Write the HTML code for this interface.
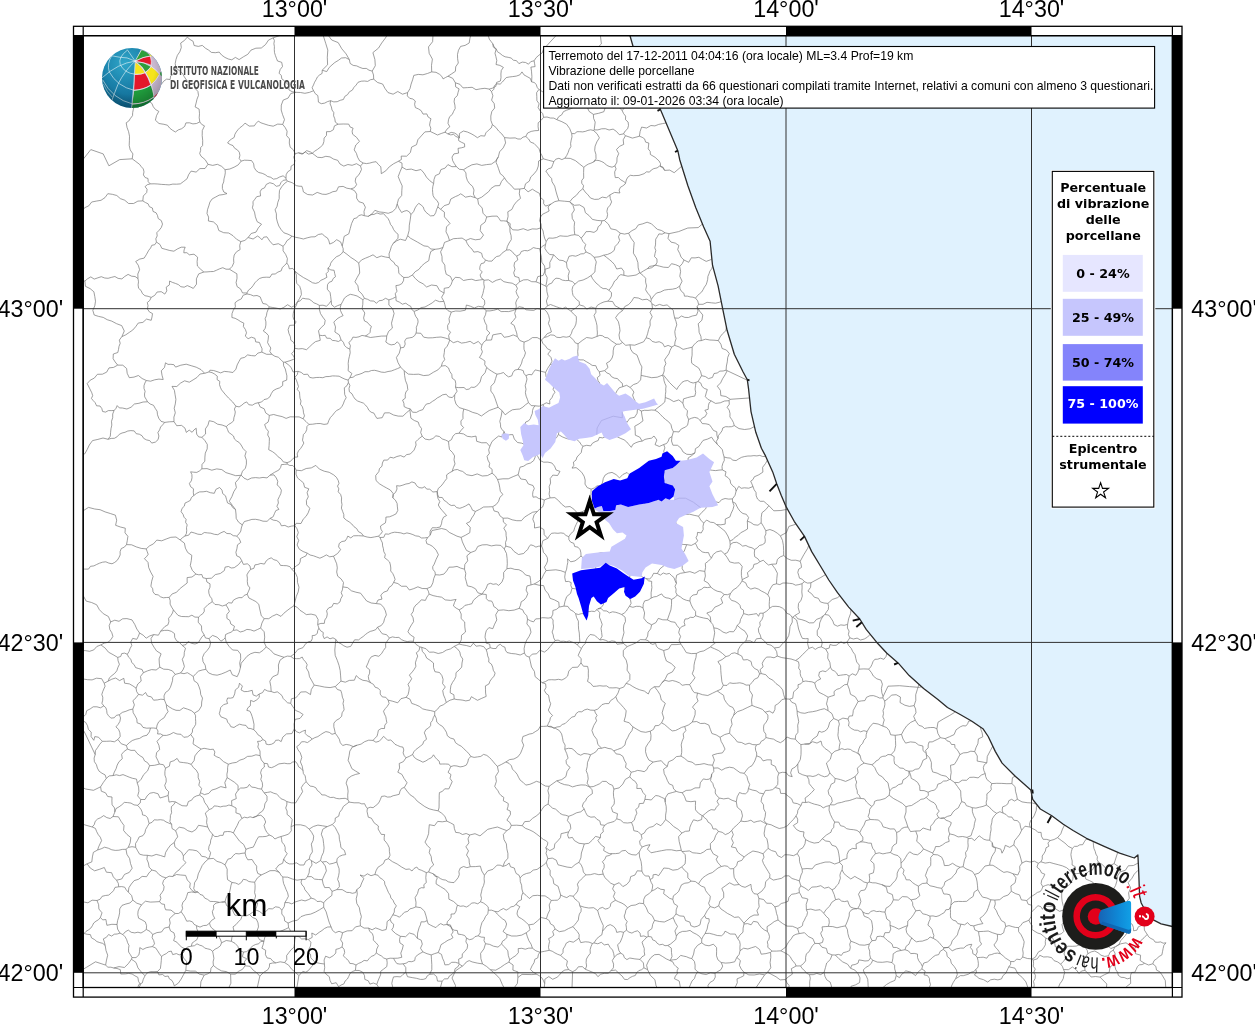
<!DOCTYPE html>
<html lang="it"><head><meta charset="utf-8"><title>Hai sentito il terremoto - Vibrazione delle porcellane</title>
<style>
html,body{margin:0;padding:0;background:#fff;}
body{width:1255px;height:1024px;overflow:hidden;position:relative;font-family:"Liberation Sans",sans-serif;}
svg{position:absolute;left:0;top:0;display:block;will-change:transform;}
.ax{font-family:"Liberation Sans",sans-serif;font-size:23.3px;fill:#000;}
.hd{font-family:"Liberation Sans",sans-serif;font-size:12px;fill:#000;}
.lg{font-family:"DejaVu Sans",sans-serif;font-weight:bold;font-size:12.5px;fill:#000;text-anchor:middle;}
</style></head><body>
<svg width="1255" height="1024" viewBox="0 0 1255 1024">
<defs><clipPath id="mapclip"><rect x="83.2" y="35.7" width="1089.2" height="951.8"/></clipPath></defs>
<rect x="0" y="0" width="1255" height="1024" fill="#fff"/>
<g clip-path="url(#mapclip)">
<path d="M630.0,35.7 L633.0,46.3 L646.0,77.0 L660.0,108.5 L677.8,150.7 L679.8,160.0 L687.8,185.5 L695.8,207.8 L703.7,226.9 L710.1,241.3 L711.2,252.4 L712.5,265.2 L718.1,285.9 L722.6,308.4 L727.1,330.3 L734.3,354.2 L743.0,371.7 L747.3,379.7 L748.6,389.2 L751.0,411.6 L755.8,432.3 L761.4,448.2 L765.5,455.9 L772.7,471.9 L776.7,483.8 L781.4,495.8 L786.2,506.9 L794.2,521.3 L804.5,536.4 L811.7,551.6 L821.3,567.5 L828.8,580.0 L837.5,592.7 L848.7,607.1 L859.8,619.0 L866.2,629.4 L876.6,642.2 L886.9,653.3 L898.1,662.9 L909.2,675.6 L923.6,688.4 L937.9,699.5 L947.5,707.5 L960.2,714.5 L971.5,721.0 L982.9,728.7 L988.2,736.5 L995.4,751.6 L1002.1,763.1 L1015.5,776.5 L1030.8,789.9 L1032.7,799.4 L1040.3,809.0 L1051.8,815.7 L1063.3,824.3 L1073.1,830.5 L1086.4,838.3 L1104.7,846.6 L1119.6,853.2 L1134.3,858.0 L1137.9,854.9 L1138.7,871.5 L1139.6,896.4 L1141.2,903.0 L1146.0,912.0 L1152.8,919.7 L1161.1,923.8 L1172.4,926.5 L1172.4,35.7Z" fill="#e0f2fe"/>
<defs><clipPath id="landclip"><path d="M630.0,35.7 L633.0,46.3 L646.0,77.0 L660.0,108.5 L677.8,150.7 L679.8,160.0 L687.8,185.5 L695.8,207.8 L703.7,226.9 L710.1,241.3 L711.2,252.4 L712.5,265.2 L718.1,285.9 L722.6,308.4 L727.1,330.3 L734.3,354.2 L743.0,371.7 L747.3,379.7 L748.6,389.2 L751.0,411.6 L755.8,432.3 L761.4,448.2 L765.5,455.9 L772.7,471.9 L776.7,483.8 L781.4,495.8 L786.2,506.9 L794.2,521.3 L804.5,536.4 L811.7,551.6 L821.3,567.5 L828.8,580.0 L837.5,592.7 L848.7,607.1 L859.8,619.0 L866.2,629.4 L876.6,642.2 L886.9,653.3 L898.1,662.9 L909.2,675.6 L923.6,688.4 L937.9,699.5 L947.5,707.5 L960.2,714.5 L971.5,721.0 L982.9,728.7 L988.2,736.5 L995.4,751.6 L1002.1,763.1 L1015.5,776.5 L1030.8,789.9 L1032.7,799.4 L1040.3,809.0 L1051.8,815.7 L1063.3,824.3 L1073.1,830.5 L1086.4,838.3 L1104.7,846.6 L1119.6,853.2 L1134.3,858.0 L1137.9,854.9 L1138.7,871.5 L1139.6,896.4 L1141.2,903.0 L1146.0,912.0 L1152.8,919.7 L1161.1,923.8 L1172.4,926.5 L1172.4,987.5 L83.2,987.5 L83.2,35.7Z"/></clipPath></defs>
<g clip-path="url(#landclip)"><path d="M1162.0,974.9 1159.8,971.8 1156.5,970.1 1155.8,966.3 1152.8,963.8M1166.0,942.8 1163.9,945.3 1163.1,948.6 1162.5,951.7 1161.9,954.9 1159.1,956.5 1156.7,958.7 1154.0,960.7 1152.8,963.8M119.3,79.0 124.7,79.0 130.2,78.5 130.7,81.3 130.9,84.1 132.8,86.3 134.3,88.6M134.3,88.6 137.7,88.0 140.2,85.5 143.0,83.7 146.0,82.1 149.3,83.0 152.1,84.9 155.7,82.9 158.8,85.6 161.7,83.9 163.7,81.2 166.6,79.1 170.2,79.5 170.6,75.9 173.8,74.0 175.5,71.2 175.9,67.9M187.3,37.1 184.4,40.5 180.7,43.0 181.3,47.5 179.8,51.8 177.4,55.3 176.0,59.4 175.2,63.6 175.9,67.9M156.4,241.8 155.8,238.8 157.2,235.9 156.8,232.7 159.1,230.3 161.3,227.5 162.5,224.1 161.3,220.6 158.2,218.5 157.5,215.5 156.1,212.8 153.0,211.4 152.4,208.0 149.4,206.7 148.1,203.8 145.4,202.5 142.8,200.9M180.3,183.9 176.5,184.2 172.8,184.1 169.1,184.9 165.3,184.6 161.6,184.4 157.8,184.0 154.1,183.8 150.3,183.9M142.8,200.9 143.3,196.0 146.7,192.5 147.1,189.2 145.0,186.7 147.3,184.7 150.3,183.9M116.5,880.2 113.3,876.9 111.6,872.7 106.4,872.2 104.3,867.5 99.5,869.3 94.6,870.8 90.2,868.0 87.1,863.8M116.5,880.2 118.3,883.3 118.7,886.8M118.7,886.8 115.0,887.4 113.5,890.7 111.2,893.0 108.7,895.1 105.4,895.5 102.1,896.3 100.2,899.2 97.0,900.5M97.0,900.5 92.1,900.2 87.9,902.8 83.3,901.9 79.1,899.7 75.7,896.6 74.2,892.2 72.5,887.5 67.8,885.9 63.2,884.6 59.7,881.3 56.7,877.7 53.2,874.6 49.1,876.8 44.7,878.1 40.0,878.5 35.7,880.4M35.7,880.4 38.9,877.2 43.0,875.5 43.7,871.2 44.3,866.8 48.8,867.5 51.9,870.8 56.0,869.4 60.3,868.5 63.8,868.9 67.1,867.9 70.6,868.9 74.0,867.9 77.4,866.9 80.3,864.9 83.9,865.6 87.1,863.8M1162.0,974.9 1165.3,980.5 1165.7,986.9 1161.6,991.7 1158.6,997.3 1158.4,1003.3 1161.9,1008.1 1165.5,1012.8 1165.7,1018.7 1165.5,1025.2 1160.9,1029.7 1155.0,1030.9 1149.7,1033.8 1147.1,1038.8 1142.7,1042.5 1136.6,1043.4 1133.4,1048.6M1166.0,942.8 1163.2,943.2 1160.6,941.9 1157.8,942.3 1155.1,942.1 1153.5,939.7 1150.9,938.5 1148.7,936.8 1147.2,934.4M1190.4,870.8 1189.7,874.0 1187.0,875.7 1184.4,877.0 1182.0,878.7 1179.1,879.4 1176.8,881.2 1174.8,883.3 1172.1,884.6M1172.1,884.6 1170.8,887.7 1167.7,889.4 1164.6,890.4 1161.7,891.9 1160.3,894.8 1158.1,897.1 1157.4,900.9 1153.5,901.5 1150.8,903.6 1148.1,905.7 1149.6,909.4 1147.2,912.6 1146.9,915.8 1145.4,918.6 1146.7,922.2 1144.1,924.9M1147.2,934.4 1144.4,930.1 1144.1,924.9M84.9,281.0 87.7,278.7 90.8,276.9 94.2,279.1 97.9,277.8 101.3,276.7 104.7,278.0 108.1,278.3 111.3,277.4 114.9,276.5 118.1,278.4 121.9,278.9 124.7,276.5 128.1,274.4 131.6,276.2 135.1,276.5 138.0,278.6M84.9,281.0 64.6,277.0 49.6,262.8 31.1,270.1 12.7,277.4 -0.6,263.6 -19.3,259.3 -35.7,249.1 -43.0,231.2 -57.1,244.2 -76.2,245.8 -93.3,238.6 -111.7,238.3 -130.1,239.8 -145.5,229.6 -162.9,226.1 -180.3,230.0M79.5,215.5 74.1,212.7 68.6,210.2 62.7,206.9 56.5,209.7 50.6,211.5 44.7,213.2 39.5,208.8 32.8,209.8 28.2,214.4 22.4,217.4 16.0,218.7 9.5,218.0 2.6,216.6 -3.8,219.6 -9.2,215.6 -14.2,211.0M148.8,250.2 146.6,254.2 144.2,258.1 139.7,259.1 135.7,261.5 138.3,265.3 139.6,269.7 137.8,274.0 138.0,278.6M132.2,158.8 135.8,161.5 139.5,164.3M150.3,183.9 148.2,181.7 148.0,178.5 145.1,177.5 143.4,174.9 144.0,171.9 143.3,168.9 141.3,166.7 139.5,164.3M132.2,158.8 119.7,159.6 108.9,165.8 103.2,153.9 90.8,149.6 81.1,161.9 69.5,151.5 58.8,152.1 48.8,156.3 43.4,165.7 37.1,174.5 28.1,180.7 17.7,184.1 12.0,193.2 2.8,198.8 -2.9,208.7 -14.2,211.0M142.8,200.9 137.9,201.1 133.6,203.5 128.6,203.5 124.7,200.2 120.3,198.6 116.8,195.5 112.3,194.3 107.8,193.7 105.0,197.6 101.0,200.3 96.3,201.1 91.7,202.0 88.8,205.8 84.5,207.8 81.9,211.6 79.5,215.5M156.5,242.1 156.4,241.8M156.5,242.1 154.8,244.7 151.8,245.3 150.6,248.0 148.8,250.2M126.2,122.8 127.0,127.4 128.6,131.7 129.5,136.2 129.4,140.8 129.2,145.4 130.2,149.9 132.9,153.9 132.2,158.8M87.1,863.8 91.8,861.9 92.4,856.9 93.4,852.3 97.6,850.0M116.5,880.2 121.7,879.0 124.5,874.4 129.3,872.4 132.2,868.2 130.5,863.5 129.6,858.6 126.9,854.3 126.0,849.3M126.0,849.3 122.4,849.4 118.9,850.2 115.3,850.4 111.8,849.8 108.3,848.2 104.6,847.2 101.2,848.8 97.6,850.0M-15.6,799.5 -8.2,801.3 -1.3,797.8 6.0,796.1 13.0,799.1 20.3,801.1 27.3,798.4 33.9,803.8 41.6,800.3 49.1,800.5 55.6,804.2 62.1,807.4 69.1,809.4 71.9,816.7 77.8,821.9 84.9,824.9 92.2,827.0M97.6,850.0 98.6,846.9 100.0,843.9 101.6,840.6 100.3,837.2 98.3,834.7 96.7,831.7 95.4,828.4 92.2,827.0M100.4,917.5 98.5,919.7 96.0,921.2 93.7,923.0 92.4,925.7 90.8,928.1 88.5,929.9 86.0,931.4 84.1,933.5M100.4,917.5 102.0,912.8 98.9,909.0 98.6,904.6 97.0,900.5M-40.2,958.4 -31.9,958.8 -23.8,960.7 -15.7,958.8 -8.0,955.7 0.9,957.6 7.8,963.7 15.7,959.8 24.2,957.2 32.4,964.2 41.2,958.1 49.2,954.1 58.0,955.1 66.1,951.9 71.6,945.0 76.3,937.6 84.1,933.5M134.3,88.6 134.1,91.6 135.0,94.5 135.1,97.5 134.8,100.4M126.2,122.8 128.8,121.0 130.5,118.3 132.5,115.7 132.7,112.5 133.3,109.5 134.1,106.5 134.6,103.5 134.8,100.4M1114.1,963.7 1115.0,966.7 1115.8,969.7 1117.6,972.3 1118.3,975.3 1121.0,977.3 1124.2,977.5 1127.3,978.8 1130.5,978.0M1114.1,963.7 1114.7,960.2 1115.2,956.8 1115.0,953.2 1113.3,950.1M1113.3,950.1 1115.1,946.8M1134.8,948.3 1130.3,945.7 1126.0,942.8 1120.8,943.8 1116.2,946.3M1134.8,948.3 1135.5,953.7 1140.6,955.2 1140.2,960.5 1144.6,963.3M1115.1,946.8 1116.2,946.3M1144.6,963.3 1142.1,964.6 1139.3,964.8 1137.3,966.8 1136.2,969.4 1134.8,972.3 1131.6,972.5 1130.6,975.2 1130.5,978.0M1100.0,977.1 1104.5,974.7 1109.1,972.5 1110.0,967.2 1114.1,963.7M1100.0,977.1 1106.8,984.0 1105.8,993.7 1100.0,1000.4 1097.0,1008.8 1102.5,1015.2 1102.8,1023.7 1105.2,1031.5 1110.8,1037.5 1117.5,1042.7 1120.8,1050.6 1124.3,1058.2 1130.3,1064.0 1134.6,1072.0 1135.0,1081.1 1130.2,1088.5 1126.8,1096.7M1133.4,1048.6 1133.0,1043.9 1134.9,1039.6 1132.6,1035.5 1132.4,1030.9 1135.5,1026.7 1134.7,1021.5 1130.4,1018.5 1129.6,1013.4 1128.6,1008.7 1126.3,1004.6 1128.1,1000.2 1129.3,995.7 1127.6,991.2 1126.5,986.6 1130.7,983.4 1130.5,978.0M1126.8,920.9 1129.5,922.6 1132.3,924.4 1133.4,927.5 1133.6,930.8 1137.0,930.1 1138.3,926.8 1141.1,925.6 1144.1,924.9M1147.2,934.4 1144.0,937.8 1140.5,940.9 1138.0,944.8 1134.8,948.3M1126.8,920.9 1130.3,923.9 1128.8,928.3 1127.4,931.9 1125.5,935.3 1123.1,938.0 1120.7,940.7 1119.2,944.1 1116.2,946.3M1152.8,963.8 1148.6,965.0 1144.6,963.3M134.8,100.4 138.3,100.4 141.9,100.9 145.4,100.5 148.9,101.2 151.9,103.4 153.3,106.8 155.6,109.6 158.8,111.4 156.5,115.6 155.4,120.2 159.0,123.5 163.9,124.3 167.4,125.2 169.7,128.1 172.4,130.2 175.4,132.0M180.3,183.9 183.7,181.4 187.1,178.7 188.6,174.7 191.1,171.1M175.4,132.0 178.3,129.9 181.7,128.7 184.7,126.4 185.9,122.9 189.5,122.8 192.9,123.9 196.5,123.5 199.8,121.9M175.9,67.9 179.1,70.4 182.3,73.0 184.2,76.6 186.4,80.0 189.8,83.4 194.5,83.4 194.7,88.0 197.9,91.4M197.9,91.4 198.5,95.4 197.0,99.2 196.1,103.1 195.1,106.9 199.1,109.1 199.5,113.7 199.2,117.8 199.8,121.9M208.0,164.3 205.2,159.7 201.0,156.2 199.7,153.5 200.6,150.6 200.6,147.7 202.6,145.5 202.7,140.5 202.2,135.5 202.3,130.5 204.5,125.9M191.1,171.1 196.1,172.1 199.9,168.6 205.0,168.5 208.0,164.3M199.8,121.9 201.7,124.4 204.5,125.9M208.0,164.3 212.7,165.4 217.4,164.3 221.7,166.4 225.1,169.7M207.0,213.6 207.5,209.7 208.8,205.9 209.9,202.1 212.2,198.9 215.7,197.0 219.2,195.1 223.1,194.6 227.0,193.6M227.0,193.6 223.8,192.0 222.4,188.6 222.4,185.1 223.7,181.9 224.0,178.8 224.8,175.8 225.3,172.8 225.1,169.7M242.5,125.9 240.1,127.5 238.1,129.6 236.3,131.9 234.9,134.3 234.2,137.4 231.6,139.0 229.3,140.7 227.6,143.0 230.2,144.5 233.0,145.6 234.7,148.3 237.3,149.8 239.3,152.2 239.9,155.3 239.2,158.5 241.2,161.1M225.1,169.7 229.8,169.0 234.1,167.2 238.2,164.9 241.2,161.1M185.2,247.2 184.1,249.9 183.8,252.8 186.9,252.7 189.3,254.8 194.0,254.2 197.6,257.2 197.1,261.6 197.4,266.0 200.5,269.1 203.8,272.0M208.4,221.0 213.4,221.9 217.2,225.3 218.8,230.5 223.7,232.7 228.7,233.0 233.0,235.7 236.5,239.2 240.8,241.6M203.8,272.0 207.0,271.9 210.3,271.6 213.5,271.5 216.6,270.2 219.6,268.8 222.8,267.7 226.0,269.2 229.4,269.2M229.4,269.2 232.2,266.4 233.8,262.7 233.6,258.8 234.2,255.0 236.6,251.7 240.1,249.6 239.7,245.5 240.8,241.6M156.5,242.1 160.0,244.5 161.8,248.3 165.8,249.4 169.8,250.5 173.9,251.2 177.5,248.9 181.2,247.2 185.2,247.2M207.0,213.6 208.6,217.1 208.4,221.0M193.3,288.4 190.3,286.9 187.3,285.6 184.2,287.2 180.8,286.7 178.4,284.6 175.4,283.4 172.4,282.4 169.6,281.0 169.4,284.9 166.2,287.2 166.8,290.9 164.8,294.1 161.3,291.7 157.1,292.0 154.7,295.4 151.2,297.4M138.0,278.6 138.5,281.8 138.1,284.9 138.6,288.3 141.1,290.5 142.4,293.5 144.9,295.7 148.1,296.3 151.2,297.4M193.3,288.4 196.5,284.2 196.4,278.8 198.7,273.9 203.8,272.0M107.9,967.2 110.9,967.2 113.7,968.0M107.9,967.2 105.6,965.1M105.6,965.1 106.5,960.1 107.7,955.2 106.0,950.5 105.2,945.5M113.7,968.0 119.0,966.6 124.4,967.5 128.3,963.7 131.4,959.3M132.0,957.6 130.4,954.7 128.6,952.0 128.5,948.8 129.0,945.5 127.6,942.7 126.7,939.7 125.2,936.9 122.9,934.6M132.0,957.6 131.4,959.3M105.2,945.5 104.4,942.1 103.3,938.9 106.4,937.3 108.6,934.5 111.6,936.1 114.3,934.2 117.2,934.0 120.0,933.1M122.9,934.6 120.0,933.1M134.9,1003.2 135.6,999.4 133.1,996.6 133.6,993.2 135.0,990.1 138.4,988.0 140.6,984.7 138.5,981.3 137.9,977.4 134.9,975.8 132.1,974.0 128.7,973.4 125.3,973.9 120.8,974.0 120.3,969.6 117.0,968.5 113.7,968.0M-40.2,958.4 -29.7,957.3 -22.4,964.9 -13.3,967.7 -4.7,971.7 3.0,977.9 12.2,981.6 21.9,983.0 31.8,982.2 36.2,971.4 47.8,970.7 58.2,973.4 67.3,967.6 77.0,972.9 86.5,967.3 95.5,961.8 105.6,965.1M84.1,933.5 87.2,934.3 90.4,934.6 91.5,937.9 94.6,939.6 96.9,941.6 99.8,942.6 102.8,943.4 105.2,945.5M134.9,1003.2 132.8,999.5 132.7,995.3 134.1,991.2 137.5,988.6 138.7,984.7 142.3,982.9 143.3,979.2 145.0,975.8M145.0,975.8 141.3,972.0 137.9,967.8 137.0,965.1 136.0,962.5 133.8,960.8 131.4,959.3M152.3,946.6 155.6,947.9 157.6,950.8 159.5,953.8 161.5,956.5M152.3,946.6 149.2,947.1 146.1,947.8 142.9,949.5 139.8,947.6 139.6,951.3 138.9,954.9 136.0,957.6 132.0,957.6M145.0,975.8 147.2,972.9 150.5,971.6 154.0,971.7 157.5,971.5M161.5,956.5 161.3,960.4 160.9,964.4 160.4,968.5 157.5,971.5M100.4,917.5 102.7,919.9 105.9,919.5 106.4,922.4 106.9,925.3 111.9,924.3 117.0,924.5M117.0,924.5 117.6,929.1 120.0,933.1M117.0,924.5 117.6,920.6 118.8,916.8 119.6,912.9 119.7,908.9 122.0,905.4 125.9,904.0 129.9,903.0 132.8,900.1M118.7,886.8 121.7,886.6 124.7,887.2 126.2,889.8 128.3,892.1M132.8,900.1 131.6,895.5 128.3,892.1M151.2,297.4 149.8,300.4 147.3,302.5 148.0,305.7 147.4,308.9 149.4,311.9 152.5,313.6 152.0,317.0 151.2,320.3M84.9,281.0 85.4,286.3 90.1,288.6 93.9,291.8 94.8,296.6 95.5,301.2 94.8,305.8 92.8,310.3 94.2,315.0 98.6,316.4 103.2,317.4 107.2,319.7 111.7,321.1 116.6,323.7 121.7,325.6 124.3,331.0 121.9,336.6M121.9,336.6 125.8,334.8 129.3,332.4 132.8,330.0 135.6,326.8 138.3,323.0 142.9,322.4 146.5,319.1 151.2,320.3M121.9,336.6 119.3,340.1M87.2,383.6 90.2,380.2 94.3,378.1 97.4,374.3 102.4,374.2 106.7,372.1 109.0,367.9 113.6,367.4 117.7,365.1M119.3,340.1 120.2,343.3 119.0,346.4 118.5,349.5 117.8,352.5 113.3,354.0 113.1,358.7 115.2,362.0 117.7,365.1M117.7,365.1 122.8,365.2 126.6,368.5 127.2,373.3 129.3,377.7 134.0,377.1 138.4,375.5 142.1,378.5 146.3,380.5M114.1,410.5 116.0,408.3 117.2,405.6 119.3,407.9 122.4,408.0 126.9,409.0 131.1,407.2 134.4,404.0 138.9,403.3 143.1,402.0 147.5,401.8M114.1,410.5 111.2,410.6 108.3,410.6 105.6,412.1 102.6,411.5 101.8,408.5 100.0,406.0 96.6,405.8 95.1,402.6 93.2,400.6 91.4,398.4 92.7,395.7 91.8,392.8 89.5,388.2 87.2,383.6M147.5,401.8 146.2,399.3 144.7,396.9 144.5,394.0 145.1,391.3 144.0,388.5 144.0,385.7 144.9,383.0 146.3,380.5M165.5,362.8 164.5,367.4 161.3,370.8 162.0,375.2 163.2,379.5 158.9,379.1 154.7,379.8 150.6,381.2 146.3,380.5M241.2,161.1 244.4,160.2 247.9,160.3 251.6,160.6 253.7,163.8 254.1,167.3 255.9,170.4 258.7,172.5 262.2,173.3 265.1,174.6 267.6,176.5 270.8,177.3 273.4,179.2 276.7,178.6 279.6,177.0 283.1,175.8 286.0,178.2M295.3,153.7 293.8,157.0 294.8,160.5 294.3,164.2 291.1,166.1 290.8,169.8 287.7,171.8 286.1,174.8 286.0,178.2M242.5,125.9 245.0,123.1M295.3,153.7 293.4,149.9 290.2,147.2 289.3,143.1 289.5,138.9 286.6,135.6 287.1,131.2 285.2,127.6 282.7,124.4M282.7,124.4 277.7,124.1 273.2,126.2 268.5,125.3 263.9,123.8 260.9,122.8 258.3,121.1 256.1,123.3 254.3,125.9 249.2,126.1 245.0,123.1M629.5,55.6 627.0,57.4 625.7,60.1 626.2,63.2 624.6,66.0 621.6,64.6 618.4,65.1 616.0,67.2 613.6,69.2 610.7,69.8 607.8,70.3 606.0,67.9 603.5,66.3 598.4,65.2 593.5,63.6M586.2,-242.0 603.7,-229.4 609.7,-208.7 614.6,-188.9 615.7,-168.5 615.8,-148.4 611.2,-128.9 608.6,-108.6 597.3,-91.5 589.6,-73.1 593.9,-53.6 605.9,-35.9 598.6,-15.8 594.0,3.4 598.8,22.6 601.4,43.9 586.2,58.9M593.5,63.6 589.3,62.1 586.2,58.9M209.9,370.2 213.6,370.5 217.0,371.6 220.7,372.9 224.3,371.4 228.6,371.8 232.9,372.5 235.9,369.2 237.2,364.9 238.9,361.6 240.8,358.3 244.6,357.4 247.6,354.9 251.3,355.6 255.2,355.9 257.9,353.1 261.8,352.1M231.9,317.5 235.1,318.3 238.1,319.9 240.8,321.7 243.8,323.1 243.4,326.6 245.4,329.5 246.5,332.8 245.3,336.1 248.1,338.7 251.5,337.2 255.0,338.4 255.7,341.9 259.4,342.4 260.7,345.8 262.1,348.8 261.8,352.1M240.8,241.6 244.9,240.4 248.1,237.5M248.1,237.5 251.2,233.5 256.0,232.1 258.3,227.9 261.5,224.2 257.1,221.6 255.4,216.8 254.5,212.1 252.4,207.8M286.0,178.2 286.4,179.9M252.4,207.8 253.1,204.7 253.0,201.7 254.9,199.2 256.7,196.7 260.6,195.9 260.1,191.8 261.6,189.1 264.5,187.9 266.3,184.4 269.8,182.7 273.5,183.8 276.3,186.3 279.6,185.6 281.0,182.5 283.2,180.3 286.4,179.9M161.5,956.5 163.8,954.8 166.3,953.6 168.5,951.7 171.3,951.1 172.7,954.6 176.4,953.6 179.2,954.9 182.1,953.9M157.5,971.5 158.9,974.9 162.6,974.5 165.0,976.5 168.2,976.0 169.4,978.9 172.0,980.5 173.4,983.1 174.3,985.9M174.3,985.9 178.4,983.1 181.2,979.0 183.5,974.7 185.8,970.3M182.1,953.9 183.7,958.1 186.6,961.5 186.2,965.9 185.8,970.3M132.8,900.1 136.8,903.2 141.6,904.8M122.9,934.6 125.2,931.9 128.3,930.1 131.2,932.3 134.8,932.9 137.9,932.2 141.0,933.0 143.8,931.4 146.3,929.5M141.6,904.8 139.6,907.7 138.1,911.0 137.8,914.6 138.6,918.2 142.0,919.9 145.3,921.9 146.6,925.6 146.3,929.5M152.3,946.6 154.5,943.9 153.7,940.6 152.1,937.7 152.7,934.5M182.1,953.9 184.1,951.6 185.2,948.9M185.2,948.9 181.9,947.3 179.2,944.9 176.9,942.2 173.6,940.6 174.9,936.8 174.0,932.9 170.5,930.9 169.1,927.0M169.1,927.0 164.4,928.1 161.5,932.0 156.9,932.6 152.7,934.5M146.3,929.5 150.0,931.4 152.7,934.5M164.7,422.4 161.0,421.3 158.8,418.3 157.5,414.8 157.1,411.2 155.2,408.3 153.5,405.3 150.2,404.0 147.5,401.8M151.9,443.0 151.8,443.1M151.9,443.0 155.4,442.1 158.1,439.6 158.9,436.0 157.9,432.5 159.6,429.9 160.6,427.0 162.7,424.8 164.7,422.4M114.1,410.5 112.7,414.0 112.7,417.7 111.5,421.3 111.8,425.1 111.0,428.7 110.6,432.3 110.3,436.2 108.1,439.3M108.1,439.3 111.2,438.4 114.4,438.3 117.2,436.7 119.3,434.3 122.0,433.0 125.0,432.3 127.8,431.0 130.9,430.6 134.2,430.9 136.2,433.7 139.3,434.2 142.0,435.7 143.7,438.4 146.5,439.9 149.7,440.6 151.8,443.1M164.7,422.4 169.3,421.8 174.0,421.6M165.5,362.8 168.0,364.4 170.9,364.3 173.9,364.7 175.6,367.1 180.8,365.2 186.2,364.2 191.2,365.7 196.2,367.2 201.0,369.6 204.7,373.3M174.0,421.6 173.9,417.1 175.3,412.8 174.2,408.3 175.3,403.9 175.9,399.3 175.1,394.8 174.4,390.3 172.0,386.4 176.8,386.5 180.4,383.2 184.6,380.8 189.3,382.2 193.1,379.9 196.9,377.5 200.1,374.0 204.7,373.3M209.9,370.2 209.0,371.9M209.0,371.9 204.7,373.3M201.9,437.3 198.7,436.9 196.7,434.2 196.4,431.2 196.2,428.2 193.9,430.0 192.1,432.3 189.2,430.1 186.3,432.4 185.0,428.2 181.6,425.4 176.7,425.7 174.0,421.6M201.9,437.3 204.9,440.6 207.3,444.4 207.2,448.9 205.3,453.1 204.9,457.1 204.8,461.2 202.0,464.5 201.9,468.8M189.4,483.4 191.3,480.9 192.0,477.8 191.9,474.6 190.6,471.8 193.7,472.2 196.8,472.4 199.5,470.9 201.9,468.8M273.2,37.8 274.4,40.6 273.9,43.7 274.4,46.6 274.3,49.6 274.5,52.6 275.4,55.5 276.4,58.2 277.5,61.0 281.7,62.3 282.5,66.5 280.2,69.5 279.1,73.2 281.3,75.5 281.8,78.8 284.3,80.7 286.5,82.9M273.2,37.8 268.5,40.1 265.5,44.6 261.3,48.0 255.9,48.2 251.0,50.1 247.8,54.3 243.4,56.8 239.1,59.6M187.3,37.1 190.0,39.5 193.1,41.3 194.1,45.5 198.3,46.4 202.3,45.4 205.4,48.2 208.6,50.1 211.4,52.4 215.3,52.7 219.2,52.1 221.7,55.1 224.9,57.4 228.3,59.0 231.8,59.8 235.4,57.4 239.1,59.6M300.3,-52.4 304.1,-46.7 308.7,-41.5 310.8,-34.9 311.0,-27.9 308.0,-21.6 308.3,-14.7 305.2,-8.7 302.2,-2.7 298.8,3.5 299.9,10.5 296.9,16.6 295.7,23.3 287.6,21.8 283.5,29.0 280.1,35.4 273.2,37.8M295.9,92.3 292.2,91.7 288.9,89.9 289.1,85.9 286.5,82.9M295.9,92.3 290.8,93.5 288.1,98.1 283.2,100.1 281.3,105.1 281.2,110.0 282.6,114.7 284.5,119.6 282.7,124.4M586.2,-242.0 595.3,-223.7 593.6,-203.4 588.9,-184.1 589.7,-164.2 586.8,-144.0 590.4,-123.9 594.8,-103.0 611.4,-89.5 604.4,-71.4 596.0,-53.9 585.3,-37.8 576.1,-20.7 576.3,1.0 577.6,22.7 558.2,33.2 543.4,49.4M586.2,58.9 583.1,60.4 580.2,62.3 576.8,62.8 573.8,64.6M573.8,64.6 570.5,61.5 568.3,57.5 564.8,54.7 560.6,52.9 556.1,51.9 551.6,53.0 547.3,51.5 543.4,49.4M483.2,23.3 481.6,26.4 483.5,29.2 485.9,31.3 486.0,34.5 488.5,36.3 489.3,39.2 491.1,41.5 492.8,43.8M492.8,43.8 493.3,47.1 496.2,48.7 497.4,51.7 500.0,53.4 502.4,55.4 505.1,56.8 508.1,57.3 511.1,58.0 513.4,60.2 516.5,60.7 518.9,63.6 522.3,62.1 525.6,62.5 528.5,64.2 530.8,61.6 534.1,60.8M543.4,49.4 542.1,53.0 538.9,55.2 536.1,57.7 534.1,60.8M573.8,64.6 572.4,67.5 573.1,70.6 570.1,71.4 567.6,73.2 566.1,78.5 567.4,83.9M567.4,83.9 568.4,87.9 569.1,92.0 573.2,92.5 577.2,93.7M593.5,63.6 595.7,68.5 595.6,73.9 597.4,78.9 598.0,84.1M598.0,84.1 594.9,84.4 591.7,83.9 589.1,85.8 587.4,88.5 583.5,89.7 580.3,87.1 578.5,90.3 577.2,93.7M483.2,23.3 482.1,27.7 478.2,29.9 473.5,30.0 471.0,33.9 469.9,38.5 469.2,43.0 465.1,45.4 460.6,46.4 458.5,50.2 457.5,54.4 457.6,58.7 458.3,63.0 455.7,66.8 455.4,71.3 451.7,73.8 448.0,76.2M448.0,76.2 452.7,78.3 455.4,82.8M492.8,43.8 494.2,46.9 496.0,49.8 495.0,53.2 495.9,56.6 496.8,60.5 496.0,64.5 499.9,65.4 503.4,67.4 501.3,70.4 500.9,74.0 501.0,77.5 500.4,81.0 496.6,82.4 495.8,86.4 492.6,88.1 489.2,89.1M455.4,82.8 459.9,84.3 463.0,87.9 467.5,87.6 472.1,87.3 476.0,89.7 480.5,88.8 484.9,88.3 489.2,89.1M524.3,188.4 528.1,191.8 532.4,189.2 535.8,191.4 539.4,193.3 540.5,197.5 543.8,200.3 543.6,203.5 545.5,206.1 548.4,205.2 551.2,203.9M524.3,188.4 525.5,183.8 529.3,181.1 530.8,176.9 534.1,173.8 536.8,170.3 538.3,166.1 538.6,161.0 543.3,158.8M553.9,161.6 548.6,160.3 543.3,158.8M553.9,161.6 552.7,164.7 551.5,167.8 548.3,168.8 545.8,171.0 547.6,173.6 549.3,176.1 551.6,178.5 552.0,181.7 554.7,186.1 555.9,191.1 557.3,196.0 558.9,200.7M558.9,200.7 554.8,201.6 551.2,203.9M569.8,201.7 570.2,202.3M569.8,201.7 572.7,198.1 576.4,195.3 579.3,191.6 582.9,188.7M601.9,220.8 597.1,220.4 592.4,219.4 589.2,215.7 585.4,212.7 584.1,207.6 579.6,204.9 574.4,205.3 570.2,202.3M601.9,220.8 604.4,220.5M582.9,188.7 585.2,192.0 588.0,194.9 590.6,198.1 594.6,199.4 598.6,199.2 602.2,197.1 606.4,197.8 609.8,195.0M604.4,220.5 606.9,218.0 607.6,214.6 606.9,211.3 607.7,207.9 610.1,205.2 611.6,201.9 610.3,198.6 609.8,195.0M248.1,237.5 253.1,239.0 257.5,236.0 259.9,237.6 261.9,239.8 263.7,237.2 266.9,236.8 269.7,241.0 273.1,244.8 278.4,243.7 283.1,246.3M229.4,269.2 233.1,271.5 236.9,273.8 237.0,278.3 236.1,282.6 237.1,286.6 240.5,288.9 242.5,292.9 246.9,293.0M283.1,246.3 283.1,250.8 285.7,254.5 287.4,258.6 286.8,263.0M246.9,293.0 248.5,290.1 251.1,288.1 253.1,285.6 254.8,282.9 257.1,280.5 259.7,278.4 262.9,277.4 266.3,277.2 270.0,277.3 271.9,274.1 275.2,274.0 277.9,272.1 281.2,270.8 282.3,267.5 284.6,265.4 286.8,263.0M231.9,317.5 232.0,313.7 233.3,310.2 235.4,306.8 235.0,302.8 237.9,300.5 241.3,298.9 243.2,295.2 247.1,294.0M246.9,293.0 247.1,294.0M322.3,233.8 318.3,234.5 315.0,236.8 311.1,236.9 307.3,237.8 303.4,239.0 299.4,238.0 295.6,237.3 291.8,236.1M291.8,236.1 288.0,234.2 283.9,232.8 281.1,229.6 278.8,226.0 277.4,222.0 276.4,218.0 276.4,213.8 275.1,209.8 277.1,206.3 277.8,202.4 279.2,198.6 279.2,194.6 279.5,190.4 281.7,186.8 284.3,183.7 287.6,181.2M322.3,194.2 317.2,192.4 312.6,195.0 307.6,194.5 303.4,191.9 302.8,189.1 301.9,186.3 299.0,186.2 296.2,185.6 292.2,182.7 287.6,181.2M283.1,246.3 285.3,243.7 286.9,240.7 289.7,238.8 291.8,236.1M286.4,179.9 287.6,181.2M570.2,202.3 573.1,205.7 574.4,210.0 571.9,213.9 572.3,218.5 574.6,222.2 574.2,226.5 574.3,230.7 574.8,234.7M601.9,220.8 601.0,224.4 598.2,226.7 597.1,230.3 594.0,232.4 590.0,231.5 586.0,231.7 583.8,235.0 581.2,238.1M581.2,238.1 578.5,235.4 574.8,234.7M569.8,201.7 564.4,201.2 558.9,200.7M541.3,227.7 543.1,230.9 543.7,234.6 544.6,238.2 546.2,241.5M551.2,203.9 548.0,206.9 549.1,211.0 545.8,212.7 542.5,214.3 540.4,217.2 539.6,220.8 541.1,224.1 541.3,227.7M574.8,234.7 571.1,235.2 567.5,236.3 563.7,236.2 560.0,235.8 556.6,237.5 552.9,238.2 548.6,238.0 546.2,241.5M1113.3,950.1 1110.0,952.2 1108.5,955.8 1104.7,956.4 1101.0,955.2 1098.1,952.8 1094.8,951.0 1091.2,951.9 1087.8,953.7M1100.0,977.1 1095.6,976.5 1091.1,977.0 1088.2,973.5 1085.0,970.4M1085.0,970.4 1084.6,966.0 1083.9,961.7 1085.0,957.3 1087.8,953.7M1060.8,719.7 1057.7,724.6 1058.6,730.3 1054.5,734.0 1052.3,739.1 1047.9,742.5 1044.7,747.0 1039.6,749.3 1034.1,749.9 1033.5,755.2 1029.9,759.2 1028.1,764.0 1025.7,768.5 1022.1,772.3 1017.6,774.9 1012.4,777.7 1011.9,783.6M1060.8,719.7 1055.0,720.9 1051.1,725.3 1047.9,730.0 1043.2,733.1 1037.4,732.8 1032.4,735.7 1027.2,737.7 1021.5,737.4 1014.6,738.7 1008.7,734.9 1002.7,737.5 996.5,739.7 993.3,745.1 990.3,750.7 987.3,756.4 986.8,762.9M1011.9,783.6 1006.9,783.7 1001.8,783.4 996.8,783.3 991.8,783.6M991.8,783.6 989.4,781.5 986.9,779.5 985.7,776.6 985.2,773.5M986.8,762.9 984.3,764.7 983.3,767.7 983.9,770.7 985.2,773.5M204.2,975.1 207.6,973.9 210.5,971.9 211.0,968.2 213.4,965.5M213.4,965.5 217.2,968.5 221.5,970.9 226.4,971.6 230.6,974.1M204.2,975.1 200.9,981.8 200.3,989.2 194.1,993.6 191.0,1000.5 186.6,1007.1 180.2,1011.8 182.8,1019.5 181.5,1027.4 189.6,1027.8 195.9,1032.8 200.8,1038.6 205.4,1044.7 206.1,1052.3 208.7,1059.5 212.8,1065.8 217.6,1071.6M230.6,974.1 230.9,983.2 227.1,991.4 234.2,996.8 240.4,1003.1 237.7,1011.3 229.4,1013.9 222.5,1017.4 216.1,1021.8 221.0,1028.3 216.5,1035.1 217.5,1042.3 223.3,1046.5 223.7,1053.2 223.7,1059.8 220.7,1065.8 217.6,1071.6M185.8,970.3 190.5,971.1 195.4,971.1 199.3,974.1 204.2,975.1M230.6,974.1 235.2,974.2 238.6,971.3 242.5,969.3 245.1,965.8M295.0,1276.3 297.9,1253.1 295.5,1229.9 274.7,1219.5 254.6,1207.9 240.2,1189.4 233.8,1166.9 246.2,1147.6 258.8,1128.4 259.8,1107.5 251.9,1088.1 262.5,1070.6 271.9,1052.4 260.8,1034.8 264.9,1014.4 255.4,996.2 259.8,976.2M259.8,976.2 256.8,972.8 253.1,970.1 250.0,966.3 245.1,965.8M42.8,473.7 43.7,479.9 49.1,483.0 53.1,487.5 53.7,493.4 59.9,493.2 64.1,497.9 67.8,502.5 73.6,504.1 79.5,505.7 83.1,510.8 88.5,507.4 94.7,509.0 100.1,509.7 105.1,511.9 110.3,513.5 115.4,515.2M42.8,473.7 47.6,471.7 52.9,471.4 57.7,473.3 62.9,473.8 66.0,472.8 69.0,471.8 72.3,472.2 75.2,473.6 75.4,470.1 78.1,468.1 79.9,465.3 79.3,462.0M108.1,439.3 103.0,438.0 97.9,439.4 92.5,440.6 89.3,445.0 87.2,449.5 84.8,453.8 82.0,454.5 79.7,456.3 80.5,459.2 79.3,462.0M201.9,437.3 205.6,434.0 205.4,428.9 208.0,425.1 209.2,420.7 213.7,421.7 217.6,424.2 222.1,425.0 226.3,426.6M209.0,371.9 212.0,372.6 214.7,374.1 217.3,376.2 217.1,379.6 219.8,381.4 219.5,384.6 220.4,387.3 221.5,389.8 225.0,394.1 228.6,398.1 232.6,401.9 235.9,406.2M226.3,426.6 228.5,424.5 231.1,423.0 233.6,420.9 233.9,417.7 234.8,414.9 235.3,412.0 234.4,409.0 235.9,406.2M295.3,153.7 298.4,152.8M298.4,152.8 302.1,154.2 305.3,151.9 308.4,154.1 312.1,153.4 314.7,151.2 317.6,149.3 320.3,147.2 322.8,144.9 323.9,141.6 324.1,138.1 326.5,135.4 326.5,131.7 330.2,131.6 333.4,129.7 334.4,125.9 338.0,124.2M295.9,92.3 300.5,92.5 304.9,93.3 309.4,92.4 313.6,90.7M338.0,124.2 335.3,122.1 334.8,118.8 333.6,115.8 333.8,112.6 332.0,110.0 331.4,106.9 330.1,103.9 330.6,100.7M330.6,100.7 327.5,101.6 324.7,103.1 321.3,103.7 318.4,102.1 318.2,98.8 317.8,95.6 315.2,93.6 313.6,90.7M305.8,-33.8 309.8,-27.6 310.1,-20.2 316.2,-16.3 320.7,-10.7 325.7,-5.2 326.8,2.1 325.0,9.1 326.4,16.2 326.9,23.1 327.8,29.8 323.4,36.0 325.7,43.3 327.8,50.1 327.3,57.2 327.6,64.8 322.2,70.2M313.6,90.7 312.1,87.8 313.5,84.9 314.6,82.2 316.1,79.7 317.3,77.1 319.4,75.1 322.1,73.4 322.2,70.2M305.8,-33.8 308.6,-27.1 314.2,-22.5 317.8,-16.4 321.1,-10.1 321.6,-2.5 316.9,3.5 316.8,10.7 317.2,17.8 320.9,23.3 325.0,28.6 327.7,34.6 331.7,40.0 338.2,42.6 341.8,48.8 346.1,53.9 349.4,59.7M322.2,70.2 326.7,71.6 329.2,67.5 332.0,64.9 334.8,62.5 338.3,60.4 341.5,58.0 345.7,57.7 349.4,59.7M388.0,92.6 385.0,88.5 382.6,84.0 377.6,82.5 373.7,79.2M388.0,92.6 393.1,94.2 397.8,91.5 402.5,94.2 407.6,92.6M407.6,92.6 410.0,88.6 411.1,84.1 412.6,79.8 413.8,75.4 418.3,74.4 422.9,74.8 427.4,73.5 431.7,71.9M372.2,71.1 373.5,75.0 373.7,79.2M372.2,71.1 375.3,65.7 374.9,59.5 372.9,52.6 378.5,48.1 381.7,43.0 385.3,38.2 388.5,33.1 390.5,27.4 394.7,22.9 395.9,16.8 401.0,12.3 399.7,5.6 404.4,0.3 409.6,-4.2 406.4,-10.5 405.4,-17.5M405.4,-17.5 411.9,-14.7 418.7,-12.7 423.2,-6.7 430.6,-5.3 431.5,1.7 433.8,8.4 436.6,15.3 434.7,22.4 430.8,28.3 433.0,35.0 432.6,41.7 428.5,46.9 429.2,53.4 432.4,59.1 431.5,65.4 431.7,71.9M338.0,124.2 343.3,124.0 348.7,124.1 350.1,127.0 353.1,128.2 352.1,131.1 352.6,134.2M330.6,100.7 333.8,101.9 337.2,101.7 340.2,100.3 343.4,99.5 344.8,96.4 347.6,94.6 349.4,91.8 352.3,90.2 353.9,87.4 356.1,85.1 358.0,82.3 361.2,81.2 364.5,81.0 367.7,81.4 370.5,79.7 373.7,79.2M349.4,59.7 350.1,63.4 353.2,65.4 356.7,65.9 359.8,67.4 362.9,68.5 366.3,68.4 369.0,70.2 372.2,71.1M448.0,76.2 445.5,77.5 443.1,78.9 441.8,76.4 439.7,74.4 436.0,72.3 431.7,71.9M491.5,91.6 492.9,95.8 491.6,100.1 494.2,103.6 494.7,108.0 491.8,111.5 490.8,116.0 490.9,120.4 492.4,124.6M491.5,91.6 493.9,89.2 494.2,85.9 496.8,83.8 500.2,84.1 502.3,82.1 504.2,79.9 506.2,77.6 509.2,77.0 512.7,76.6 516.3,76.1 519.8,74.9 522.0,71.9 524.0,74.9 527.1,76.6 530.3,78.4 531.6,81.9M543.6,117.3 541.1,120.3 538.2,122.8 538.1,126.7 538.6,130.5 534.9,130.7 531.2,131.4 527.6,133.0 525.8,136.5M543.6,117.3 542.7,113.6 540.1,110.9 538.1,107.5 539.1,103.8 536.9,100.6 536.8,96.7 536.6,92.7 538.9,89.5M525.8,136.5 523.0,137.1 520.8,139.0 517.9,139.0 515.2,137.9 509.9,138.1 504.5,137.6M538.9,89.5 537.2,87.4 536.3,84.7 534.4,82.5 531.6,81.9M504.5,137.6 501.9,134.0 498.6,131.0 495.9,127.4 492.4,124.6M534.1,60.8 534.6,63.7 535.1,66.6 530.9,67.1 531.5,71.2 531.9,76.5 531.6,81.9M489.2,89.1 491.5,91.6M556.9,119.7 558.7,116.7 561.7,114.8 563.4,111.7 566.6,110.2 569.9,109.1 573.1,107.6 574.6,104.3 577.7,102.3M577.2,93.7 578.0,98.0 577.7,102.3M567.4,83.9 563.6,83.5 559.9,83.4 556.1,84.2 553.1,86.6 549.6,87.8 546.4,89.8 542.6,91.7 538.9,89.5M556.9,119.7 553.8,118.1 550.3,118.0 547.0,117.0 543.6,117.3M407.6,92.6 407.3,95.9 409.7,98.3 412.8,99.0 415.3,101.0 414.6,104.3 415.4,107.6 418.4,108.9 421.2,110.7 423.0,114.1 426.8,113.9 428.1,117.0 431.0,118.8 430.1,121.9 429.6,125.1 430.8,128.2 430.3,131.5M430.3,131.5 424.9,131.9 421.3,135.9 417.9,139.7 416.5,144.7 411.6,147.1 410.4,152.5 406.6,156.2 401.2,156.1M455.4,82.8 455.6,86.8 459.1,88.9 458.1,92.3 457.3,95.7 454.6,98.2 454.1,101.8 454.9,105.1 455.2,108.5 453.6,111.4 452.3,114.4 449.7,116.6 448.5,119.7 448.0,123.4 449.8,126.8 447.0,129.1 445.0,132.2M430.3,131.5 433.9,133.2 437.5,135.0 441.2,133.5 445.0,132.2M492.4,124.6 491.2,128.0 488.4,130.3 485.9,132.8 484.7,136.1 480.8,135.7 477.4,137.7 474.3,135.5 471.1,133.7 467.4,132.0 463.4,131.0 459.4,133.5 459.5,138.2 457.7,135.1 454.8,133.1 451.2,132.4 447.9,133.9M445.0,132.2 447.9,133.9M625.6,182.9 625.1,184.1M664.6,170.4 663.1,167.2 659.8,165.9 657.1,167.9 653.8,168.6 651.3,170.0 649.5,172.1 646.5,171.8 644.1,173.7 639.0,175.4 633.5,175.7 630.3,175.3 627.7,177.3 626.3,180.0 625.6,182.9M664.6,170.4 669.7,170.1 674.2,172.7M651.5,223.8 647.1,222.2 642.8,223.8M247.1,294.0 250.4,294.6 253.5,295.9 257.0,295.5 260.2,296.9 261.5,300.3 262.9,303.5 266.6,304.2 269.2,306.9M261.8,352.1 266.6,354.3 271.8,354.3M269.2,306.9 268.0,309.8 266.9,312.7 266.4,315.8 265.1,318.7 265.9,321.8 265.9,325.1 265.2,328.3 263.3,331.0 266.2,333.0 268.5,335.7 268.2,339.2 267.6,342.6 269.1,345.4 270.8,348.0 269.8,351.4 271.8,354.3M235.9,406.2 239.1,406.9 241.8,405.2 244.0,403.2 246.7,401.9 248.8,404.7 252.3,405.2 255.1,403.5 258.3,402.7M258.3,402.7 261.6,402.0 264.0,399.6 267.3,398.8 269.9,396.8 271.3,393.6 273.2,390.7 276.2,389.0 279.5,387.9 282.7,385.5 282.7,381.6 286.7,380.1 286.9,375.9 286.1,372.5 285.3,369.0 283.6,365.8 283.4,362.2M271.8,354.3 274.9,356.3 278.3,357.2 280.9,359.7 283.4,362.2M433.6,183.6 429.8,180.7 426.5,177.2 424.0,173.1 420.9,169.5 416.0,170.7 411.3,169.1 406.4,169.6 402.0,167.1M437.8,206.9 438.7,203.7 437.1,200.6 434.7,198.5 433.1,195.7 432.7,192.7 432.5,189.6 432.8,186.6 433.6,183.6M410.9,214.6 409.5,212.0 406.9,210.5 404.1,211.2 401.6,212.5 399.0,208.4 397.2,204.0M437.8,206.9 436.5,209.7 435.7,212.7 434.0,215.6 430.5,215.9 428.2,214.1 425.9,212.2 424.2,209.8 423.2,206.9 421.1,205.0 418.8,203.3 416.8,205.4 415.2,207.8 413.6,211.6 410.9,214.6M397.2,204.0 398.5,199.2 401.7,195.5 401.8,190.7 402.2,185.9 400.1,181.3 398.2,176.6 400.0,171.8 402.0,167.1M322.3,194.2 326.0,194.4 329.5,193.3 332.8,191.7 336.5,191.1 338.5,186.8 343.1,186.4 346.8,188.2 350.9,188.9M298.4,152.8 303.1,153.6 306.7,150.6 310.7,152.1 314.2,154.7 317.6,157.3 321.9,157.6 325.8,156.3 330.0,156.9 333.6,159.1 337.7,160.3 340.0,164.0 343.8,166.1 347.9,164.5 352.1,165.3 356.5,163.7 360.5,166.0M350.9,188.9 354.4,187.7 356.6,184.7 355.2,181.2 355.9,177.6 358.4,175.4 360.1,172.6 361.5,169.4 360.5,166.0M352.6,134.2 356.5,137.3 359.5,141.4 355.8,145.0 354.2,149.9 356.4,153.3 357.6,157.2 359.6,160.8 363.1,163.0M360.5,166.0 363.1,163.0M401.2,156.1 401.4,159.5 398.4,161.3M363.1,163.0 366.4,163.6 369.7,163.1 372.9,162.2 376.1,161.7 378.3,164.4 380.8,166.8 381.1,170.3 381.3,173.7 385.8,170.8 389.3,166.8 393.7,163.7 398.4,161.3M456.3,166.6 451.9,166.7 447.9,164.6 445.1,168.1 440.9,169.6 439.4,173.8 435.4,175.6 434.0,179.5 433.6,183.6M456.3,166.6 454.4,163.7 452.7,160.7 452.0,157.1 453.9,153.9 458.6,153.1 458.0,148.4 461.4,147.8 464.7,146.9 464.5,143.7 461.5,142.3 458.7,140.7 458.5,137.6 455.8,136.4 453.6,134.4 450.7,134.9 447.9,133.9M402.0,167.1 402.0,163.1 398.4,161.3M322.3,233.8 324.5,236.2 327.4,237.9 328.9,240.8 329.7,244.1 333.5,242.4 336.7,239.7 340.6,241.9 342.2,246.0M350.9,188.9 354.5,190.7 356.7,194.1 356.6,198.2 358.9,201.7 363.3,203.1 365.4,207.2 364.0,211.4 364.3,215.7M342.2,246.0 343.3,241.2 344.1,236.4 348.8,233.8 350.2,228.7 351.6,223.5 353.9,218.6 356.8,217.9 358.7,215.6 361.5,214.8 364.3,215.7M397.2,204.0 395.8,208.4 392.6,211.7 388.2,213.3 383.7,212.4 379.1,211.9 374.9,210.3 372.0,213.9 368.2,216.4M364.3,215.7 368.2,216.4M1079.1,973.5 1081.5,971.0 1085.0,970.4M1079.1,973.5 1076.2,969.8 1072.5,967.0 1068.4,969.7 1063.5,969.5M1063.5,969.5 1062.5,966.6 1060.7,964.1M1060.7,964.1 1063.6,961.2 1066.0,957.9 1064.0,954.0 1065.0,949.8M1087.8,953.7 1087.3,950.5 1085.6,947.8 1082.4,946.9 1080.1,944.7M1065.0,949.8 1067.7,946.2 1072.2,946.3 1076.2,946.1 1080.1,944.7M1038.3,863.3 1036.9,867.1 1040.0,869.7 1041.5,872.9 1044.8,874.2 1043.5,877.3 1041.7,880.1 1041.1,883.6 1042.8,886.7M1038.3,863.3 1034.5,861.2 1030.2,862.0 1026.0,861.1 1022.0,863.0M1026.7,900.5 1030.7,897.0 1035.2,894.1 1037.4,892.4 1040.2,891.6 1041.8,889.3 1042.8,886.7M1011.3,891.2 1010.9,885.9 1015.1,882.8 1016.0,877.8 1013.0,873.8M1011.3,891.2 1015.2,893.5 1019.5,894.9 1021.4,899.9 1026.7,900.5M1022.0,863.0 1019.7,866.3 1019.9,870.4 1017.8,875.0 1013.0,873.8M989.7,865.2 992.9,865.3 995.7,867.0 998.3,868.8 1000.9,870.6 1003.8,872.4 1007.1,871.7 1010.1,872.5 1013.0,873.8M1022.0,863.0 1020.7,858.1 1019.3,853.3 1017.1,848.8 1013.8,844.9M989.7,865.2 990.0,862.3 990.9,859.5 991.8,856.7 993.3,854.2 995.1,851.4 995.6,848.2 992.2,846.5 992.2,842.7M1013.8,844.9 1009.7,847.3 1005.3,845.3 1004.1,849.4 1002.0,853.2 1000.9,849.2 997.1,848.0 993.2,846.6 992.2,842.7M985.2,773.5 981.3,775.1 978.1,777.9 973.9,777.2 969.7,777.4 966.5,780.3 962.2,780.2 958.7,782.6 954.5,782.4M986.4,805.1 986.2,802.2 986.9,799.4 986.9,796.6 986.9,793.8 989.3,792.0 991.3,789.6 990.9,786.5 991.8,783.6M986.4,805.1 983.0,806.4 979.5,807.2 975.9,808.1 972.3,807.7M954.5,782.4 957.6,786.7 960.7,791.0 960.9,796.3 961.7,801.6M972.3,807.7 969.4,806.6 966.4,805.7 964.9,802.7 961.7,801.6M903.0,556.8 896.9,557.6 890.7,557.5 884.6,557.8 878.5,558.3 873.3,562.0 871.1,568.0 867.2,572.8 864.1,578.0 859.6,581.7 856.9,586.8 853.4,591.3 848.6,594.5 842.4,593.4 837.7,597.6 832.2,599.5 827.9,603.4M903.0,556.8 903.8,564.7 904.2,572.6 895.7,570.8 888.7,575.8 882.5,574.7 876.4,576.5 871.5,580.2 865.9,583.0 866.0,589.2 864.7,595.3 858.6,597.6 854.8,602.8 851.2,607.6 850.6,613.5 848.6,618.8 847.6,624.4M847.6,624.4 844.2,625.3 840.8,624.9 837.4,626.2 834.0,624.5 832.9,621.2 831.0,618.2 828.7,615.1 824.9,614.5M827.9,603.4 828.6,606.4 828.3,609.5 826.5,611.9 824.9,614.5M964.8,502.4 960.0,505.9 958.6,511.7 954.4,516.6 948.0,515.1 942.9,516.5 937.7,517.9 933.6,521.4 929.1,524.1 923.4,526.0 918.5,529.3 913.3,531.9 907.7,533.8 906.2,539.5 905.4,545.3 905.2,551.2 903.0,556.8M964.8,502.4 955.6,509.0 945.4,514.0 934.2,517.3 922.8,515.0 911.3,518.1 899.5,516.6 891.6,525.3 882.9,533.1 873.7,542.3 868.7,554.3 855.8,557.9 843.3,552.7 840.8,564.7 830.6,571.5 820.9,577.4 810.9,582.8M810.9,582.8 810.6,587.3 807.9,591.1 811.6,593.7 814.3,597.2 818.3,598.3 820.4,601.9 824.0,603.0 827.9,603.4M128.3,892.1 128.9,887.7 131.3,884.0 134.2,880.6 138.5,879.3 142.1,876.4 146.6,876.7 148.9,873.0 151.9,870.0M151.9,870.0 156.0,871.1 158.7,874.3 162.1,876.6 166.0,877.9M141.6,904.8 145.4,901.2 150.4,902.1 155.0,901.9 159.6,901.6M166.0,877.9 163.6,880.3 162.6,883.5 164.1,886.6 163.6,890.0 161.9,892.6 160.0,895.2 160.9,898.4 159.6,901.6M169.1,927.0 170.2,923.1 169.4,919.0 172.1,916.1 175.2,913.5M175.2,913.5 171.0,910.1 165.7,909.8 164.7,907.2 164.5,904.4 161.5,903.9 159.6,901.6M185.2,948.9 188.0,946.8 191.4,946.2M213.4,965.5 213.1,961.9 213.9,958.3 213.3,954.8 212.6,951.3M212.6,951.3 210.3,949.5 207.5,948.8 204.7,948.1 202.6,946.0 199.7,945.2 197.0,943.8 194.5,945.7 191.4,946.2M275.8,962.9 272.8,961.2 270.7,958.6 267.0,957.9 265.4,954.5 265.7,950.3 261.9,948.2 263.1,944.8 263.9,941.3M259.8,976.2 263.5,972.5 267.9,969.7 269.4,966.9 269.6,963.7 272.7,963.0 275.8,962.9M245.1,965.8 244.3,961.9 246.7,958.7 242.3,956.7 243.6,952.1M263.9,941.3 260.8,941.5 258.7,943.8 255.8,944.4 253.2,945.6 250.9,947.5 249.0,949.8 246.6,951.6 243.6,952.1M212.6,951.3 215.0,949.2 217.8,947.8 220.4,945.8 221.5,942.8M221.5,942.8 226.2,940.5 231.4,941.3M231.4,941.3 235.0,943.3 237.8,946.3 239.2,950.6 243.6,952.1M302.1,1192.5 295.6,1178.4 287.8,1165.0 285.3,1147.5 269.0,1140.5 263.7,1125.7 259.7,1110.5 245.8,1093.8 262.0,1079.2 281.0,1092.4 300.0,1079.2 307.9,1061.8 312.9,1043.4 302.6,1022.7 324.3,1014.4 336.7,1003.3 338.6,986.7M385.0,1011.0 385.6,1006.7 387.7,1002.9 384.5,1000.1 380.9,997.7 382.2,993.8 382.9,989.8 379.0,988.0 376.8,984.4M376.8,984.4 373.4,983.0 369.9,984.1 368.3,980.8 364.8,979.4 364.5,975.6 362.7,972.2 359.2,970.5 355.4,970.4M355.4,970.4 352.4,971.5 350.0,973.4 348.8,976.3 347.4,979.0 345.1,981.0 343.9,983.9 341.1,985.0 338.6,986.7M338.2,491.8 338.8,488.8 337.5,486.1 339.0,483.4 338.2,480.4M296.2,523.3 301.0,523.5 303.2,519.2 306.1,516.3 308.2,512.8 309.8,508.3 306.6,504.8 306.4,500.5 308.3,496.8 307.1,492.7 308.8,488.8 304.6,487.3 303.5,482.9 300.5,480.4 297.5,477.9 296.0,474.2 296.2,470.2M296.2,470.2 301.4,470.7 306.2,468.5 311.3,467.9 315.8,465.4 319.4,469.1 324.2,471.2 329.2,472.3 333.7,474.9M333.7,474.9 336.4,477.3 338.2,480.4M308.9,424.4 312.7,424.2 316.4,423.6 320.2,423.5 324.0,424.4M308.9,424.4 306.9,426.6 306.7,429.7 305.5,432.4 303.4,434.5 303.0,437.3 302.5,440.2 303.8,443.1 302.3,445.9 300.6,448.5 298.5,450.8 297.2,453.8 297.7,457.0 294.5,457.2 292.3,459.5 290.0,461.6 287.1,462.6M296.2,470.2 294.8,467.6 292.8,465.5 289.8,465.5 287.2,464.1M287.1,462.6 287.2,464.1M303.1,418.8 299.1,416.9 294.6,416.9 290.2,416.8 286.1,418.4 282.2,416.6 277.9,415.7 273.7,414.5 269.3,415.4M269.3,415.4 269.0,418.8 268.1,422.1 264.6,424.5 266.1,428.5 268.4,431.3 267.7,435.0 269.4,438.0 269.3,441.5M308.9,424.4 306.0,421.5 303.1,418.8M287.1,462.6 283.3,461.9 281.1,458.8 278.1,456.8 275.8,454.1 272.4,451.6 268.7,449.7 269.1,445.6 269.3,441.5M226.3,426.6 227.5,429.4 228.6,432.3 231.1,434.1 233.5,436.0 234.4,439.0 236.7,441.0 239.3,442.6 241.1,445.0M258.3,402.7 260.1,406.9 264.2,408.8 265.7,412.9 269.3,415.4M629.5,55.6 629.1,59.4 627.3,62.9 625.9,66.7 627.2,70.6 625.1,73.8 622.8,76.8 619.2,79.2 619.0,83.4M676.5,94.5 674.1,92.5 671.1,92.5 668.2,93.3 666.2,95.6 662.1,98.8 657.3,101.0 652.5,99.0 647.3,99.6 642.3,98.9 637.3,98.1M637.3,98.1 635.1,96.1 632.6,94.5 630.5,92.5 628.2,90.7 625.2,89.8 623.7,87.0 622.0,84.3 619.0,83.4M598.0,84.1 601.4,88.0 606.1,89.8M619.0,83.4 615.6,84.6 612.1,85.6 609.2,88.0 606.1,89.8M543.3,158.8 541.9,155.5 540.1,152.4 539.1,148.8 536.6,146.1 534.0,143.4 530.5,142.1 528.6,139.0 525.8,136.5M553.9,161.6 555.8,159.2 558.9,158.3 561.9,159.6 564.9,158.2M556.9,119.7 561.9,121.7 566.6,124.2 569.7,128.6 571.7,133.6M571.7,133.6 572.0,136.9 571.2,140.1 570.6,143.4 570.9,146.6 569.2,149.4 568.1,152.6 566.7,155.5 564.9,158.2M582.9,188.7 583.6,185.7 581.7,183.2 581.8,180.3 583.7,178.0 583.6,172.6 583.8,167.3M564.9,158.2 570.3,158.4 575.4,160.6 579.6,164.0 583.8,167.3M485.5,260.1 488.6,261.1 492.0,261.1 494.1,258.6 496.6,256.5 499.7,255.9 501.7,253.5 504.0,251.7 506.5,250.1M506.5,250.1 507.4,246.4 509.1,243.0 511.3,239.6 511.1,235.6 510.0,231.9 509.9,228.1 510.2,223.6 506.5,221.2M465.9,240.5 467.3,243.7 469.3,246.7 472.0,249.1 473.8,252.1 477.9,251.6 481.6,253.2 482.6,257.2 485.5,260.1M465.9,240.5 470.4,238.5 475.3,239.8 480.4,239.2 483.5,235.1 480.2,230.7 480.8,225.3 485.1,222.1 486.7,217.0M486.7,217.0 492.0,216.2 497.2,216.1 499.0,218.4 500.6,220.9 503.6,220.8 506.5,221.2M541.3,227.7 536.9,229.1 532.3,228.9 527.8,230.4 523.3,228.7 518.1,230.1 512.7,229.8 509.2,225.8 507.0,220.9M524.3,188.4 519.8,189.0M507.0,220.9 508.1,216.4 507.8,211.8 511.9,209.4 513.9,205.1 516.8,201.4 520.5,198.4 519.3,193.8 519.8,189.0M604.4,220.5 608.4,224.1 610.8,228.8 616.1,229.9 620.3,233.2M609.8,195.0 614.5,192.4 619.9,193.0 619.1,190.1 620.4,187.3 622.8,185.9 625.1,184.1M642.8,223.8 638.3,224.9 635.8,228.7 632.0,230.6 628.6,233.2M620.3,233.2 624.5,234.1 628.6,233.2M303.1,418.8 304.5,415.9 303.5,412.8 303.2,409.8 302.4,406.8 300.4,404.2 301.0,401.0 300.0,398.2 299.7,395.2 299.5,391.8 297.1,389.5 298.5,386.5 297.5,383.3 296.4,380.2 294.9,377.2 297.3,374.6 298.1,371.3M283.4,362.2 284.9,362.2M298.1,371.3 293.1,372.0 291.1,367.4 288.2,364.6 284.9,362.2M410.9,214.6 410.2,219.9 409.3,225.2 409.1,230.5 407.7,235.7M368.2,216.4 370.9,214.7 374.0,214.4 377.0,212.9 380.1,214.1 383.6,213.7 386.0,216.4 388.2,218.7 389.6,221.6 390.5,224.4 392.4,226.7 393.5,229.4 395.2,231.8 398.1,234.3 398.0,238.2 395.7,240.8 393.3,243.3M407.7,235.7 405.5,240.5 400.3,239.2 396.6,240.9 393.3,243.3M442.9,247.5 444.5,242.4 449.5,240.5M442.9,247.5 439.0,248.8 434.9,249.3M437.8,206.9 440.6,209.3M440.6,209.3 444.4,212.1 444.4,216.9 447.3,220.1 450.0,223.4 446.5,226.9 446.0,231.8 448.1,236.0 449.5,240.5M407.7,235.7 410.6,238.3 413.9,240.1 417.3,242.0 420.6,243.9 423.9,245.9 427.8,246.4 430.9,249.0 434.9,249.3M622.5,310.6 618.5,313.6 615.6,317.6 618.4,321.7 619.5,326.6 620.0,330.8 619.0,334.9 619.7,339.2 622.5,342.5M622.5,342.5 619.7,344.2 616.5,344.2M597.1,336.4 599.8,335.3 602.6,335.8 604.9,337.5 607.8,337.8 611.9,341.2 616.5,344.2M597.1,336.4 597.4,332.9 597.1,329.3 597.0,325.8 596.3,322.4 595.2,318.9 594.0,315.4 596.0,312.2 595.6,308.3M622.5,310.6 619.1,307.8 615.1,305.8 612.6,301.5 607.6,301.2M607.6,301.2 604.0,301.9 600.7,303.3 597.5,305.2 595.6,308.3M1184.9,665.1 1173.0,672.6 1164.9,684.1 1155.9,695.6 1156.5,710.3 1147.6,722.0 1149.8,736.5 1139.0,745.6 1134.9,759.1 1135.6,772.6 1133.5,785.9 1136.6,799.8 1130.2,812.5 1129.1,826.4 1129.0,840.2 1118.5,850.0 1114.1,863.6M1114.1,863.6 1109.8,865.7 1105.8,868.3 1102.5,864.7 1098.4,862.2M1182.0,668.8 1177.8,682.3 1174.3,696.0 1165.9,707.5 1155.8,717.4 1172.7,727.1 1188.9,737.7 1191.7,761.9 1169.1,771.0 1167.8,786.4 1160.6,800.0 1146.6,807.2 1131.0,805.7 1122.5,815.9 1110.4,821.3 1098.3,827.7 1092.8,840.2M1092.8,840.2 1093.3,843.0 1093.5,845.9 1094.0,848.7 1095.2,851.3 1095.9,854.1 1097.4,856.6 1097.1,859.5 1098.4,862.2M1182.0,668.8 1176.4,676.6 1170.2,684.0 1163.1,690.8 1160.0,700.2 1150.3,701.8 1140.9,704.6 1132.7,710.2 1125.3,716.6 1124.2,726.2 1120.9,735.4 1118.3,744.9 1111.5,752.2 1106.8,760.9 1099.2,767.2 1090.5,771.4 1082.7,777.3M1092.8,840.2 1089.5,839.9 1086.2,839.1 1084.3,841.8 1082.7,844.7 1079.8,844.8 1077.4,846.3 1074.4,846.4 1072.3,848.4M1072.3,848.4 1068.2,846.3 1064.9,843.0 1061.2,840.4 1057.6,837.6M1057.6,837.6 1060.8,833.8 1062.5,829.1 1065.0,824.1 1062.3,819.3 1066.4,816.6 1071.3,816.1 1075.5,814.0 1079.4,811.3 1082.3,806.5 1078.2,802.7 1073.6,798.1 1078.6,794.0 1083.6,791.5 1082.4,786.1 1083.0,781.7 1082.7,777.3M1190.4,870.8 1186.1,868.1 1181.3,869.8 1177.2,871.7 1172.9,873.2 1168.8,871.1 1164.2,871.6 1159.7,871.8 1155.3,872.5 1151.7,868.6 1146.4,868.3 1141.6,866.6 1138.0,863.1 1133.4,865.5 1128.3,865.8 1125.4,870.3 1120.2,871.8M1120.2,871.8 1117.4,876.0 1116.9,881.0 1115.5,885.7 1112.9,889.8M1172.1,884.6 1166.7,883.9 1162.2,886.8 1157.3,885.2 1152.6,883.2 1154.7,876.5 1149.9,871.3 1143.9,869.6 1137.7,870.6 1134.3,874.1 1131.9,878.3 1128.1,882.7 1130.7,887.9 1128.6,892.9 1129.3,898.3 1125.7,902.9 1119.9,903.2M1112.9,889.8 1116.1,892.4 1116.4,896.5 1119.4,899.2 1119.9,903.2M1126.8,920.9 1125.8,916.8 1122.1,914.7 1120.1,911.3 1118.7,907.7M1119.9,903.2 1118.7,907.7M1065.0,949.8 1060.2,948.0 1055.3,946.8 1054.5,941.8 1052.1,937.2M1052.1,937.2 1054.7,934.8 1058.2,934.7 1061.5,933.7 1063.9,931.3 1062.7,928.0 1062.0,924.5 1064.4,921.7 1064.8,918.1M1080.1,944.7 1079.9,941.7 1078.7,939.0 1081.1,937.2 1082.0,934.3M1064.8,918.1 1065.4,921.6 1067.5,924.3 1068.2,927.7 1069.0,931.0 1072.1,932.6 1075.6,932.4 1079.0,932.8 1082.0,934.3M1045.9,938.2 1049.3,939.4 1052.1,937.2M1029.0,920.2 1031.1,916.5 1031.4,912.3M1045.9,938.2 1043.4,936.1 1040.9,934.0 1037.8,933.1 1035.0,931.5 1031.9,929.4 1032.2,925.7 1030.2,923.2 1029.0,920.2M1031.4,912.3 1034.6,908.9 1038.0,905.7 1040.9,906.7 1042.5,909.3 1044.1,906.6 1047.3,906.3 1051.8,906.3 1055.5,908.8 1059.5,911.3 1064.0,909.9M1064.8,918.1 1063.2,914.1 1064.0,909.9M1115.1,946.8 1110.8,948.6 1107.5,945.3 1104.4,943.0 1101.4,940.6 1101.2,936.7 1099.3,933.4 1097.4,930.0 1097.3,926.1M1082.0,934.3 1086.7,934.2 1091.0,932.6 1094.3,929.6 1097.3,926.1M1118.7,907.7 1115.8,908.1 1112.9,907.3 1110.2,908.3 1107.3,908.7 1105.7,911.4 1102.7,912.3 1101.3,914.8 1099.4,917.1M1097.3,926.1 1097.8,921.4 1099.4,917.1M1017.4,799.3 1014.5,801.0 1011.6,799.3 1008.8,800.7 1007.9,803.8 1005.5,805.7 1002.6,806.9 1002.2,810.1 1003.1,813.1M1017.4,799.3 1022.0,801.9 1027.2,802.7 1032.4,803.0 1037.4,804.4M1003.1,813.1 1006.1,814.5 1008.3,816.9 1011.9,817.1 1013.8,820.2 1017.5,820.7 1019.9,823.5 1020.5,827.0 1021.6,830.3M1037.4,804.4 1036.4,807.3 1036.3,810.3 1035.2,813.1 1034.1,815.9 1032.3,818.4 1030.5,820.9 1029.5,823.9 1030.1,827.1M1021.6,830.3 1025.0,826.2 1030.1,827.1M986.4,805.1 989.2,806.9 991.4,809.4 993.9,811.6 996.7,813.3M1011.9,783.6 1015.1,786.7 1015.5,791.2 1016.6,795.2 1017.4,799.3M996.7,813.3 999.9,811.7 1003.1,813.1M1082.7,777.3 1078.6,777.0 1075.2,779.2 1073.4,782.6 1071.1,785.7 1072.4,789.8 1070.0,793.2 1068.9,797.4 1064.6,798.5 1061.4,801.0 1057.3,801.1 1053.8,803.2 1052.2,806.9 1048.7,810.1 1044.4,808.3 1040.6,806.8 1037.4,804.4M1273.9,534.3 1257.6,543.6 1244.5,557.0 1228.9,567.2 1211.6,574.2 1191.0,582.9 1171.8,571.5 1157.9,585.9 1141.1,596.9 1133.9,614.1 1128.3,632.0 1116.0,646.1 1103.5,660.0 1096.2,677.1 1084.4,691.4 1070.1,703.5 1060.8,719.7M996.7,813.3 994.2,815.9 992.2,819.0 991.8,822.6 990.9,826.2 991.1,829.7 990.4,833.2 990.0,836.7 989.7,840.2M1013.8,844.9 1014.6,840.7 1017.3,837.4 1019.8,834.1 1021.6,830.3M989.7,840.2 992.2,842.7M1050.3,840.5 1046.8,839.4 1043.1,839.3 1041.4,836.1 1041.1,832.4 1037.8,832.3 1035.5,829.9 1032.7,828.7 1030.1,827.1M1050.3,840.5 1054.1,839.5 1057.6,837.6M1038.3,863.3 1040.9,861.8M1040.9,861.8 1042.3,859.1 1042.2,856.0 1043.9,853.6 1045.4,851.0 1046.0,847.8 1048.9,846.2 1047.9,843.0 1050.3,840.5M945.1,738.6 947.0,740.8 949.8,741.7 951.5,744.5 954.7,744.5 955.0,747.5 957.1,749.7 958.7,752.0 959.9,754.6M945.1,738.6 949.6,736.7 954.1,734.6 956.1,729.8 960.3,726.8 962.9,725.7 965.8,726.0 967.6,723.9 968.6,721.2 973.6,720.6 978.6,720.6M959.9,754.6 963.3,752.9 967.2,752.6 970.8,751.2 974.7,751.6M978.6,720.6 980.1,724.5 980.6,728.7 982.1,732.7 982.8,736.8 978.4,738.9 977.9,743.7 976.0,747.5 974.7,751.6M954.5,782.4 950.5,779.6M986.8,762.9 982.0,761.9 977.2,761.1 977.3,756.0 974.7,751.6M950.5,779.6 950.6,776.0 951.2,772.5 950.8,768.9 950.5,765.3 954.3,764.4 956.5,761.1 958.2,757.9 959.9,754.6M898.7,639.1 895.6,637.3 892.1,638.1 889.4,636.0 886.1,634.9 883.4,633.0 880.9,630.7 877.8,629.3 874.5,628.6 875.0,633.6 870.1,634.4 867.5,637.1 864.3,639.0 860.5,640.0 857.1,638.1 853.4,639.0 849.8,637.8M898.7,639.1 897.3,641.7 895.1,643.8 892.2,644.7 889.3,645.5 887.0,647.6 885.7,650.4 886.9,653.4 886.0,656.5 883.9,659.3 880.5,658.2 877.7,659.2 874.8,659.3 873.0,661.6 872.0,664.4 870.7,667.0 868.6,669.1M849.8,637.8 847.0,642.1M847.0,642.1 848.6,645.5 851.2,648.3 852.8,651.7 855.0,654.7 855.8,658.4 856.7,662.0 859.3,665.1 858.9,669.2M868.6,669.1 863.7,668.9 858.9,669.2M849.1,676.1 852.3,673.8 855.9,675.3 857.7,672.4 858.9,669.2M849.1,676.1 846.5,674.5 843.5,674.8 840.7,675.2 837.9,675.6 836.7,673.0 834.5,671.1 831.8,669.8 830.5,667.2M847.0,642.1 843.9,643.5 841.0,641.8 838.6,643.5 836.2,645.3 833.1,645.4 830.0,644.5 829.2,648.1 825.7,649.0M825.7,649.0 828.0,653.3 827.7,658.2 829.9,662.4 830.5,667.2M712.6,765.2 708.3,764.8 704.1,763.6 699.9,764.4 695.6,764.8 692.1,762.2 687.9,761.2 684.6,758.4 681.0,756.1M720.1,737.3 721.1,741.3 723.1,744.8 725.0,749.1 722.4,752.9 717.3,753.6 712.5,755.1 714.4,760.1 712.6,765.2M720.1,737.3 716.2,734.9 711.9,733.5 710.3,729.3 708.8,725.0 704.8,723.3 700.5,723.5 696.6,721.5 692.3,722.0M692.3,722.0 688.8,724.8 684.7,726.5M684.7,726.5 685.9,730.5 683.2,733.8 683.7,737.6 682.1,741.2 681.2,744.9 681.7,748.7 681.7,752.4 681.0,756.1M661.9,682.8 665.0,680.3 668.8,681.3 672.4,680.5 675.9,681.4 679.4,682.8 682.2,685.3 685.9,684.6 689.6,684.7M654.4,686.7 659.2,686.8 661.9,682.8M684.7,726.5 681.5,727.4 678.6,729.0 675.5,730.5 672.2,730.9 669.6,728.9 667.1,726.7 664.6,724.5 661.6,722.9M654.4,686.7 657.5,690.6 660.1,694.8 661.3,700.0 665.3,703.3 663.5,708.0 662.1,712.9 663.8,718.0 661.6,722.9M692.3,722.0 693.8,718.3 695.1,714.6 695.2,710.3 692.5,707.1 695.1,703.9 698.1,701.2 696.7,697.2 697.5,693.0M689.6,684.7 691.1,687.3 692.3,690.1 694.3,692.6 697.5,693.0M733.5,715.5 737.4,711.7 742.5,709.9 747.2,707.6 752.0,705.4M733.5,715.5 734.8,711.4 732.9,707.5 729.1,705.8 726.4,702.6 724.3,699.2 723.6,695.3 720.4,693.2 717.2,690.9M723.3,685.3 721.2,689.1 717.2,690.9M723.3,685.3 727.0,685.4 729.6,682.8 733.0,683.4 736.4,683.2 739.8,682.8 743.1,683.5 746.1,685.1 749.5,685.0M749.5,685.0 749.6,690.4 752.5,695.0 751.5,700.1 752.0,705.4M697.5,693.0 702.5,694.7 707.8,695.5 712.5,693.2 717.2,690.9M720.1,737.3 724.6,734.6 729.6,733.2M729.6,733.2 730.1,728.6 732.1,724.5 731.2,719.8 733.5,715.5M710.5,647.0 714.7,648.8 718.8,650.7 722.5,653.5 725.9,656.6M725.9,656.6 722.2,659.5 717.9,661.6 720.6,665.7 720.8,670.6 721.1,674.3 721.5,678.0 721.9,681.8 723.3,685.3M696.4,653.4 696.0,657.4 694.8,661.2 694.0,665.2 693.9,669.2 692.3,673.8 695.0,677.8 692.4,681.3 689.6,684.7M696.4,653.4 699.9,651.7 703.8,650.9 707.1,648.9 710.5,647.0M759.6,673.9 758.0,677.6 754.4,679.3 752.2,682.4 749.5,685.0M759.6,673.9 758.0,670.2 754.4,668.4 751.9,665.3 751.1,661.5 747.4,659.6 743.3,660.0 741.7,656.0 737.9,654.1M737.9,654.1 734.8,652.8 731.5,653.5 729.1,655.7 725.9,656.6M315.4,962.4 311.8,966.4 308.4,970.5 305.8,972.3 302.8,971.4 301.0,973.5 298.9,975.5M315.4,962.4 313.0,960.2 310.8,957.8 310.5,954.3 307.5,952.3 308.9,949.1 310.5,946.0 310.9,942.2 308.3,939.5M308.3,939.5 305.0,938.8 301.7,939.0 299.1,936.7 295.7,936.2M295.7,936.2 294.8,939.8 294.5,943.4 294.0,947.3 291.0,949.8 288.8,952.7 286.6,955.6 286.8,959.5 284.6,962.6M298.9,975.5 295.3,972.3 291.6,969.2 288.7,965.2 284.6,962.6M302.1,1192.5 300.3,1176.9 292.5,1163.3 303.1,1152.0 310.2,1138.1 311.9,1124.0 308.3,1110.2 308.3,1095.3 317.5,1083.7 311.5,1070.3 307.9,1056.1 318.2,1044.0 316.5,1028.2 305.4,1017.6 306.4,1002.3 296.4,990.6 298.9,975.5M338.6,986.7 336.2,982.7 331.7,983.8 330.0,980.4 329.3,976.7 326.3,974.4 324.1,971.4 324.7,967.7 324.4,964.0M324.4,964.0 319.9,963.4 315.4,962.4M263.9,941.2 263.9,941.3M288.6,927.6 290.2,930.2 290.4,933.3 292.6,935.6 295.7,936.2M263.9,941.2 264.8,937.2 267.9,934.6 271.3,932.4 275.4,932.8 278.8,931.9 282.1,930.6 285.4,929.2 288.6,927.6M275.8,962.9 280.2,961.8 284.6,962.6M385.0,1011.0 386.4,1008.3 388.1,1005.7 390.6,1003.9 393.1,1002.1 393.7,999.0 394.5,996.0 394.2,992.8 392.5,990.1 392.6,986.7 391.8,983.4 392.5,980.1 393.5,976.9 397.0,976.6 400.5,976.9 403.0,974.4 405.8,972.2M420.4,979.4 416.4,978.3 412.2,977.6 407.5,976.7 405.8,972.2M592.4,943.5 591.0,946.5 590.1,949.8 590.3,953.3 588.1,956.1 586.4,959.1 586.1,962.6 586.6,966.0 585.4,969.3M592.4,943.5 594.0,942.9M594.0,942.9 597.8,943.8 601.3,942.3 604.3,944.9 608.3,944.2 610.1,947.4 612.6,950.1 613.7,953.6 614.3,957.2M597.9,976.7 595.6,973.7 592.2,972.1 588.8,970.7 585.4,969.3M597.9,976.7 600.7,974.2 604.3,973.3 608.2,973.3 611.0,970.6M611.0,970.6 613.4,967.8 613.6,964.1 612.3,960.5 614.3,957.2M554.1,1553.0 567.6,1516.3 563.6,1477.4 581.3,1442.4 580.8,1403.2 621.0,1386.0 642.0,1347.6 657.0,1306.6 644.2,1264.9 604.1,1239.0 568.8,1207.0 570.4,1156.3 605.1,1119.1 590.4,1079.6 607.9,1041.2 571.0,1016.3 572.6,971.7M572.6,971.7 576.0,969.9 578.3,966.8 582.3,966.6 585.4,969.3M624.5,979.4 622.1,976.0 618.9,973.3 615.6,970.1 611.0,970.6M614.3,957.2 617.1,954.5 620.8,953.2M602.6,931.0 604.8,928.6 606.9,926.0 610.2,924.6 613.5,926.3 615.8,929.0 616.7,932.4 620.2,931.6 623.6,932.3M602.6,931.0 601.8,934.9 598.5,937.0 596.0,939.8 594.0,942.9M623.6,932.3 622.2,937.5 620.1,942.5 617.6,944.7 618.3,948.0 619.0,950.9 620.8,953.2M643.9,967.8 641.6,969.7 638.7,970.7 636.6,972.8 635.3,975.5 632.6,976.3 630.0,977.6 627.6,979.5 624.5,979.4M643.9,967.8 643.4,962.9 640.0,959.4M640.0,959.4 634.9,958.9 629.8,958.0 626.9,959.6 624.3,957.6 623.4,954.8 620.8,953.2M175.2,913.5 178.4,913.5 181.2,911.8M191.4,946.2 192.0,943.2 194.4,941.4 196.9,939.7 197.9,936.9 198.5,934.1 197.9,931.2 196.7,928.6 196.6,925.7M181.2,911.8 184.3,916.2 186.7,921.2 189.6,920.9 192.4,921.8 194.0,924.3 196.6,925.7M221.5,942.8 220.7,940.0 219.3,937.4 217.7,934.9 216.6,932.2 214.5,930.0 212.0,928.4 210.3,926.0 209.5,923.1M196.6,925.7 200.0,927.1 203.3,925.6 206.8,925.3 209.5,923.1M115.4,515.2 116.7,520.2 115.6,525.3 120.4,527.0 125.3,528.2 125.0,532.8 127.9,536.3 127.3,540.5 126.5,544.6M36.8,579.5 40.5,578.3 43.6,575.9 47.0,573.7 48.6,570.0 51.1,567.1 54.3,565.0 57.3,562.7 59.7,559.7 62.6,562.7 65.9,565.3 70.0,567.1 71.9,571.2 75.8,569.5 80.1,569.1 84.3,569.1 88.5,569.1M126.5,544.6 124.3,547.2 121.3,548.5 120.1,551.6 120.2,554.9 118.8,557.8 117.2,560.4 114.7,562.4 112.0,563.8 108.8,563.1 105.8,561.8 102.6,562.2 99.5,563.2 96.6,564.5 93.9,565.9 90.5,566.3 88.5,569.1M392.8,497.8 393.1,493.4 390.3,490.0 386.8,488.1 383.2,486.1 379.3,483.7 376.0,480.5 375.7,475.5 378.8,471.7M392.8,497.8 393.4,494.5 395.7,492.0 397.0,489.0 396.6,485.7 399.8,486.0 402.9,485.1 405.9,484.0 409.0,483.5 411.9,481.9 415.1,483.0 416.6,485.7 419.1,487.6 422.1,488.0 424.7,486.7 426.7,489.1 429.8,489.2M410.3,454.0 406.7,454.6 404.0,457.1 400.6,455.6 396.9,456.5 393.6,458.0 390.1,457.2 387.6,460.1 383.8,460.1M383.8,460.1 382.4,463.0 382.0,466.2 379.5,468.5 378.8,471.7M363.5,536.0 367.1,537.0 370.9,537.6 374.6,536.9 378.4,536.2M378.4,536.2 380.6,534.2 382.4,531.7 380.9,529.1 380.5,526.0 382.9,524.4 385.4,522.9 385.9,520.0 385.9,517.1 389.5,516.8 392.8,515.5 396.1,513.8 397.8,510.4 397.4,506.9 397.1,503.4 395.4,500.2 392.8,497.8M363.5,536.0 361.4,533.2 358.4,531.6 356.7,528.6 353.9,526.6 351.8,524.0 349.2,521.9 346.3,520.1 343.8,517.9 343.8,514.5 342.6,511.3 341.4,508.1 342.0,504.6 341.4,501.2 341.6,497.8 340.6,494.4 338.2,491.8M465.9,240.5 462.1,238.1 457.7,238.4 453.4,238.7 449.5,240.5M442.9,247.5 440.6,251.8 442.0,256.5 442.1,261.2 444.8,265.1 445.1,269.7 446.2,274.2 450.5,276.5 452.4,280.9M485.5,260.1 484.1,262.9 481.1,263.7 480.0,266.4 479.7,269.3 482.2,271.9 480.1,274.9 481.0,277.8 483.4,279.5M452.4,280.9 455.3,277.3 459.9,277.7 463.5,280.5 467.9,279.6 471.9,279.2 475.7,280.6 479.5,280.0 483.4,279.5M324.0,424.4 327.6,423.9 328.9,420.3 330.4,417.5 332.6,415.2 334.5,412.7 336.7,410.4 339.6,409.1 341.8,406.7 343.3,403.9 344.4,400.8 346.2,397.7 344.7,394.5 344.5,391.1 344.3,387.8 347.0,385.6 348.4,382.5M376.9,418.4 375.3,415.8 374.0,413.2 371.1,412.2 368.8,410.2 367.5,407.5 365.6,405.2 363.4,403.1 360.5,402.1 357.6,401.0 355.1,399.1 353.4,396.6 352.0,393.8 349.4,391.8 349.0,388.5 349.9,385.4 348.4,382.5M298.1,371.3 301.2,372.4 303.8,374.5 307.6,374.2 309.7,377.4 312.9,378.0 316.2,377.5 319.5,377.4 322.8,377.7 325.9,376.6 329.2,376.5 332.5,375.9 335.7,376.0 339.1,376.2 342.0,377.8 345.0,379.2 348.2,380.1M348.4,382.5 348.2,380.1M376.9,418.4 382.2,417.7 384.5,412.9 389.3,412.8 393.6,415.0 398.2,416.1 402.9,416.2 406.3,412.9 409.9,409.9M410.3,454.0 414.1,450.1 416.1,445.0 415.6,441.9 417.8,439.7 419.9,437.9 422.2,436.2M422.2,436.2 420.7,432.6 421.6,428.7 419.4,425.6 418.2,422.0 414.3,420.5 410.9,418.2 410.4,414.0 409.9,409.9M437.0,491.6 437.3,491.5M437.0,491.6 432.9,492.0 429.8,489.2M422.2,436.2 425.1,439.1 429.2,439.8 433.0,438.5 435.9,435.8 439.4,436.5 442.1,438.9 445.4,440.0 448.5,441.5M448.5,441.5 448.9,445.5 449.5,449.5 452.4,452.4 454.6,455.9 454.0,459.9 455.0,463.9 453.4,467.5 452.2,471.3M452.2,471.3 449.3,472.9 446.6,474.9 446.8,478.5 444.6,481.3 442.8,483.9 440.8,486.3 438.3,488.4 437.3,491.5M503.1,518.2 499.9,515.8 498.3,512.1 494.0,510.9 492.7,506.7M492.7,506.7 496.2,504.5 498.6,501.3 499.9,497.3 502.9,494.5 500.3,491.3 499.7,487.2 498.9,483.3 497.5,479.5M537.4,511.5 532.7,512.2 528.6,514.6 524.6,517.1 521.4,520.7 516.8,520.7 512.2,519.8 507.9,518.1 503.1,518.2M537.4,511.5 539.8,508.9 542.7,506.9 543.8,503.5 544.3,500.0M544.3,500.0 541.6,499.0 538.7,498.5 536.1,496.8 533.0,497.2 532.6,494.3 533.0,491.4 534.3,488.5 533.0,485.5 528.3,484.0 525.9,479.7 520.8,479.0 518.2,474.6M518.2,474.6 513.2,476.6 508.3,478.8 502.9,478.8 497.5,479.5M492.7,506.7 488.1,506.9 483.5,507.0 479.6,509.4 475.4,511.4M437.3,491.5 437.7,494.6 438.8,497.4 442.3,497.5 444.1,500.4 446.7,501.9 448.6,504.1 451.3,505.5 454.4,505.2 456.6,507.6 459.8,508.3 462.7,507.3 465.5,506.0 469.0,503.9 471.2,507.3 472.5,510.2 475.4,511.4M452.2,471.3 454.6,469.9 457.4,469.5 459.9,470.7 462.6,471.4 466.7,474.7 472.0,475.7 477.2,473.9 482.2,476.0 487.4,475.6 492.1,473.2M492.1,473.2 495.3,475.9 497.5,479.5M606.1,89.8 606.0,92.8 605.2,95.5 605.2,98.5 606.7,101.1M577.7,102.3 581.5,106.1 586.9,106.5 589.1,111.4 593.4,114.4M593.4,114.4 598.7,113.3 603.9,111.7 605.6,106.4 606.7,101.1M637.3,98.1 633.4,101.1 629.8,104.3 626.9,104.4 624.1,105.3 624.0,108.2 622.2,110.6M606.7,101.1 611.6,102.9 613.2,108.0 618.5,106.7 622.2,110.6M475.3,197.7 477.7,198.9M475.3,197.7 473.4,194.1 474.0,190.0 472.5,186.3 469.5,183.7 467.4,180.5 466.2,176.8 465.9,172.9 463.5,169.7M477.7,198.9 481.7,197.2 485.0,194.5 488.5,191.8 491.1,188.4 495.0,185.8 499.7,185.6 501.5,181.4 504.5,177.9M463.5,169.7 467.6,167.1 471.9,164.8 476.9,163.9 481.7,165.4 486.5,164.6 491.4,164.1 495.6,161.2 498.3,156.9M498.3,156.9 496.7,159.6 496.1,162.6 497.4,165.4 498.4,168.3 499.3,171.0 500.3,173.8 502.7,175.5 504.5,177.9M440.6,209.3 444.2,205.7 449.1,204.1 450.8,199.0 455.6,196.5 458.3,195.4 460.7,193.8 463.2,195.4 465.4,197.2 470.4,196.2 475.3,197.7M486.7,217.0 483.0,213.2 482.2,208.0 478.5,204.1 477.7,198.9M456.3,166.6 459.4,169.3 463.5,169.7M506.5,221.2 507.0,220.9M519.8,189.0 514.4,189.2 510.9,185.1 507.2,181.9 504.5,177.9M504.5,137.6 505.6,142.9 503.2,147.9 499.6,151.8 498.3,156.9M676.5,94.5 673.7,97.4 673.3,101.4 670.2,104.0 669.2,107.9 668.9,111.7 668.0,115.4 666.5,119.0 666.4,122.9 662.5,123.6 658.7,124.4 654.9,125.9 650.9,125.5 646.6,128.0 641.6,127.1 640.1,131.5 639.4,136.2M664.6,170.4 663.0,167.9 660.4,166.5 660.5,163.6 659.1,161.0 655.1,157.3 650.4,154.5 650.2,151.4 648.2,148.9 648.5,146.0 648.8,143.0 645.6,142.1 644.6,138.9 642.2,137.3 639.4,136.2M800.1,152.5 792.7,147.4 783.8,147.4 775.5,145.3 767.0,144.5 758.4,143.9 750.0,143.0 741.1,143.4 733.3,138.9 724.0,141.2 715.4,145.4 706.2,142.1 696.4,143.0 690.8,151.3 690.0,161.3 681.6,166.3 674.2,172.7M800.1,152.5 843.1,127.9 891.1,115.5 911.8,162.5 955.7,189.5 996.7,196.6 1035.3,212.0 1079.3,217.2 1115.6,191.7 1150.0,171.3 1182.4,147.6 1216.2,126.1 1250.0,104.6 1283.7,68.4 1333.0,72.5 1333.4,26.0 1358.9,-12.8M651.5,223.8 654.4,226.7 657.5,229.4 661.6,230.5 665.0,232.8M639.6,272.9 638.2,267.8 637.9,262.6 636.2,257.7 633.4,253.2 633.7,247.8 634.2,242.5 631.0,238.1 628.6,233.2M640.1,273.1 643.7,270.8 647.4,268.7M640.1,273.1 639.6,272.9M647.4,268.7 649.5,266.4 652.6,265.9 655.7,265.1 657.1,262.2 656.9,258.9 654.5,256.6 655.0,253.6 655.8,250.6 654.8,247.8 655.5,244.9 655.6,242.1 655.7,239.2 657.4,236.6 658.9,233.9 662.1,234.2 665.0,232.8M800.1,152.5 790.4,155.7 781.0,159.6 773.0,165.9 765.1,172.5 759.7,181.7 750.0,186.5 746.9,196.3 742.2,205.5 731.4,205.1 724.1,213.0 714.8,216.3 706.1,220.8 698.2,227.6 687.8,228.0 678.6,231.6 669.0,233.7M669.0,233.7 665.0,232.8M269.2,306.9 272.8,307.5 276.4,308.1 280.2,309.0 283.8,307.4 287.6,304.7 291.5,307.2 295.1,305.4 297.3,302.0M284.9,362.2 290.0,360.7 294.8,358.8 293.5,356.0 291.5,353.6 293.8,351.4 294.7,348.3M297.3,302.0 296.5,304.9 295.1,307.5 293.9,310.3 293.3,313.2 293.0,316.2 293.6,319.2 296.1,321.9 294.1,325.1 289.6,325.4 288.1,329.6 288.9,333.3 290.4,336.8 290.8,340.2 293.5,342.2 294.8,345.1 294.7,348.3M286.8,263.0 288.6,265.7 289.3,268.8 292.8,268.4 295.0,271.2M295.0,271.2 296.4,275.0 296.3,279.1 296.7,283.3 299.7,286.3 301.0,290.3 301.4,294.6 299.6,298.4 297.3,302.0M297.3,302.0 297.3,302.0M342.2,246.0 343.2,248.7 343.1,251.5M295.0,271.2 299.0,274.6 303.4,277.5 308.1,280.0 312.6,282.8 315.7,283.4 318.7,282.4 320.9,280.3 323.7,279.1 326.9,277.3 326.1,273.7 328.4,271.4 327.9,268.2M343.1,251.5 341.4,253.9 339.1,255.6 336.4,256.7 334.4,258.8 332.3,260.8 330.7,263.2 330.0,266.1 327.9,268.2M581.2,238.1 583.0,241.6 585.7,244.4 584.5,248.3 586.1,252.0M586.1,252.0 583.7,253.7 580.8,253.9 578.3,255.2 575.7,256.2 572.3,255.6 569.0,256.3 567.8,259.5 566.5,262.6M566.5,262.6 563.1,260.6 559.2,260.1 556.4,257.5 553.6,254.8M546.2,241.5 545.6,244.3M553.6,254.8 549.7,254.5 546.9,251.6 544.8,248.2 545.6,244.3M506.5,250.1 509.7,249.8 512.3,251.7 514.2,254.2 516.7,256.0M516.7,256.0 519.8,254.5 521.3,251.5 524.5,250.5 527.7,250.8 530.7,249.5 533.3,247.6 536.5,248.4 539.7,248.7M545.6,244.3 542.5,246.3 539.7,248.7M595.6,308.3 591.1,307.0 586.9,309.1 583.6,306.1 579.3,304.8M570.9,311.0 575.4,308.3 579.3,304.8M597.1,336.4 592.0,338.3 586.6,337.5 582.2,340.5 578.0,343.8M570.9,311.0 573.4,313.9 576.3,316.4 576.4,320.3 575.9,324.1 574.5,327.3 572.4,330.1 571.4,333.5 569.5,336.5M569.5,336.5 571.7,338.2 573.6,340.3 575.2,342.8 578.0,343.8M623.9,275.3 623.8,271.2 621.4,268.0 616.7,269.0 614.5,264.6 612.1,261.9 609.4,259.6 606.6,257.4 603.8,255.2M623.9,275.3 620.8,274.6 618.3,276.5 617.0,279.2 614.6,281.0 612.2,285.9 608.9,290.3M608.9,290.3 606.2,288.6 603.1,288.6 600.5,287.0 598.3,284.9 596.0,283.0 594.1,280.7 592.3,278.3 591.1,275.5M591.1,275.5 594.9,272.0 595.3,266.8 596.3,261.9 594.2,257.3M594.2,257.3 599.1,256.8 603.8,255.2M639.6,272.9 636.1,275.0 632.0,275.7 627.9,276.2 623.9,275.3M620.3,233.2 618.5,236.8 619.7,240.6 617.7,243.8 615.1,246.4 614.2,250.4 611.1,252.9 607.6,254.4 603.8,255.2M650.9,301.7 651.3,299.4M640.1,273.1 643.1,275.5 645.7,278.3 645.6,282.2 646.6,285.9 645.6,289.8 647.7,293.1 650.1,295.9 651.3,299.4M622.5,310.6 624.7,306.6 628.7,304.5 631.7,301.2 633.9,297.5 638.3,298.0 642.4,299.8 647.0,299.2 650.9,301.7M607.6,301.2 609.9,299.0 611.4,296.2 611.5,292.6 608.9,290.3M575.0,284.1 578.6,281.1 583.1,280.0 587.3,278.0 591.1,275.5M579.3,304.8 579.3,301.6 576.7,299.7 574.8,297.5 573.0,295.3 572.4,292.4 572.1,289.4 572.9,286.4 575.0,284.1M586.1,252.0 590.5,254.0 594.2,257.3M568.7,280.5 572.3,281.5 575.0,284.1M566.5,262.6 567.0,267.3 569.4,271.3 568.2,275.8 568.7,280.5M763.1,613.2 759.8,613.2 758.5,616.3 756.6,613.6 753.4,614.2 748.4,614.9 743.6,613.6M763.1,613.2 763.1,616.4 761.9,619.5 759.8,622.2 760.2,625.6 758.4,628.6 758.7,632.1 760.3,635.1 761.1,638.3M743.6,613.6 742.0,616.6 740.5,619.5 739.8,623.0 737.2,625.3M737.2,625.3 740.9,628.6 745.0,631.3 747.7,635.9 745.8,641.0M761.1,638.3 756.4,638.8 754.0,642.8 750.1,640.8 745.8,641.0M713.8,627.9 714.7,632.8 713.8,637.8 713.1,640.8 714.9,643.4 712.4,644.9 710.5,647.0M737.9,654.1 738.1,650.0 740.1,646.5 742.7,643.5 745.8,641.0M713.8,627.9 717.2,628.4 720.2,630.0 723.0,632.1 726.2,633.2 729.7,631.6 733.5,631.8 735.8,628.8 737.2,625.3M710.9,622.2 710.3,616.9 706.8,613.0 711.8,611.3 714.9,607.1 719.0,605.4 722.7,603.1 721.0,598.4 724.2,594.5M710.9,622.2 712.9,624.7 713.8,627.9M743.6,613.6 743.5,610.2 740.7,608.3 740.0,605.3 737.9,603.0 734.9,601.3 731.5,600.4 729.1,597.2 730.5,593.5M730.5,593.5 727.5,594.7 724.2,594.5M689.9,601.0 691.2,604.8 693.0,608.3 695.6,611.5 695.6,615.7M689.9,601.0 690.3,597.5 693.0,595.0 696.9,594.4 698.0,590.6 701.3,589.4 704.0,587.2 707.4,587.6 710.8,587.1M695.6,615.7 699.6,617.0 703.7,618.0 708.1,618.8 710.9,622.2M724.2,594.5 721.1,592.0 717.2,591.2 713.8,589.5 710.8,587.1M676.4,583.4 675.0,586.3 676.1,589.2 675.8,592.3 677.2,595.0M689.9,601.0 686.4,600.3 683.1,599.0 680.3,596.8 677.2,595.0M684.7,572.6 680.5,573.3 676.7,575.1 675.9,579.2 676.4,583.4M684.7,572.6 689.9,571.6 694.8,573.3 699.5,570.6 704.8,571.4M710.8,587.1 708.2,583.1 704.1,580.7 705.4,576.1 704.8,571.4M1160.3,437.1 1140.7,452.0 1116.6,457.1 1095.8,469.5 1078.7,486.6 1056.8,498.1 1032.3,500.8 1007.8,508.7 993.8,530.4 1021.4,545.0 1032.5,574.2 1037.5,603.2 1048.4,630.4 1016.9,639.3 989.4,656.8 981.8,688.3 978.6,720.6M1160.3,437.1 1172.1,419.5 1181.5,400.4 1192.9,382.5 1207.3,366.9 1207.7,345.6 1206.4,324.4 1203.0,302.2 1213.9,282.6 1230.4,269.1 1250.2,261.5 1270.7,255.9 1292.0,257.3 1317.0,270.9 1345.5,272.5 1363.2,249.4 1365.2,220.4M1120.2,871.8 1118.6,866.7 1114.1,863.6M1061.7,892.9 1061.7,897.0 1062.1,901.2 1063.1,905.3 1064.3,909.3M1061.7,892.9 1062.8,890.0 1065.2,888.2 1067.3,886.2 1069.7,884.5 1071.3,882.0 1072.8,879.4 1073.1,876.5 1073.3,873.5M1064.3,909.3 1066.9,907.3 1069.1,905.0 1072.3,904.1 1074.9,902.1 1077.8,903.6 1080.8,905.0 1084.0,905.1 1087.3,905.7M1087.3,905.7 1088.6,903.2 1088.6,900.4 1087.5,897.8 1086.8,895.2 1089.4,890.5 1093.2,886.7M1093.2,886.7 1093.2,882.5 1089.5,880.6 1085.8,879.1 1084.8,875.2M1084.8,875.2 1081.6,875.5 1079.3,873.4 1076.4,873.6 1073.5,873.5M1073.3,873.5 1073.5,873.5M1026.7,900.5 1028.1,904.2 1031.8,905.3 1031.7,908.8 1031.4,912.3M1042.8,886.7 1045.4,885.5 1048.2,884.7 1050.9,885.6 1052.9,887.8 1057.6,889.9 1061.7,892.9M1064.0,909.9 1064.3,909.3M1040.9,861.8 1045.2,863.1 1049.7,862.4 1053.9,863.6 1058.2,864.7 1062.5,865.9 1066.6,867.7 1070.0,870.6 1073.3,873.5M1099.4,917.1 1096.4,914.2 1093.8,910.9 1090.9,907.8 1087.3,905.7M1112.9,889.8 1108.5,887.0 1103.3,886.5 1098.2,886.5 1093.2,886.7M1098.4,862.2 1094.7,865.4 1092.6,869.8 1088.2,871.8 1084.8,875.2M1072.3,848.4 1071.4,851.5 1070.9,854.7 1071.4,857.9 1072.2,861.0 1072.1,865.0 1075.6,866.9 1074.9,870.3 1073.5,873.5M949.5,779.5 950.5,779.6M945.1,738.6 940.4,737.7M949.5,779.5 946.0,776.2 941.3,775.2 937.1,773.1 932.6,771.9 931.3,767.3 931.4,762.5 929.6,757.9 926.3,754.4M940.4,737.7 937.8,739.2 935.0,740.5 932.2,741.9 929.1,741.9 928.2,744.9 928.2,747.9 925.6,750.3 926.4,753.7M926.3,754.4 926.4,753.7M847.4,684.3 849.3,689.2 850.5,694.3 855.3,696.8 858.1,701.5M847.4,684.3 844.4,684.8 842.0,686.7 839.6,688.5 836.8,689.3 834.0,691.6 834.3,695.3 831.2,696.2 828.1,697.2M858.1,701.5 855.7,706.0 853.3,710.4 853.0,713.2 852.5,715.9 849.3,716.0 848.0,719.0M828.1,697.2 827.3,700.6 826.5,703.9 827.7,707.1 828.0,710.6M828.0,710.6 832.0,713.7 833.7,718.5M848.0,719.0 842.9,718.1 838.3,720.5M838.3,720.5 833.7,718.5M849.1,676.1 848.4,680.2 847.4,684.3M830.5,667.2 828.1,669.4 825.9,671.7 822.7,670.9 819.5,672.0 818.7,675.7 820.7,679.0 817.4,680.5 814.7,682.9M814.7,682.9 816.1,688.0 819.0,692.3 823.7,694.6 828.1,697.2M769.5,608.3 772.5,606.4 776.0,606.3 779.5,606.7 782.6,608.2 785.1,610.4 786.8,613.3 790.0,614.5 792.1,617.3M763.1,613.2 766.7,611.2 769.5,608.3M761.1,638.3 764.4,640.9 766.9,644.2 771.1,645.2 774.4,647.9M792.1,617.3 792.3,622.1 790.0,626.4 789.6,631.1 788.7,635.7 786.3,640.0 782.8,643.3 779.5,647.3 774.4,647.9M761.3,673.6 760.0,669.7 763.1,666.9 762.2,663.3 764.0,660.0 766.5,657.1 770.4,657.0 774.0,657.8 777.3,656.1M761.3,673.6 759.6,673.9M774.4,647.9 776.7,651.7 777.3,656.1M765.9,737.5 765.8,734.1 763.9,731.4 763.5,728.1 763.9,724.9 766.2,722.1 767.9,718.9 767.9,715.0 765.1,712.2M765.9,737.5 769.7,738.5 773.5,739.1 776.8,741.2 780.4,742.7 784.0,740.4 786.9,737.0 790.9,738.7 795.3,739.1M795.3,739.1 795.7,735.3 797.9,732.4 797.9,728.8 797.7,725.2 798.7,721.7 798.1,718.1 797.3,714.7 797.1,711.1M765.1,712.2 769.3,711.1 773.0,713.2 774.9,709.6 775.1,705.5 777.6,704.0 779.9,702.1 781.9,699.6 785.0,698.9M797.1,711.1 796.5,707.4 795.5,703.8 791.8,702.3 789.6,699.1M785.0,698.9 789.6,699.1M752.0,705.4 755.4,706.8 759.0,708.0 762.5,709.4 765.1,712.2M756.5,744.8 752.7,744.6 749.1,743.2 745.2,744.4 741.6,742.5 737.4,742.0 734.9,738.7 732.2,736.1 729.6,733.2M756.5,744.8 759.7,744.1 761.3,741.2 764.0,739.9 765.9,737.5M804.5,744.1 809.8,743.4 812.9,739.0 817.2,736.0 819.0,731.2 821.7,732.2 824.5,731.3 826.8,729.6 828.3,727.2 829.8,722.1 833.7,718.5M828.0,710.6 824.3,708.7 820.2,709.7 816.5,710.9 812.6,711.7 808.6,712.2 804.8,713.3 800.8,712.8 797.1,711.1M804.5,744.1 800.9,744.6M800.9,744.6 797.8,742.1 795.3,739.1M761.3,673.6 765.8,674.7 768.9,678.2 772.9,680.2 776.0,683.6 779.8,686.3 782.7,689.9 783.6,694.4 785.0,698.9M814.7,682.9 811.9,681.8 808.8,681.5 805.8,681.0 802.8,681.6M802.8,681.6 800.9,683.8 798.0,684.7 798.2,687.9 795.7,689.9 793.6,692.0 793.2,694.9 792.7,698.2 789.6,699.1M802.8,681.6 802.5,678.7 800.8,676.3 800.2,673.5 800.3,670.7 798.6,668.1 799.1,665.1 798.5,661.8 795.6,660.5M795.6,660.5 791.1,659.0 786.5,658.3 781.8,657.6 777.3,656.1M796.1,966.0 791.3,968.7 792.4,974.1 788.7,976.6 785.3,979.5M797.9,1029.9 798.6,1026.2 799.5,1022.6 802.2,1019.9 803.7,1016.4 800.9,1013.5 801.1,1009.6 800.8,1005.4 797.3,1003.3 796.3,999.8 794.9,996.4 791.7,994.8 788.7,992.7 788.6,989.1 789.1,985.5 786.9,982.7 785.3,979.5M797.9,1029.9 799.2,1026.2 798.2,1022.5 800.1,1019.3 802.5,1016.5 802.6,1012.8 804.3,1009.6 802.9,1005.7 805.9,1002.7 806.9,998.9 809.9,996.4 808.3,992.7 809.6,988.9 809.7,985.3 809.7,981.8 810.3,978.2 809.4,974.6M796.1,966.0 800.5,965.9M800.5,965.9 802.2,968.6 804.6,970.6 806.5,973.2 809.4,974.6M756.6,755.8 754.8,761.0 752.0,765.7 749.5,766.9 747.5,768.9 745.8,771.1 744.2,773.3M756.5,744.8 755.4,747.4 755.6,750.3 756.7,753.0 756.6,755.8M712.6,765.2 713.6,768.1M713.6,768.1 718.0,767.9 721.7,770.2 725.4,768.2 729.5,767.2 733.5,767.9 736.8,770.3 740.1,772.7 744.2,773.3M797.8,764.0 797.8,768.5 798.6,772.9 802.7,774.8 807.0,776.0M797.8,764.0 795.3,767.0 791.9,768.9 790.6,772.9 792.2,776.7 788.5,775.6 786.1,772.5 782.4,772.3 778.8,773.2M807.0,776.0 808.8,779.6 809.2,783.6 811.7,786.7 814.3,789.7 811.6,792.5 808.8,795.3 805.1,798.0 805.7,802.5M778.8,773.2 777.7,776.8 777.9,780.5 777.7,784.5 775.2,787.5M775.2,787.5 779.8,788.8 780.7,793.4 785.0,793.5 788.3,796.3 791.7,798.9 793.2,802.9 797.3,803.6 801.0,805.5M805.7,802.5 802.2,802.3 801.0,805.5M800.9,744.6 801.1,749.6 801.0,754.6 800.3,759.6 797.8,764.0M756.6,755.8 760.6,757.4 763.1,760.9 767.1,759.8 771.3,759.9 771.2,764.4 775.3,766.4 776.6,770.0 778.8,773.2M807.0,776.0 810.0,775.9 812.9,776.5 815.8,775.7 818.4,774.2 821.4,775.7 824.5,776.8 827.9,775.9 829.8,772.9M804.5,744.1 809.0,744.3 812.6,741.7 817.0,743.1 821.0,741.0 822.1,745.3 825.1,748.6 828.7,750.9 831.7,754.1M829.8,772.9 828.0,768.0 826.4,763.1 830.3,759.3 831.7,754.1M838.3,720.5 839.4,724.1 838.4,727.8 838.3,731.5 837.9,735.2 838.6,738.9 840.2,742.4 839.4,746.1 839.0,749.9M867.1,731.5 863.8,730.7 860.6,731.8 857.7,730.3 854.4,730.1 851.2,728.4 848.5,726.0 849.1,722.4 848.0,719.0M867.1,731.5 866.2,734.6 866.0,737.8 863.9,740.2 862.7,743.3 860.3,745.7 858.9,748.9 858.0,752.5 860.1,755.6M839.0,749.9 841.8,748.6 844.7,749.6 847.6,749.0 850.4,749.4 852.8,751.1 855.5,752.2 858.0,753.6 860.1,755.6M839.0,749.9 834.9,751.2 831.7,754.1M867.1,731.5 869.7,727.1 873.1,723.2 878.1,724.0 882.8,726.1M871.9,764.7 874.3,763.2 876.0,761.0 878.6,759.7 880.2,757.4 882.8,756.3 885.6,756.1 888.0,754.5 891.0,754.8M895.2,735.3 895.5,740.5 895.7,745.6 894.5,750.8 891.0,754.8M882.8,726.1 886.6,727.5 889.2,730.5 890.7,734.8 895.2,735.3M871.9,764.7 868.0,764.0 864.1,763.1M860.1,755.6 861.2,759.8 864.1,763.1M876.4,1004.1 880.6,1001.3 881.4,996.5 881.7,991.9 883.0,987.5 886.4,984.6 890.3,982.3 894.9,980.4 896.2,975.6M915.5,975.6 911.1,972.2 905.8,970.8 903.8,972.7 901.6,974.4 899.5,977.7 896.2,975.6M850.7,1022.0 847.3,1020.1 845.1,1016.8 842.1,1013.9 837.9,1014.1 836.2,1010.6 835.3,1006.8 832.5,1004.2 830.0,1001.2 831.0,997.4 832.4,993.7 831.8,989.8 831.4,985.9 830.1,982.0 826.7,979.8 824.9,976.3 824.1,972.4M824.1,972.4 820.7,974.6 816.8,973.4 813.2,974.7 809.4,974.6M554.1,1553.0 532.5,1519.6 543.7,1481.4 570.4,1448.0 551.9,1409.5 551.8,1373.3 555.0,1337.3 576.2,1305.9 575.3,1267.9 558.9,1235.1 556.1,1198.4 560.9,1160.6 541.2,1127.9 540.0,1090.0 524.5,1055.4 540.2,1021.1 544.7,983.7M572.6,971.7 568.6,969.6M568.6,969.6 564.9,970.0 561.8,971.9 559.7,974.8 557.0,977.3 552.7,979.3 548.8,976.6 544.9,979.2 544.7,983.7M288.1,923.0 292.7,921.1 297.5,920.2 301.0,916.6 305.8,914.9 310.7,914.1 315.2,912.2 319.5,909.8 323.7,907.2M288.6,927.6 288.1,923.0M308.3,939.5 312.2,937.4 311.8,933.0 315.7,935.0 319.2,932.3 322.0,930.5 324.6,928.4 327.7,927.0 331.1,926.9M331.1,926.9 329.1,922.1 327.6,917.0 326.2,911.9 323.7,907.2M355.4,970.4 356.0,965.0M324.4,964.0 324.1,960.0 325.6,956.2 329.7,957.8 333.4,955.6 335.8,953.0 335.9,949.4 339.2,948.5 342.1,946.9M356.0,965.0 353.0,963.7 349.8,963.4 348.4,960.5 345.9,958.4 343.4,955.8 344.7,952.4 344.1,949.3 342.1,946.9M376.8,984.4 377.9,981.1 379.2,978.0 380.6,974.8 380.7,971.3 383.7,969.0 386.8,966.6 387.2,962.8 386.7,959.0M386.7,959.0 383.8,958.1 381.5,956.0 378.8,954.6 376.3,952.9M356.0,965.0 358.6,963.4 361.4,962.3 364.1,960.4 367.3,960.9 369.2,958.5 371.3,956.4 374.3,955.3 376.3,952.9M331.1,926.9 332.5,930.4 335.4,932.7 339.0,931.3 342.6,932.7M342.1,946.9 342.7,943.0 340.6,939.8 341.7,936.3 342.6,932.7M386.7,959.0 390.1,958.2 393.5,958.3M405.8,972.2 405.8,967.6 403.1,963.8M393.5,958.3 395.0,961.0 396.9,963.6 399.9,964.1 403.1,963.8M281.8,910.2 284.2,906.7 284.9,902.6M288.1,923.0 284.7,921.0 284.2,917.0 281.8,914.0 281.8,910.2M323.7,902.8 323.7,907.2M323.7,902.8 320.6,901.3 317.1,901.5 314.7,899.1 311.3,898.2M311.3,898.2 308.3,899.7 305.1,900.9 301.6,900.0 298.2,901.0 294.9,902.1 291.8,903.9 288.5,902.6 284.9,902.6M475.4,511.4 473.9,514.9 471.7,518.0 470.0,521.6 466.4,523.4 470.2,527.3 469.8,532.7 465.5,535.2 461.1,537.4M437.0,491.6 437.3,495.0 437.9,498.3 439.8,501.5 438.3,505.0 440.0,507.9 442.2,510.5 444.4,513.0 446.6,515.5 443.5,517.2 442.0,520.5 441.5,523.8 440.2,527.0 436.3,527.8 432.3,527.7 430.1,531.2 430.1,535.3M461.1,537.4 457.0,536.2 453.2,534.3 449.3,532.4 446.1,529.6 441.6,528.5 437.0,529.5 432.0,530.5 430.1,535.3M378.4,536.2 380.0,537.5M380.0,537.5 383.8,537.3 385.3,533.9 388.5,534.2 391.5,532.9 394.6,532.2 397.8,532.5 400.9,532.9 403.9,533.9 406.9,532.9 410.0,533.6 412.9,534.6 415.7,535.9 418.9,536.3 421.5,538.0 424.6,537.9 427.7,537.5M430.1,535.3 427.7,537.5M82.4,720.5 83.2,717.0 85.8,714.4 86.7,710.7 90.2,708.9 93.2,706.8 96.9,706.8 100.5,707.8 103.8,705.9M103.8,705.9 101.9,703.3 102.7,700.2 102.8,697.2 101.8,694.5 102.7,691.7 103.8,689.0 105.1,686.2 104.2,683.2M104.2,683.2 101.7,678.7 96.5,678.2 92.1,679.9 87.5,679.7 83.2,679.0 79.3,677.0 75.7,674.7 71.4,673.8 66.8,672.5 62.5,670.4 57.1,668.6 53.1,672.6 50.9,668.1 49.6,663.3 45.0,661.4 40.4,659.5M36.8,579.5 42.9,583.5 42.5,590.8 46.6,595.8 51.9,599.4 58.1,599.3 64.3,597.9 70.0,594.4 76.6,595.7 83.1,595.5 86.2,601.1 91.6,602.5 96.7,604.8 99.4,609.7 103.3,613.7 108.4,616.5 110.7,621.9M110.7,621.9 109.2,625.6 109.8,629.5 111.8,632.7 112.9,636.4 110.9,639.7 108.0,642.3 104.3,643.1 100.9,644.9M40.4,659.5 44.3,658.7 48.0,657.2 51.8,655.7 55.1,653.4 59.0,652.6 62.5,650.4 66.2,648.8 69.2,646.1 73.5,646.8 76.8,649.7 81.0,650.7 85.2,650.6 89.6,651.3 93.8,649.9 96.8,646.5 100.9,644.9M452.4,280.9 451.1,284.5 449.0,287.5 444.2,288.3 444.1,293.1M434.9,249.3 430.8,251.5 429.5,256.0 428.8,260.6 424.8,263.2 421.6,266.0 418.9,269.4 415.2,271.7 412.4,275.0M412.4,275.0 415.4,278.6 418.9,281.7 423.1,283.8 426.6,287.0 431.5,285.0 436.9,285.7 439.5,290.4 444.1,293.1M349.8,377.7 348.2,380.1M409.9,409.9 410.3,408.9M410.3,408.9 407.1,408.1 404.1,406.6 403.9,403.3 402.6,400.1 405.3,398.2 405.2,394.9 405.9,392.0 407.8,389.7 407.2,384.9 405.4,380.3 404.6,375.5 404.2,370.7M349.8,377.7 353.1,377.2 355.8,375.2 359.0,374.4 362.1,373.3 365.0,371.7 368.4,371.7 371.5,370.5 374.7,370.3 378.0,371.1 381.2,372.1 384.7,372.4 388.0,371.5 391.3,371.0 394.4,369.8 397.5,368.6 400.6,367.2M400.6,367.2 404.2,370.7M539.7,248.7 540.5,253.1 541.5,257.5 541.8,262.2 544.6,266.0 545.0,270.9 543.1,275.4 537.8,276.6 536.0,281.8M516.7,256.0 517.8,259.9 514.6,262.4 514.0,265.9 515.0,269.2 513.7,272.8 514.8,276.4 518.9,277.6 519.6,281.8M519.6,281.8 523.5,279.9 527.8,279.7 531.7,281.7 536.0,281.8M553.6,254.8 551.8,258.7 549.8,262.4 549.9,267.7 544.9,269.3 545.2,273.7 547.2,277.6 546.7,281.9 545.8,286.2M536.0,281.8 541.0,283.8 545.8,286.2M570.9,311.0 568.1,309.3 565.7,307.1 562.7,308.6 559.3,307.8 556.5,306.8 553.6,305.7 550.5,304.5 547.5,305.8M568.7,280.5 565.5,280.6 562.3,280.1 559.3,278.5 556.0,278.2 553.5,280.2 551.8,283.1 548.7,284.3 546.6,287.0M547.5,305.8 546.4,301.0 548.1,296.4 546.9,291.7 546.6,287.0M546.6,287.0 545.8,286.2M482.8,307.0 484.8,304.0 484.5,300.3 481.5,297.5 482.9,293.6 483.6,290.3 484.4,287.0 483.8,283.7 483.9,280.3M482.8,307.0 486.2,310.9M486.2,310.9 489.9,310.9 493.7,310.3 497.7,309.1 501.1,311.6 504.9,311.5 508.7,311.6 512.4,310.7 515.9,309.3M483.9,280.3 488.5,279.8 492.4,282.4 496.2,280.3 500.5,279.1 503.9,281.7 508.0,282.6 512.2,283.2 515.9,285.3M515.9,285.3 517.4,288.4 516.0,291.6 517.1,294.6 518.7,297.3 516.8,299.9 515.7,302.9 516.3,306.1 515.9,309.3M451.3,312.0 448.0,310.7 445.6,308.2 444.9,304.8 443.9,301.4M451.3,312.0 455.7,311.0 460.1,311.2 465.4,310.2 466.4,305.0 470.4,306.2 474.3,308.0 478.4,306.3 482.8,307.0M483.4,279.5 483.9,280.3M444.1,293.1 441.6,297.2 443.9,301.4M519.6,281.8 515.9,285.3M451.3,312.0 450.2,315.3 449.0,318.6 449.5,322.3 447.6,325.5 447.8,329.4 450.5,332.2 448.6,335.5 449.3,339.4M486.2,310.9 485.5,314.8 483.8,318.3 484.9,322.1 486.7,325.5 486.8,329.9 489.9,333.0 487.1,336.1 486.2,340.2M449.7,340.0 449.3,339.4M449.7,340.0 453.3,342.7 457.7,341.3 461.5,343.1 465.7,342.5 470.1,341.3 473.8,343.8 478.3,341.4 481.8,345.3M481.8,345.3 483.5,342.4 486.2,340.2M448.5,441.5 451.5,439.6 452.9,436.2 455.5,433.7 459.0,433.2M492.1,473.2 492.1,469.3 489.0,466.9 489.7,463.3 487.9,460.0 487.1,456.3 489.4,453.3 488.7,449.8 489.8,446.4M459.0,433.2 463.5,433.9 467.2,436.3 471.6,436.9 476.0,436.1 476.7,441.3 481.8,442.8 486.6,442.7 489.8,446.4M593.5,130.5 597.0,133.7 599.4,137.8 596.9,141.8 595.1,146.2 594.7,150.4 595.9,154.3 596.0,158.6 593.5,162.0M593.5,130.5 594.1,129.9M594.1,129.9 597.9,129.9 601.6,128.8 605.4,128.7 609.1,130.0 613.1,129.1 616.4,131.4 619.3,134.7 623.5,133.9M614.9,165.9 612.1,167.2 609.1,166.4 606.4,165.1 604.4,163.0 601.8,161.6 599.1,160.6 596.0,160.2 593.5,162.0M614.9,165.9 616.9,162.1 617.0,157.8 618.7,153.6 616.5,149.5 619.6,146.3 623.7,144.4 623.2,139.8 625.5,135.7M625.5,135.7 623.5,133.9M571.7,133.6 574.7,133.6 577.0,131.7 579.8,131.7 582.6,131.9 585.3,131.4 587.9,130.4 590.7,129.8 593.5,130.5M583.8,167.3 586.0,165.5 588.3,164.1 590.9,163.2 593.5,162.0M593.4,114.4 593.6,118.4 595.2,122.1 594.7,126.0 594.1,129.9M622.2,110.6 623.6,113.6 625.6,116.1 625.5,119.7 628.1,122.0 628.5,125.4 627.7,128.7 625.2,131.0 623.5,133.9M625.6,182.9 623.2,181.2 620.7,179.8 618.4,177.5 615.3,177.6 614.8,174.7 614.7,171.8 616.1,168.9 614.9,165.9M639.4,136.2 635.9,137.2 632.4,138.1 629.0,136.9 625.5,135.7M679.7,286.1 680.0,288.9 681.5,291.4 683.9,293.3 684.5,296.2 687.3,296.1 690.1,296.9 692.9,297.2 695.5,298.1M679.7,286.1 682.1,281.2 679.8,276.3 680.6,271.4 679.7,266.5M695.5,298.1 697.3,295.9 699.3,293.9 701.6,292.1 703.1,289.7 704.4,287.1 706.1,284.8 707.0,282.1 707.7,279.3 707.9,276.4 709.0,273.8 709.9,271.1 711.7,268.8 712.6,266.0 714.1,263.5 714.1,260.6 713.9,257.8M713.9,257.8 710.2,259.9 706.2,261.4 702.5,259.4 698.8,257.3 695.1,257.9 691.3,257.8 688.7,262.3 684.0,260.0M684.0,260.0 682.3,263.6 679.7,266.5M647.4,268.7 651.7,267.7 655.2,265.1 659.4,266.1 663.6,267.2 668.4,267.5 671.5,263.7 675.7,264.7 679.7,266.5M651.3,299.4 653.7,296.0 656.5,293.0 660.5,292.0 664.3,290.1 668.3,289.5 672.3,289.2 676.3,288.3 679.7,286.1M698.6,304.3 703.0,304.3 707.0,302.3 711.3,302.8 715.5,303.2 719.7,302.2 723.5,300.0 727.6,298.8 732.0,299.0 734.3,303.6 739.4,304.0 742.8,308.1 747.9,306.8 752.5,306.9 757.0,308.2 761.8,307.5 765.4,304.3M698.6,304.3 697.7,300.9 695.5,298.1M669.0,233.7 668.0,238.4 671.0,242.1 675.3,243.1 678.9,245.5 677.7,249.6 679.7,253.4 681.1,257.2 684.0,260.0M393.3,243.3 391.4,246.5 390.3,250.2 389.0,253.9 389.4,257.7M412.4,275.0 408.4,277.3 403.8,277.5M389.4,257.7 391.1,260.3 393.7,262.1 395.3,264.9 398.1,266.5 398.6,269.7 398.8,273.1 401.1,275.5 403.8,277.5M343.1,251.5 347.0,254.3 350.8,257.4 354.9,260.0 358.7,263.0M389.4,257.7 385.3,257.0 381.3,256.0 376.8,257.7 373.0,254.8 369.3,256.6 365.4,258.2 361.6,259.9 358.7,263.0M297.3,302.0 300.4,300.7 302.6,298.2 305.8,298.8 309.1,299.1 311.6,300.8 313.8,302.8 316.7,303.9 319.4,305.4M294.7,348.3 298.5,348.9 302.3,348.6 306.5,349.7 309.7,346.7 312.4,344.1 315.4,341.7 320.3,340.3 319.4,335.2M319.4,305.4 319.4,309.5 320.5,313.6 322.7,317.0 325.2,320.3 324.5,324.5 321.3,327.4 318.5,330.8 319.4,335.2M327.9,268.2 330.8,269.9 334.1,270.3 334.7,273.5 335.5,276.7 333.2,278.5 332.0,281.2 329.2,282.3 327.5,284.7 327.3,289.2 330.1,292.6 330.7,296.7 331.2,300.8M319.4,305.4 323.0,305.2 326.5,306.3 329.0,303.7 331.2,300.8M571.0,387.2 573.6,384.7 575.7,381.7 574.6,378.3 574.1,374.7 573.8,371.5 573.5,368.3 572.4,365.0 573.9,361.8M571.0,387.2 566.4,386.5 562.4,388.9 558.7,385.8 553.9,386.2M573.9,361.8 570.8,362.4 567.8,363.2 565.3,365.1 562.4,366.4 560.1,363.7 556.6,363.5 553.4,364.0 550.2,364.5M553.9,386.2 551.3,383.1 549.7,379.3 546.0,376.8 545.6,372.4M545.6,372.4 547.7,368.3 550.2,364.5M574.1,390.6 572.8,394.7 569.9,397.8 570.0,402.1 572.1,405.8M574.1,390.6 571.0,387.2M555.9,411.9 560.5,412.2 564.3,409.7 569.5,410.2 572.1,405.8M543.0,404.6 546.3,402.8 549.8,404.0 549.7,400.4 552.0,397.5 553.2,394.7 555.0,392.2 553.1,389.4 553.9,386.2M543.0,404.6 544.5,408.5 547.8,411.0 551.7,412.4 555.9,411.9M732.6,501.8 735.5,503.3 736.8,506.2 738.3,508.9 740.1,511.3 742.9,513.5 746.3,514.3 748.6,517.5 747.3,521.1M716.6,524.6 720.9,524.8 725.2,524.1 725.3,519.0 729.9,516.9 731.2,513.2 732.9,509.7 734.0,505.7 732.6,501.8M716.6,524.6 720.9,527.9 725.1,531.3 727.9,536.0 729.9,541.0M747.3,521.1 747.5,525.0 747.5,529.0 744.1,531.0 740.6,532.8 738.3,535.3 735.3,537.0 733.0,539.6 729.9,541.0M711.4,558.1 713.3,554.4 716.6,551.9 721.1,550.8 724.5,553.9M724.5,553.9 727.3,552.7 728.7,550.0 729.9,547.5 730.2,544.6M711.4,558.1 709.6,555.5 708.5,552.6 705.3,552.6 702.2,552.0 700.2,550.0 697.8,548.5 696.7,545.8 695.4,543.3M716.6,524.6 713.8,522.6 710.3,522.2 706.6,520.0 703.7,523.1M695.4,543.3 697.7,540.8 696.0,537.8 697.3,535.2 697.5,532.4 701.3,532.9 703.2,529.5 703.0,526.3 703.7,523.1M729.9,541.0 730.2,544.6M747.3,521.1 750.8,522.5 753.9,524.7 758.0,525.2 761.2,522.7M761.2,522.7 763.6,526.6 765.8,530.7M730.2,544.6 733.1,542.6 736.7,542.3 739.9,543.9 742.6,546.1 745.9,545.5 748.9,547.0 752.0,547.8 754.7,549.5M754.7,549.5 757.3,547.8 759.4,545.5 762.4,544.7 765.0,542.9 765.3,539.8 764.7,536.7 765.9,533.8 765.8,530.7M768.9,505.7 765.8,509.6 761.9,512.8 761.2,517.7 761.2,522.7M863.2,483.8 855.8,482.3 850.8,488.0 843.3,490.1 842.5,497.9 836.2,499.0 830.4,501.8 824.1,502.1 817.8,502.5 811.9,504.6 805.6,504.9 800.1,508.4 793.6,508.4 787.2,509.3 780.9,510.5 773.8,510.8 768.9,505.7M863.2,483.8 857.4,487.5 853.0,492.7 846.3,491.6 839.6,491.5 835.1,496.3 828.7,497.5 823.5,500.9 817.7,503.3 810.7,504.0 805.4,508.6 802.6,514.7 800.3,521.0 795.0,524.5 788.9,526.4 786.4,532.6 780.4,535.8M780.4,535.8 777.3,533.2 773.9,531.0 769.9,529.5 765.8,530.7M730.5,593.5 733.1,590.0 736.8,587.7 739.7,584.5 742.1,581.0M769.5,608.3 769.2,604.8 769.4,601.4 769.6,597.8 767.8,594.7M767.8,594.7 764.8,592.7 761.5,591.1 758.4,589.1 754.9,587.9 750.8,589.1 747.3,586.6 745.7,582.8 742.1,581.0M724.5,553.9 727.3,557.7 729.7,561.9 734.4,563.1 739.2,562.8 742.2,566.4 741.4,571.1 741.4,575.4 742.2,579.7M704.8,571.4 705.6,567.4 705.3,563.4 708.5,561.0 711.4,558.1M742.1,581.0 742.2,579.7M754.7,549.5 754.3,553.1 754.7,556.7 757.8,558.7 759.9,561.7M742.2,579.7 745.2,578.1 748.3,576.6 747.4,572.7 750.4,570.0 753.1,567.8 753.9,564.4 757.2,563.6 759.9,561.7M576.7,359.1 573.9,361.8M576.7,359.1 580.0,359.9 583.4,359.9 586.2,361.6 589.2,363.3 592.2,365.4 595.8,365.7 597.1,369.0 599.3,371.8M574.1,390.6 578.1,389.2 581.7,386.7 585.2,389.9 589.9,389.0M589.9,389.0 592.7,388.1 595.2,386.7 597.1,384.3 599.9,383.3 598.0,380.7 597.3,377.6 600.1,375.3 599.3,371.8M576.7,359.1 578.0,355.4 577.7,351.5 578.1,347.6 578.0,343.8M616.5,344.2 613.9,347.0 613.2,350.8 613.1,354.5 612.1,358.0 609.9,361.2 606.5,363.2 608.0,367.5 604.7,370.6M604.7,370.6 599.3,371.8M555.9,411.9 557.3,414.6 558.1,417.4 559.6,420.0 560.4,422.9 559.0,426.2 556.1,428.1 559.0,430.7 558.4,434.5M572.1,405.8 572.8,408.8 574.7,411.2 576.9,413.3 580.0,413.9M580.0,413.9 578.6,416.8 577.8,419.9 576.6,422.8 575.3,425.7 575.7,429.1 577.4,432.1 577.1,435.5 575.2,438.5M558.4,434.5 562.2,436.8 566.4,438.5 570.8,439.4 575.2,438.5M550.1,497.9 549.1,494.2 549.6,490.4 549.2,486.6 550.6,483.0 550.2,478.6 552.8,475.1 557.6,475.5 560.0,471.4M550.1,497.9 547.1,498.8 544.3,500.0M518.2,474.6 519.1,470.9 520.0,467.2 523.7,466.2 526.8,464.1 530.5,463.0 533.6,460.7 535.1,457.3 535.4,453.5M535.4,453.5 537.9,456.7 539.9,460.4 543.7,462.2 547.9,462.1 551.9,463.0 554.5,466.1 556.1,470.0 560.0,471.4M637.5,528.2 633.4,530.2 629.1,529.2 628.6,524.3 624.1,522.4 620.4,521.7 616.8,520.6 614.9,516.9 610.9,516.1M637.5,528.2 639.0,525.6 641.7,524.1 643.3,521.6 644.8,519.0 646.0,516.1 648.6,514.3 649.0,511.3 649.6,508.3M649.6,508.3 646.4,505.8 644.1,502.4 641.1,499.5 637.2,498.2 635.9,494.0 636.5,489.6 632.3,487.8 630.2,483.8M630.2,483.8 627.0,487.4 623.3,490.5 622.3,495.3 620.0,499.6 618.2,504.5 613.5,506.8 610.7,511.0 610.9,516.1M626.9,557.1 623.0,557.1 620.6,554.1 617.0,554.4 613.9,556.2 610.0,556.6 607.9,553.3 604.6,553.2 601.3,552.6M640.7,537.8 638.9,540.6 637.5,543.7 634.0,543.5 631.1,545.5 630.2,548.5 629.4,551.4 629.2,554.7 626.9,557.1M640.7,537.8 637.1,533.7 637.5,528.2M604.2,516.6 607.6,517.2 610.9,516.1M1011.3,891.2 1008.2,895.0 1003.5,896.6 999.7,899.7 994.8,900.1M1029.0,920.2 1026.0,921.5 1022.9,922.6 1020.9,925.3 1018.6,927.6M1018.6,927.6 1015.3,927.4 1012.2,926.6 1009.0,925.6 1005.7,926.5M1005.7,926.5 1004.9,922.6 1001.4,920.6 999.7,917.4 997.8,914.3 996.4,910.7 994.2,907.6 995.3,903.9 994.8,900.1M989.7,865.2 985.0,866.0 982.0,869.7 978.9,873.1 974.5,874.5M974.5,874.5 976.3,878.0 977.1,881.9 977.5,885.8 977.8,889.6M977.8,889.6 980.0,893.5 982.5,897.1 986.9,898.0 990.9,899.8M994.8,900.1 990.9,899.8M1022.7,957.0 1020.2,959.7 1016.6,959.1 1014.2,961.6 1010.7,961.5M1022.7,957.0 1027.4,958.5 1032.2,958.9M1041.6,1008.1 1038.1,1007.2 1035.3,1004.8 1033.0,1001.7 1033.5,997.8 1033.5,994.5 1034.0,991.3 1033.9,988.0 1034.2,984.7 1033.5,981.4 1035.1,978.5 1035.4,975.2 1033.7,972.4 1035.3,969.1 1033.2,966.2 1033.6,963.2 1033.2,960.1M1035.9,1047.0 1029.1,1044.4 1026.7,1037.6 1023.8,1031.2 1025.9,1024.5 1032.9,1021.7 1038.6,1016.8 1039.0,1009.3 1036.4,1002.2 1029.6,999.4 1030.9,992.2 1027.8,987.4 1025.9,981.9 1022.3,977.5 1017.9,973.8 1015.0,968.2 1008.8,966.8M1010.7,961.5 1010.6,964.4 1008.8,966.8M1032.2,958.9 1033.2,960.1M1018.6,927.6 1018.6,931.6 1021.1,934.8 1022.8,938.3 1024.2,941.8 1023.6,945.6 1022.6,949.3 1023.2,953.2 1022.7,957.0M1005.7,926.5 1004.4,929.5 1003.7,932.7 1000.8,934.6 997.4,934.3M997.4,934.3 997.5,937.2 997.2,940.1 995.7,942.6 994.0,944.9 995.4,947.3 997.4,949.2 999.0,951.5 1000.5,953.8M1000.5,953.8 1003.1,955.8 1005.4,958.0 1008.1,959.7 1010.7,961.5M1045.9,938.2 1045.3,941.5 1045.4,944.8 1043.7,947.7 1041.8,950.3 1038.7,951.7 1036.9,954.5 1035.2,957.4 1032.2,958.9M1060.7,964.1 1057.6,961.9 1054.1,960.7 1051.6,957.6 1047.7,956.8 1043.6,957.0 1039.8,955.3 1037.3,958.8 1033.2,960.1M1063.5,969.5 1064.8,972.4 1063.8,975.4 1063.3,978.4 1061.9,981.1 1060.0,983.6 1058.8,986.4 1059.3,989.5 1059.2,992.5 1057.2,994.7 1054.9,996.7 1051.8,997.2 1049.7,999.6 1047.0,1001.0 1045.2,1003.4 1043.9,1006.1 1041.6,1008.1M977.3,957.6 980.3,957.4 983.2,957.2 986.8,958.2 988.8,955.1 991.7,954.5 994.6,953.4 997.6,953.1 1000.5,953.8M997.4,934.3 992.7,932.8 988.2,931.0 983.4,931.4 978.6,931.6M977.3,957.6 975.7,955.3M975.7,955.3 977.3,952.1 976.7,948.6 979.3,946.4 981.6,944.0 979.8,941.2 979.7,937.9 978.9,934.7 978.6,931.6M990.9,899.8 989.6,903.6 988.4,907.4 986.9,911.1 984.5,914.3 982.4,916.5 979.9,918.3 981.2,921.1 982.9,923.6 978.2,924.5 973.7,925.9M978.6,931.6 974.8,929.9 973.7,925.9M882.8,726.1 883.3,723.0 884.3,719.9 882.8,716.9 883.5,713.6 883.0,710.4 884.3,707.4 884.9,704.3 884.7,701.1M858.1,701.5 861.5,700.9 864.9,700.6 866.5,697.3 869.9,695.8 873.3,695.6 876.5,696.6 879.5,698.0 882.9,697.9M884.7,701.1 882.9,697.9M868.6,669.1 871.3,672.4 873.4,676.1 876.8,678.8 880.9,680.1 882.4,684.2 881.4,688.4 881.8,692.6 883.1,696.6M883.1,696.6 882.9,697.9M898.7,639.1 904.8,637.9 908.6,633.0 913.8,630.1 919.7,629.6 924.0,625.4 929.9,624.3 935.6,622.9 940.3,619.5 945.7,617.0 949.8,612.7 955.3,610.2 958.8,605.2 965.0,604.0 971.1,605.4 976.5,602.3 981.1,598.2M883.1,696.6 888.0,686.2 899.5,685.7 909.4,686.6 919.3,687.4 929.0,684.1 938.6,680.4 940.8,670.3 946.0,661.2 951.0,652.2 949.5,642.0 945.6,632.0 950.6,622.5 960.4,619.8 969.1,614.4 975.2,606.4 981.1,598.2M849.8,637.8 848.4,634.6 849.1,631.1 847.4,628.0 847.6,624.4M964.8,502.4 996.4,498.1 1021.4,478.4 1052.2,472.8 1082.8,479.5 1089.5,449.6 1107.0,424.3 1108.3,393.3 1124.1,366.6 1147.5,353.5 1164.3,332.5 1185.0,316.4 1205.1,299.2 1235.1,314.7 1268.1,307.1 1286.6,281.1 1299.1,251.7M1160.3,437.1 1156.7,450.9 1147.1,461.6 1135.9,469.9 1123.6,476.5 1112.1,483.9 1099.4,489.0 1093.8,502.7 1080.3,508.5 1073.2,522.2 1064.1,534.7 1049.1,539.7 1033.5,537.4 1025.1,550.0 1011.1,555.8 1009.1,570.3 1004.0,583.9M981.1,598.2 984.8,597.9 987.0,594.9 990.2,593.6 993.3,592.2 994.8,588.9 998.1,587.3 1001.8,586.9 1004.0,583.9M821.3,646.9 818.1,647.6 815.3,649.4 812.4,647.2 808.8,648.4M821.3,646.9 822.3,642.6 820.7,638.5 817.3,635.4 817.2,630.8 819.3,627.1 819.7,622.9 821.3,619.1 823.5,615.6M808.8,648.4 807.6,643.6 808.2,638.6 805.3,638.7 802.4,638.4 801.1,635.9 800.1,633.2 798.6,629.0 797.7,624.6 796.6,620.0 792.8,617.2M823.5,615.6 820.3,618.0 816.5,619.4 813.7,622.8 809.3,622.9 805.8,621.0 801.9,619.7 797.8,618.8 795.2,615.3M795.2,615.3 792.8,617.2M825.7,649.0 821.3,646.9M795.6,660.5 799.3,658.0 802.4,654.7 805.7,651.6 808.8,648.4M824.9,614.5 823.5,615.6M792.1,617.3 792.8,617.2M721.3,866.5 719.4,864.4 717.5,862.2 716.2,859.2 718.0,856.5 713.2,853.8 710.6,849.0M721.3,866.5 718.0,868.0 715.2,870.3 712.3,872.6 708.9,873.8 705.7,875.7 702.7,877.9 700.4,880.8 698.5,883.9M710.6,849.0 706.8,849.5 703.8,851.9 700.4,853.6 696.6,853.1 692.8,852.8 689.4,850.9 685.7,851.3 682.0,851.5M698.5,883.9 695.3,881.5 691.3,881.1M691.3,881.1 687.8,877.8 687.8,873.1 684.5,870.3 681.7,866.9M682.0,851.5 685.2,854.7 685.5,859.3 685.1,863.9 681.7,866.9M710.2,906.6 707.1,910.8 704.6,915.4M704.6,915.4 701.1,919.5 700.0,924.8 697.2,926.3 694.1,927.0 690.8,925.6 689.9,922.1 685.6,920.6 684.0,916.3 679.8,915.9 676.0,913.9M676.0,913.9 676.2,909.8 677.6,905.9 674.0,903.6 672.8,899.4M672.8,899.4 673.4,895.8 676.3,893.7 678.7,891.3 680.0,888.1 681.5,884.8 684.8,883.2 688.2,882.8 691.3,881.1M710.2,906.6 708.6,903.3 709.9,899.9 710.3,896.2 707.8,893.5 705.7,890.7 704.6,887.3 701.3,886.1 698.5,883.9M651.6,891.1 654.8,889.6 657.7,887.6 660.8,889.3 664.4,889.7 663.6,893.7 666.9,896.1 669.6,898.3 672.8,899.4M650.1,879.5 651.2,882.4 652.7,885.1 652.4,888.1 651.6,891.1M650.1,879.5 652.9,878.0 653.1,874.8 656.0,874.4 658.6,875.7 661.3,871.8 663.8,868.0 668.5,868.4 672.9,870.2 677.7,869.5 681.7,866.9M763.1,853.8 764.0,857.2 762.4,860.3 763.4,863.4 765.0,866.2 766.6,868.9 768.3,871.6 769.9,874.5 769.7,877.8M763.1,853.8 758.1,852.0 752.9,851.0 748.4,853.7 744.2,856.9M744.2,856.9 741.8,860.4 737.7,861.7 736.6,865.6 733.7,868.6M733.7,868.6 733.7,873.0 734.2,877.3 736.4,881.1 739.1,884.5M739.1,884.5 741.8,886.4 745.1,887.3 748.0,885.9 750.9,884.3 751.3,887.6 752.0,890.8 754.0,893.7 757.5,894.2M769.7,877.8 765.7,881.6 765.0,887.0 761.8,891.2 757.5,894.2M721.3,866.5 724.5,865.8 727.7,866.3 730.2,868.9 733.7,868.6M710.2,906.6 714.6,907.9 718.7,905.8M718.7,905.8 720.0,901.0 723.7,897.7 723.7,892.9 721.8,888.4 725.7,885.6 729.6,882.8 734.1,885.1 739.1,884.5M676.4,791.4 673.6,788.9 672.7,785.3 669.2,783.9 667.4,780.6 666.0,777.0 664.2,773.6 663.6,769.1 667.3,766.5M676.4,791.4 679.2,792.3 682.2,792.7M681.0,756.1 676.4,756.6 673.0,759.8 668.5,761.8 667.3,766.5M713.6,768.1 713.8,771.5 711.7,774.1M682.2,792.7 686.2,790.4 690.9,790.1 695.0,787.9 699.7,787.8 700.3,782.8 703.3,778.9 706.2,779.5 709.0,779.2 711.5,777.2 711.7,774.1M676.4,791.4 672.2,792.6 667.9,793.8 665.6,797.6 665.2,802.1M681.9,833.0 678.1,829.3 673.6,826.5 669.8,822.7 665.6,819.5M681.9,833.0 685.4,831.3 689.4,831.0 689.9,827.2 691.4,823.6 693.5,819.8 697.7,820.9 701.6,819.6 702.1,815.6M665.2,802.1 666.2,806.4 666.3,810.8 665.6,815.1 665.6,819.5M682.2,792.7 684.6,796.7 686.2,801.1 690.9,801.7 695.6,801.1 695.4,805.5 695.5,809.9 698.4,813.2 702.1,815.6M775.2,787.5 772.6,789.6 769.3,790.3 765.5,790.4 763.7,793.8M744.2,773.3 746.9,776.4 747.9,780.5 749.7,784.5 748.4,788.6M763.7,793.8 759.6,793.1 756.2,790.8 752.2,790.0 748.4,788.6M829.8,772.9 832.4,775.8 835.1,778.4M864.1,763.1 860.4,765.2 857.4,768.2 858.1,772.8 855.3,776.4M835.1,778.4 840.5,779.6 845.6,781.4 850.6,779.2 855.3,776.4M796.0,815.9 797.7,819.1 797.6,822.7 793.3,825.5 796.5,829.5 800.0,831.4 804.0,831.9 803.4,836.0 805.6,839.6M796.0,815.9 793.5,819.4 790.4,822.4 787.5,825.7 783.6,827.6 779.2,828.5 775.1,826.8 771.2,824.8 767.0,823.9M768.1,848.4 771.6,850.6 775.7,851.7 777.6,855.6 781.5,857.5 784.9,854.7 789.3,854.9 793.5,855.7 797.3,853.7M768.1,848.4 768.1,845.2 767.6,842.0 766.9,838.8 764.6,836.4 764.1,833.2 764.7,830.1 765.1,826.9 766.8,824.1M797.3,853.7 799.3,849.9 803.0,847.6 805.0,843.8 805.6,839.6M766.8,824.1 767.0,823.9M763.7,793.8 761.8,797.3 761.1,801.4 763.5,804.8 763.7,809.0 765.6,812.5 765.2,816.5 764.0,820.7 767.0,823.9M801.0,805.5 799.3,807.9 797.8,810.4 797.5,813.3 796.0,815.9M974.5,874.5 972.5,871.5 969.2,870.1 966.0,868.8 963.1,866.7M950.9,905.1 954.0,901.9 958.4,901.4 962.5,901.5 966.7,901.3 969.8,898.7 973.2,896.4 974.1,892.1 977.8,889.6M950.9,905.1 951.4,899.8 949.8,894.8 946.9,894.1 943.8,894.0 942.6,891.2 941.7,888.3M941.7,888.3 944.0,885.4 945.0,881.8 948.2,879.9 951.4,878.3 953.6,875.5 956.0,873.0 957.1,869.5 960.0,867.3M963.1,866.7 960.0,867.3M989.7,840.2 986.7,840.1 983.9,839.3 981.5,837.5 979.2,835.8 976.8,838.1 974.6,840.6 971.7,838.3 968.1,838.7M963.1,866.7 963.8,863.2 964.5,859.8 966.1,856.4 965.5,852.7 967.5,849.6 968.2,846.0 967.9,842.4 968.1,838.7M972.3,807.7 972.4,811.7 973.6,815.5 975.6,819.3 974.5,823.4 973.9,827.5 972.4,831.3 971.1,835.6 967.0,837.4M968.1,838.7 967.0,837.4M665.2,802.1 664.6,798.7 661.5,797.3 658.8,796.0 655.8,795.5 653.4,797.6 651.3,800.0 648.1,799.5 644.9,799.4M665.6,819.5 663.4,822.7 660.8,825.7 656.6,823.5 653.0,826.5 649.4,827.4 646.3,829.6 644.4,832.9 641.2,834.8M644.9,799.4 643.5,803.3 639.3,803.6 638.6,807.2 635.7,809.5 636.9,813.2 635.3,816.6 634.3,820.2 631.5,822.5M641.2,834.8 638.1,831.6 633.8,830.7 633.1,826.5 631.5,822.5M681.9,833.0 678.6,836.7 679.2,841.6 680.3,846.0 681.3,850.3M681.3,850.3 676.3,850.8 671.4,849.8 666.5,849.8 661.6,850.7 656.3,851.7 651.1,852.8 647.4,849.1 650.0,844.7 646.0,845.5 642.2,847.0M641.2,834.8 642.0,838.4 639.6,841.1 640.1,844.4 642.2,847.0M670.1,960.6 672.8,961.9 674.1,964.5 676.0,966.5 678.3,968.2 677.1,970.9 677.3,973.8 675.4,976.0 674.4,978.7 679.2,981.0 680.2,986.3 680.8,991.1 681.7,995.8M647.6,969.7 646.6,965.2 648.5,961.0 651.1,957.4 654.6,954.7 659.0,954.4 662.7,956.6 666.3,958.9 670.1,960.6M647.6,969.7 650.4,975.4 654.9,979.7 656.1,986.0 660.2,990.9 662.2,997.1 666.2,1002.3 665.9,1008.7 664.8,1015.1 660.8,1021.0 661.9,1028.1 667.5,1032.4 670.0,1038.8 670.8,1045.1 673.9,1050.7 674.3,1057.1 672.0,1063.0M647.6,969.7 643.9,967.8M718.7,905.8 721.0,909.0 724.3,911.2 727.4,913.4 730.8,915.1 734.5,917.4 738.7,916.9 741.4,920.0 743.9,923.1M705.1,933.5 709.3,933.3 713.3,934.3 717.3,935.5 721.4,935.8 723.8,933.9 725.0,931.2 727.6,932.5 730.1,934.0 735.3,934.1 737.7,938.6M737.7,938.6 739.9,935.1 743.0,932.2 743.1,928.1 744.0,924.0M704.6,915.4 705.9,918.3 709.1,918.8 709.2,921.7 708.0,924.3 707.1,929.1 705.1,933.5M744.0,924.0 743.9,923.1M757.5,894.2 758.9,898.5M743.9,923.1 746.9,920.1 750.0,917.0 754.0,915.0 758.5,915.1 756.9,910.8 759.2,906.8 758.7,902.7 758.9,898.5M670.1,960.6 670.3,960.3M670.3,960.3 673.3,959.8 676.3,959.5 678.6,957.5 680.7,955.4 683.5,956.1 686.4,956.7 689.0,957.9 691.8,958.6M681.7,995.8 683.5,992.3 687.2,990.9 689.1,987.8 690.5,984.4 692.0,981.0 694.5,978.4 695.6,974.9 697.7,971.9M691.8,958.6 694.4,961.4 695.1,965.1 695.0,969.1 697.7,971.9M737.7,938.6 739.6,941.3 740.2,944.4 739.9,947.5 740.0,950.7M744.0,924.0 747.6,923.6 751.1,924.8 753.4,921.4 757.5,922.0 759.4,925.0 761.5,927.7 764.3,929.9 767.4,931.4M771.9,951.1 770.0,949.1 767.8,947.4 767.9,944.6 767.3,941.8 768.9,939.4 769.5,936.7 768.8,933.9 767.4,931.4M771.9,951.1 770.6,952.4M740.0,950.7 743.6,948.2 747.9,949.0 751.7,947.7 755.6,946.5 759.6,949.5 761.2,954.2 765.9,953.6 770.6,952.4M780.8,950.8 776.4,951.1 771.9,951.1M796.1,966.0 795.1,963.4 793.0,961.4 791.5,959.1 790.2,956.6 788.1,954.7 785.7,953.3 783.3,952.0 780.8,950.8M785.3,979.5 780.2,979.9 776.1,976.8 771.9,974.6 767.7,972.2M770.6,952.4 770.8,957.4 770.1,962.5 770.8,967.8 767.7,972.2M726.1,1333.4 709.4,1310.1 712.1,1281.5 708.2,1249.3 736.6,1233.6 727.1,1210.2 712.0,1189.9 697.8,1169.2 685.0,1147.6 683.4,1122.2 683.8,1096.8 692.8,1071.6 714.7,1056.5 732.5,1039.4 749.4,1021.5 750.4,996.0 764.7,974.8M764.7,974.8 767.7,972.2M555.0,928.9 559.3,931.7 564.4,930.8 568.6,928.5 573.0,926.6M555.0,928.9 552.7,931.7 553.9,935.1 551.4,937.2 548.6,938.6 549.6,941.5 548.9,944.4 548.5,947.4 549.2,950.3M560.6,955.4 557.7,954.3 554.9,952.9 552.2,951.2 549.2,950.3M560.6,955.4 563.0,952.7 563.1,949.1 564.9,946.2 566.3,943.1 569.6,941.3 573.3,942.2 576.1,940.3 579.0,938.2M579.0,938.2 579.2,934.7 577.5,931.7 575.1,929.3 573.0,926.6M551.3,900.4 549.2,904.9 549.9,909.8 547.8,914.1 546.4,918.7M546.4,918.7 549.3,920.6 550.5,923.9 553.6,925.6 555.0,928.9M560.7,895.0 563.6,896.5 566.8,897.6 569.7,895.7 573.2,896.2M560.7,895.0 559.9,898.2 557.4,900.2 554.4,900.3 551.3,900.4M579.8,905.8 579.2,902.8 577.1,900.6 574.7,898.8 573.2,896.2M579.8,905.8 581.2,908.5 581.0,911.5 579.4,914.0 578.7,916.9 578.4,919.9 576.7,922.3 574.9,924.5 573.0,926.6M568.6,969.6 566.5,965.5 567.4,960.9 563.9,958.3 560.6,955.4M592.4,943.5 589.0,942.1 585.3,941.8 580.7,942.6 579.0,938.2M602.6,931.0 603.3,925.6 601.0,920.6 599.1,915.6 597.7,910.6M597.7,910.6 593.7,907.7 588.8,908.0 584.2,907.2 579.8,905.8M549.2,950.3 544.6,951.3 539.9,952.2M544.7,983.7 543.5,980.7 541.9,977.9 539.4,975.8 536.6,974.2M536.6,974.2 533.3,972.2 530.4,969.5 532.0,965.9 534.1,962.6 534.8,959.3 537.8,957.8 538.3,954.8 539.9,952.2M551.3,900.4 548.3,898.0 545.1,895.9 541.3,895.8 537.4,895.3 532.9,895.7 529.3,898.5 526.2,895.4 522.9,892.7M546.4,918.7 541.2,917.5 537.3,921.0 533.6,924.1 528.8,924.9M528.8,924.9 526.4,922.7 524.0,920.5 521.4,918.6 518.5,917.1 517.0,914.0 517.6,910.6 519.8,906.7 516.0,904.4M522.9,892.7 521.5,896.1 521.5,899.7 518.2,901.4 516.0,904.4M420.4,979.4 423.2,979.4 425.9,978.5 427.2,975.9 429.7,974.3M429.7,974.3 433.6,974.0 436.6,976.6 437.5,981.1 442.1,981.2M442.1,981.2 437.3,999.3 423.4,1011.8 434.2,1027.9 430.3,1046.9 430.9,1066.5 419.2,1082.2 426.3,1099.7 439.8,1112.9 439.7,1130.0 444.3,1146.5 441.2,1163.5 444.8,1180.4 451.5,1197.7 468.1,1205.9 468.5,1224.0 479.4,1238.5M376.3,952.9 376.7,949.1 378.4,945.7 376.1,942.8 373.3,940.2 373.4,936.8 372.4,933.6 369.7,931.4 368.6,928.1M342.6,932.7 347.2,930.9 352.1,930.7 355.5,926.9 360.4,925.8M368.6,928.1 364.1,928.1 360.4,925.8M368.6,928.1 372.1,929.8 375.6,927.9 378.9,929.1 382.2,930.5 386.2,929.5 386.9,925.4 387.1,921.6 390.2,919.2M393.5,958.3 397.7,958.2 401.8,957.3 400.8,953.1 402.4,949.0 403.3,945.1 399.9,942.9 399.5,939.6 400.4,936.3M400.4,936.3 395.7,933.6 391.7,929.9 393.3,927.3 393.7,924.2 391.2,922.2 390.2,919.2M356.8,889.6 357.3,894.3 356.2,898.8 356.8,903.5 359.3,907.6 360.1,912.2 361.4,916.6 360.2,921.1 360.4,925.8M374.9,874.5 371.0,875.7 367.4,873.8 364.0,876.2 360.0,875.0 363.9,878.4 361.7,883.0 360.2,887.0 356.8,889.6M374.9,874.5 377.9,875.2 379.8,877.7 382.4,879.3 384.5,881.4 384.8,884.4 386.2,887.1 387.3,889.8 388.5,892.6 390.2,895.1 390.9,898.0 393.0,900.2 394.2,903.0 396.4,905.9 394.4,909.0 394.3,912.1 392.8,914.8M392.8,914.8 390.2,919.2M422.9,951.9 420.5,948.2 422.3,944.2 421.2,940.2 417.4,938.4M422.9,951.9 427.0,953.7 431.2,954.9M438.2,952.5 434.7,953.6 431.2,954.9M438.2,952.5 439.8,948.7 441.0,944.7 444.5,942.5 448.0,940.2 450.7,939.2 453.0,937.6 451.3,934.7 453.1,931.9 451.4,927.0 446.7,924.5M417.4,938.4 417.6,933.0 419.1,927.7 420.4,924.9 421.1,921.8 424.2,921.9 427.2,920.6M446.7,924.5 443.5,925.0 440.7,923.6 438.1,925.3 435.9,927.6 433.3,926.5 430.7,925.2 428.0,923.7 427.2,920.6M403.1,963.8 406.1,963.2 408.7,961.5 411.8,961.7 414.7,960.6 415.3,957.4 417.4,955.0 420.2,953.4 422.9,951.9M400.4,936.3 405.6,936.7 409.4,933.0 414.2,934.4 417.4,938.4M429.7,974.3 431.8,969.7 431.8,964.7 431.5,959.8 431.2,954.9M392.8,914.8 396.3,915.6 399.5,917.2 402.0,914.6 404.7,912.2 407.8,911.3 409.9,908.9 412.9,908.1 415.8,906.9M415.8,906.9 420.8,907.7 424.5,911.2 426.0,915.9 427.2,920.6M603.2,874.1 604.9,877.7 607.8,880.4 610.7,883.2 614.3,884.8M603.2,874.1 602.4,870.8 604.1,867.8 604.2,864.5 602.4,861.7 604.9,859.3 606.1,856.2 609.3,855.5 612.1,853.7M614.3,884.8 619.2,882.7 622.9,886.6 626.8,884.4 629.7,881.0 630.7,876.6 635.0,875.0 637.2,870.8 641.9,871.1M612.1,853.7 615.6,853.6 619.1,853.2 621.9,850.9 625.5,850.4 628.2,853.2 631.9,854.7 636.1,855.0 639.2,852.3M641.9,871.1 641.7,866.3 641.1,861.6 639.6,857.0 639.2,852.3M585.9,874.9 583.5,877.0 581.3,879.2 579.0,881.5 577.4,884.2 578.3,887.6 577.7,891.0 575.7,893.8 573.2,896.2M615.5,900.3 613.4,896.6 615.0,892.6 612.6,888.9 614.3,884.8M615.5,900.3 613.0,901.7 610.8,903.4 610.3,906.3 608.3,908.4 605.2,909.1 602.6,907.4 599.7,908.3 597.7,910.6M585.9,874.9 590.3,874.7 594.5,873.6 598.8,874.7 603.2,874.1M681.3,850.3 682.0,851.5M650.1,879.5 649.0,876.0 645.3,876.0 643.2,873.8 641.9,871.1M642.2,847.0 640.5,849.5 639.2,852.3M701.7,939.3 703.2,936.3 705.1,933.5M676.0,913.9 673.2,917.7M701.7,939.3 699.4,936.3 696.3,934.2 693.0,932.6 690.0,930.4 686.3,931.3 682.5,931.4 678.8,932.9 676.4,936.0M673.2,917.7 675.0,922.2 677.5,926.4 674.9,931.0 676.4,936.0M670.3,960.3 672.0,956.5 671.5,952.5 671.3,948.1 667.8,945.5M691.8,958.6 693.6,954.1 694.5,949.3 697.5,945.4 701.7,942.8M701.7,939.3 701.7,942.8M667.8,945.5 670.7,943.9 673.2,941.8 675.8,939.5 676.4,936.0M627.5,907.8 631.1,905.5 635.4,905.0 639.3,903.2 643.6,903.6M627.5,907.8 625.8,910.3 625.3,913.2 624.2,916.0 625.0,918.9 627.2,921.5 625.9,924.5 626.4,927.3 626.5,930.2M643.6,903.6 646.3,907.8 648.2,912.5 652.3,915.7 654.5,920.4M626.5,930.2 628.9,932.1 631.9,933.1 634.6,931.6 637.6,930.8 640.1,933.1 640.5,936.4 643.8,935.9 646.8,937.1M654.5,920.4 652.7,924.3 651.9,928.6 647.9,931.5 648.3,936.5M646.8,937.1 648.3,936.5M615.5,900.3 618.7,901.8 622.0,903.2 625.1,905.1 627.5,907.8M651.6,891.1 648.8,893.9 645.4,895.9 643.7,899.5 643.6,903.6M623.6,932.3 626.5,930.2M673.2,917.7 668.8,919.9 664.3,922.0 659.4,921.5 654.5,920.4M640.0,959.4 642.0,956.8 644.8,955.1 644.2,951.8 644.3,948.6 643.1,945.3 642.0,942.1 644.5,939.7 646.8,937.1M667.8,945.5 665.0,945.7 662.5,944.3 659.5,944.8 657.1,943.2 655.4,940.9 652.7,939.9 651.5,936.9 648.3,936.5M356.8,889.6 355.6,892.6 352.4,893.3 349.7,892.5 346.8,892.4 342.2,889.6 336.8,889.6M377.8,867.4 376.0,870.8 374.9,874.5M345.7,854.6 342.5,855.1 339.6,856.3 337.1,858.6 336.8,862.0M336.8,862.0 337.9,865.4 339.1,868.7 339.2,872.3 338.6,875.8 337.6,879.4 339.1,882.9 339.4,886.7 336.8,889.6M323.7,902.8 326.0,900.0 328.8,897.8 331.9,895.4 332.0,891.4M332.0,891.4 336.8,889.6M231.4,941.3 231.9,937.4 234.4,934.4 233.9,930.6 233.0,926.9 235.9,924.7 238.3,921.9 240.9,919.3 242.1,915.7M219.4,902.4 221.5,902.1M209.5,923.1 211.7,920.3 214.8,918.4 213.1,915.2 212.3,911.7 213.7,908.7 213.5,905.3 216.0,903.1 219.4,902.4M221.5,902.1 225.4,901.9 226.6,905.6 229.3,907.1 232.0,908.6 233.3,912.0 234.9,915.2 238.5,915.4 242.1,915.7M263.9,941.2 259.5,939.7 257.2,935.6 256.9,931.1 258.5,926.9 258.0,922.8 256.3,919.0 252.4,917.4 249.5,914.5M242.1,915.7 245.9,916.0 249.5,914.5M281.8,910.2 279.3,907.4 275.5,906.8 272.4,908.9 268.7,908.7 265.8,911.4 262.4,913.7 259.2,911.3 255.4,909.8M249.5,914.5 252.6,912.3 255.4,909.8M126.0,849.3 128.3,847.4M92.2,827.0 94.3,824.5 95.2,821.3 97.6,819.0 100.6,817.7 103.7,815.6 106.8,817.6 110.2,818.5 113.0,816.5M113.0,816.5 118.4,816.8 121.1,821.4 124.0,825.5 123.6,830.5 126.9,834.4 130.8,837.6 130.2,842.7 128.3,847.4M363.5,536.0 358.5,535.7 353.5,535.8 350.8,537.9 347.8,536.1 346.7,538.7 345.1,541.0 341.8,541.5 339.2,543.5 338.6,546.9 340.6,549.6 337.6,553.5 333.5,556.2M296.2,523.3 294.9,525.7M333.5,556.2 329.7,556.8 326.4,554.9 323.2,556.7 319.9,558.2 316.7,557.0 313.5,555.8 310.1,555.0 307.2,553.1M294.9,525.7 297.1,528.9 298.3,532.7 296.8,536.7 298.7,540.4 297.1,545.0 299.3,549.2 303.1,551.5 307.2,553.1M415.8,906.9 416.0,902.2 415.1,897.6 417.5,893.6 418.7,889.1 421.3,887.7 424.2,887.9 423.8,884.7 426.3,882.6 425.8,877.6 426.3,872.6M377.8,867.4 380.7,865.5 383.5,863.5 384.9,860.1 388.4,858.7M426.3,872.6 423.8,871.4 421.3,870.2 418.5,869.3 416.8,867.0 414.0,868.5 412.0,871.0 409.3,869.0 405.9,869.4 401.4,866.9 397.2,864.0 392.5,861.7 388.4,858.7M560.7,895.0 559.4,890.7 558.1,886.3 553.8,883.8 553.0,878.8 550.1,875.1 550.2,870.3 547.5,866.6 546.3,862.3M522.9,892.7 521.9,889.0 521.6,885.2 520.3,881.7 520.1,877.9M546.3,862.3 543.6,865.1 540.3,867.1 537.1,869.4 533.2,870.1 530.2,872.7 526.4,873.5 522.8,875.0 520.1,877.9M667.3,766.5 664.0,763.9 661.3,760.7 657.2,761.3 653.1,762.1M661.6,722.9 658.8,725.4 655.0,725.8 653.6,729.3 650.3,731.2M653.1,762.1 648.9,760.1 646.7,756.0 645.5,751.6 645.8,747.2 648.1,743.5 650.7,740.0 651.0,735.6 650.3,731.2M470.8,552.5 466.5,550.4 464.3,546.1 462.4,541.9 461.1,537.4M470.8,552.5 466.9,555.8 467.7,560.8 464.8,564.5 464.5,569.2M427.7,537.5 426.0,540.4 426.8,543.7 429.8,544.8 432.6,546.4 436.1,550.1 438.4,554.7 436.1,559.4 434.2,564.2 432.7,566.7 432.9,569.6 435.0,571.7 435.3,574.7M435.3,574.7 439.6,575.0 443.9,574.1 446.7,570.9 449.0,567.2 453.0,567.1 457.0,566.4 460.6,568.1 464.5,569.2M380.0,537.5 381.1,540.2 382.4,542.9 382.6,545.9 383.4,548.7 383.8,551.7 385.3,554.3 384.6,557.7 387.3,559.8 389.6,562.0 390.4,565.0 390.8,568.0 390.7,571.0 392.7,573.4 394.0,576.2 395.1,579.4 393.6,582.4M393.6,582.4 397.9,583.6 401.5,586.3 406.4,586.2 409.4,590.0 413.8,588.6 417.9,586.8 422.2,588.5 426.9,588.6M435.3,574.7 433.7,578.6 432.9,582.7 431.0,586.8 426.9,588.6M-185.5,789.6 -176.1,769.6 -154.0,768.3 -135.8,762.6 -118.5,754.6 -99.5,750.8 -81.1,744.4 -71.7,725.6 -51.8,719.1 -31.3,712.8 -10.0,711.9 8.9,701.0 30.7,699.7 49.7,715.4 74.3,713.9 85.4,733.9 95.2,754.6M82.4,720.5 85.7,722.4 87.5,725.7 88.4,729.4 91.2,732.1 91.1,736.6 93.8,740.3 94.8,736.6 98.5,737.2 100.4,739.3 102.4,741.3M95.2,754.6 95.4,750.7 97.7,747.4 99.8,744.2 102.4,741.3M119.4,714.7 120.5,718.0 119.9,721.4 118.2,724.3 115.9,726.9 118.6,729.4 119.9,732.8 120.2,736.5 117.9,739.5M103.8,705.9 105.9,707.8 106.7,710.5 107.0,713.4 108.5,715.7 110.9,718.1 114.2,717.8 116.3,715.4 119.4,714.7M102.4,741.3 106.3,741.3 110.3,741.1 114.4,741.8 117.9,739.5M166.3,704.6 164.3,699.6M166.3,704.6 166.7,708.2 168.1,711.6 165.9,714.5 164.2,717.7 161.3,719.6 158.7,721.8 157.1,725.0 156.5,728.4M164.3,699.6 160.9,699.2 157.5,699.9 153.6,700.2 151.4,696.9 147.5,696.0 145.6,692.5 142.5,695.2 138.5,694.4M156.5,728.4 153.5,728.0 150.5,728.0M150.5,728.0 146.7,728.2 143.0,727.4 140.8,724.1 137.1,722.8 136.8,719.1 135.1,715.9 133.2,712.7 132.8,709.1M138.5,694.4 136.0,697.8 132.9,700.7 134.4,704.9 132.8,709.1M117.9,739.5 121.3,743.8 126.4,745.5M126.4,745.5 129.2,742.8 132.3,740.5 135.9,739.2 139.6,738.4 143.1,736.2 147.0,735.2 149.4,731.9 150.5,728.0M119.4,714.7 122.3,712.4 125.9,711.3 129.2,709.9 132.8,709.1M416.1,333.0 414.7,335.6 412.2,337.4 409.3,337.9 406.4,338.4 404.7,341.1 405.2,344.2 403.9,347.3 400.6,347.9M416.1,333.0 416.5,330.2 416.3,327.3 417.4,324.7 418.1,321.9 417.7,319.0 415.9,316.7 414.8,314.1 414.1,311.4M414.1,311.4 411.7,309.4 410.8,306.4 408.2,305.0 405.8,303.2 402.4,304.2 399.5,302.2 396.0,300.6 396.0,296.8M386.7,336.0 386.5,339.1 385.8,342.0 388.3,343.8 391.1,344.9 394.7,344.3 397.3,341.8 399.7,344.4 400.6,347.9M386.7,336.0 388.6,331.4 392.4,328.1 391.5,323.2 392.8,318.3 394.1,313.5 392.6,308.7 388.9,305.1 388.9,299.9M388.9,299.9 392.6,298.6 396.0,296.8M449.7,340.0 448.6,343.2 447.1,346.3 444.6,349.0 444.3,352.6 443.7,356.2 444.7,359.7 442.4,362.6 441.4,366.1M449.3,339.4 445.2,338.0 441.0,337.0 436.7,337.3 432.4,337.8 428.0,337.9 423.7,337.2 420.9,333.3 416.1,333.0M441.4,366.1 437.9,369.9 433.3,372.3 428.9,375.1 423.7,375.6 418.8,374.2 413.6,374.4 408.3,374.1 404.2,370.7M400.6,367.2 398.0,362.6 396.4,357.5 399.3,353.1 400.6,347.9M443.9,301.4 439.6,301.7 435.5,300.2 432.2,302.9 428.6,305.0 425.0,307.0 421.1,307.6 417.9,310.0 414.1,311.4M403.8,277.5 403.5,280.7 401.9,283.6 399.1,285.1 395.9,285.6 396.3,288.4 397.0,291.2 395.2,293.8 396.0,296.8M358.7,263.0 359.4,268.0 359.7,273.0 357.2,277.4 354.9,281.8 357.9,285.8 358.6,290.7 362.1,294.2 364.5,298.4M364.5,298.4 367.6,299.3 370.5,300.9 373.9,301.1 376.5,303.3 378.9,300.8 382.3,300.3 385.5,298.3 388.9,299.9M544.2,309.3 540.6,309.3 537.0,308.6 533.8,310.4 530.1,310.2 526.2,309.8 523.1,307.5 519.1,306.7 516.0,309.3M544.2,309.3 547.0,312.1 548.7,315.6 549.6,319.6 548.4,323.4 550.2,327.6 551.4,332.0 547.1,333.8 544.2,337.5M516.0,309.3 514.7,313.3 515.9,317.2 513.5,320.4 510.8,323.3 514.2,325.4 515.4,329.3 516.7,332.9 517.3,336.6M544.2,337.5 541.5,339.9M541.5,339.9 537.2,337.6 532.4,337.6 528.5,340.4 524.1,342.1M524.1,342.1 519.8,340.5 517.3,336.6M547.5,305.8 544.2,309.3M515.9,309.3 516.0,309.3M569.5,336.5 566.3,337.2 563.1,336.7 560.1,337.6 556.8,337.3 554.0,335.2 550.5,334.9 547.5,336.6 544.2,337.5M486.2,340.2 491.5,340.0 492.8,334.9 497.0,334.1 501.2,333.4 504.2,337.3 509.0,336.5 513.2,334.9 517.3,336.6M550.2,364.5 552.0,361.2 551.0,357.5 547.8,354.1 550.8,350.4 547.5,348.8 545.3,345.8 542.8,343.3 541.5,339.9M545.6,372.4 540.4,371.1 535.2,369.9 533.4,372.3 531.9,374.8 528.9,374.4 526.0,375.6M524.1,342.1 523.9,345.7 524.0,349.3 525.5,352.9 524.3,356.5 522.4,359.7 521.6,363.2 520.0,366.4 517.9,369.4M526.0,375.6 523.9,373.6 523.3,370.7 520.7,369.7 517.9,369.4M678.7,556.5 680.8,553.3 684.1,551.5 685.4,548.0 686.7,544.6M678.7,556.5 674.2,557.6 669.9,556.0 665.5,554.4 661.0,555.7M686.7,544.6 683.9,544.5 681.1,544.2 680.7,541.3 679.0,538.9 676.4,535.0 673.6,531.1M673.6,531.1 671.1,533.5 669.3,536.4 666.2,537.6 663.4,539.6 660.1,539.2 656.7,539.6 653.2,539.3 650.3,541.2M650.3,541.2 655.3,542.6 656.7,547.7 658.9,551.6 661.0,555.7M684.7,572.6 682.2,568.8 682.2,564.4 679.6,560.8 678.7,556.5M695.4,543.3 691.3,545.4 686.7,544.6M657.3,573.5 660.4,575.1 663.3,573.0 666.3,574.1 669.4,573.4 671.6,575.6 674.0,577.6 675.0,580.6 676.4,583.4M657.3,573.5 659.9,568.9 664.0,565.6 662.8,560.6 661.0,555.7M640.7,537.8 645.8,538.5 650.3,541.2M651.4,507.7 654.3,509.8 657.8,510.6 661.2,512.2 663.2,515.3 667.0,516.4 670.1,518.7 673.6,517.0 677.2,515.6M649.6,508.3 651.4,507.7M677.2,515.6 674.6,519.3 676.2,523.5 673.6,526.9 673.6,531.1M646.1,578.6 642.2,576.9 638.8,574.3 634.5,574.4 630.2,573.9M626.9,557.1 629.1,560.9 630.2,565.2 629.9,569.5 630.2,573.9M657.3,573.5 653.6,573.3 651.9,576.6 649.6,579.1 646.1,578.6M630.0,344.8 634.7,345.2 639.1,343.5 643.6,341.8 646.2,337.8M630.0,344.8 630.6,349.1 632.9,352.7 636.9,354.9 638.5,359.0 639.9,363.1 641.9,366.9 641.4,371.2 641.1,375.4M646.2,337.8 649.7,338.8 652.2,341.4 655.7,342.4 659.2,341.7 662.7,343.4 664.5,346.8 668.1,345.4 671.8,347.0M671.8,347.0 670.1,350.3 668.9,353.8 666.7,356.8 664.6,359.9 665.9,363.6 664.2,367.3 664.2,371.0 663.0,374.6M641.1,375.4 646.4,376.5 651.7,377.7 657.2,377.2 662.3,375.2M663.0,374.6 662.3,375.2M622.5,342.5 625.7,345.3 630.0,344.8M650.9,301.7 651.9,303.8M651.9,303.8 652.5,308.4 650.0,312.3 652.2,316.6 650.0,321.0 650.2,325.4 648.6,329.5 647.6,333.7 646.2,337.8M697.1,306.8 698.0,311.1 696.5,315.2 692.3,316.0 688.4,317.5 684.8,317.4 681.5,316.0 678.4,318.2 674.7,318.0M697.1,306.8 699.6,311.1 702.8,315.0 701.9,320.2 698.2,323.8 698.9,328.1 699.1,332.3 700.9,336.3 701.3,340.6M674.7,318.0 676.0,321.4 676.8,324.9 675.6,328.2 674.8,331.7 675.2,335.2 676.1,338.6 675.0,342.0 674.7,345.4M674.7,345.4 679.1,346.9 683.1,349.4 687.6,348.3 692.2,347.2M701.3,340.6 698.3,340.9 695.9,342.8 693.9,344.9 692.2,347.2M698.6,304.3 697.1,306.8M651.9,303.8 655.6,305.9 659.5,304.4 663.2,305.6 667.1,304.9 670.1,307.6 673.2,310.1 673.8,314.1 674.7,318.0M765.4,304.3 765.7,309.7 766.5,315.0 764.7,320.2 763.4,325.4 758.4,323.3 753.0,323.2 747.6,322.6 742.3,323.0 739.9,327.2 735.2,328.5 731.1,326.5 726.5,326.6 725.8,330.8 722.6,333.7 720.1,336.9 718.3,340.6M718.3,340.6 714.0,340.2 709.8,340.0 705.5,339.2 701.3,340.6M671.8,347.0 674.7,345.4M362.9,299.7 360.0,297.8 357.1,296.0 353.7,295.0 350.3,294.3 347.2,295.9 344.4,298.1 342.8,301.3 341.1,304.4M362.9,299.7 362.8,304.3 362.1,308.8 364.8,313.0 363.6,317.9 364.5,321.0 367.4,322.3 369.1,324.6 371.4,326.4 370.4,329.3 370.1,332.4 367.9,334.6 365.2,336.0M341.1,304.4 340.3,307.3 340.4,310.3 341.6,313.1 343.1,315.6 340.5,316.8 338.0,318.2 335.8,320.1 333.8,322.1 335.5,326.9 334.9,332.0 339.3,334.9 341.1,339.8M365.2,336.0 362.0,335.4 359.0,336.8 356.0,337.4 352.9,337.1 351.4,340.2 348.8,342.5 350.4,345.6 349.8,349.1M349.8,349.1 346.8,347.7 344.5,345.4 343.4,342.3 341.1,339.8M364.5,298.4 362.9,299.7M331.2,300.8 331.6,304.7 334.5,307.2 337.7,305.6 341.1,304.4M386.7,336.0 381.3,336.1 375.9,336.8 370.5,337.5 365.2,336.0M319.4,335.2 322.3,335.6 325.2,335.3 326.7,338.2 330.1,338.3 332.3,340.4 335.4,340.7 338.4,341.5 341.1,339.8M349.8,377.7 351.9,373.5 348.1,370.7 348.4,367.0 348.2,363.4 348.6,359.8 349.4,356.3 350.2,352.7 349.8,349.1M776.5,583.8 776.8,578.5 777.4,573.2 774.9,568.5 771.7,564.2M776.5,583.8 779.8,584.6 782.9,583.0 786.1,583.0 789.3,583.3 792.6,583.7 795.6,585.2 798.9,584.6 802.0,583.7M800.2,561.3 795.8,560.2 791.3,560.3 787.2,558.5 783.7,555.5M800.2,561.3 801.1,564.3 801.5,567.4 798.7,569.2 797.8,572.4 798.7,575.3 799.5,578.2 802.4,579.3 804.4,581.7M783.7,555.5 780.2,556.9 777.4,559.4 776.4,564.0 771.7,564.2M804.4,581.7 802.0,583.7M767.8,594.7 769.0,591.3 770.7,588.1 772.8,584.8 776.5,583.8M759.9,561.7 763.3,560.2 765.9,562.9 768.5,565.0 771.7,564.2M795.2,615.3 799.6,612.7 798.2,607.7 798.5,603.5 801.1,600.1 802.3,596.1 801.8,591.9 802.1,587.8 802.0,583.7M780.4,535.8 782.5,540.4 783.4,545.4 783.6,550.5 783.7,555.5M882.0,476.0 879.1,474.5 876.1,475.9 875.7,479.1 873.0,480.9 867.9,481.8 863.2,483.8M882.0,476.0 875.5,479.7 870.0,484.7 865.5,490.8 859.0,494.8 859.2,503.6 855.4,511.5 847.0,513.4 839.0,516.6 835.5,524.7 834.4,533.5 826.5,538.4 817.3,536.9 810.3,540.8 807.7,548.3 803.8,554.7 800.2,561.3M810.9,582.8 807.5,583.1 804.4,581.7M673.4,431.7 676.2,431.7 679.0,432.0 680.5,429.6 683.0,428.1 685.6,427.0 687.6,425.0 688.2,422.2 688.6,419.5M673.4,431.7 671.8,428.3 671.0,424.7 668.7,421.8 665.7,419.6 663.0,417.2 660.5,414.6 657.9,411.9 654.7,410.2M688.6,419.5 686.9,415.3 687.5,410.8 684.3,407.6 682.9,403.2M682.9,403.2 678.8,399.9 673.7,401.6 669.7,399.2 665.3,397.5M654.7,410.2 658.0,407.5 661.4,405.0 664.8,402.0 665.3,397.5M662.3,375.2 663.7,377.7 664.0,380.6 664.9,383.4 666.1,386.0 665.7,388.9 665.8,391.8 665.4,394.6 665.3,397.5M696.0,382.3 693.1,383.0 690.3,382.2 687.7,380.5 684.6,381.0 682.0,382.3 680.2,384.7 678.2,386.9 676.9,389.5 673.1,386.1 669.5,382.5 666.3,378.5 663.0,374.6M696.0,382.3 695.5,385.7 695.1,389.1 695.7,392.6 694.8,396.1 691.2,396.7 687.6,397.6 683.5,398.9 682.9,403.2M771.7,457.0 767.8,459.5 765.5,463.5 762.6,467.3 762.9,472.1 758.8,474.8 754.3,476.8 753.0,479.5 750.7,481.2 751.9,483.9 753.0,486.5M768.9,505.7 766.3,503.5 763.8,501.3 760.2,501.3 757.5,499.0 756.2,495.8 756.0,492.5 754.1,489.7 753.0,486.5M882.0,476.0 896.3,458.5 918.9,457.8 939.5,449.1 947.5,428.2 971.6,433.9 986.7,414.2 999.9,397.9 1015.3,383.8 1032.1,371.3 1049.1,359.1 1070.1,358.5 1090.3,352.6 1106.5,339.5 1121.1,324.8 1142.0,321.7 1160.3,311.4M810.0,431.2 833.4,414.6 852.6,435.8 874.3,432.8 895.5,437.9 913.3,423.1 936.4,421.2 958.6,419.5 980.3,424.9 1001.4,413.3 1016.8,394.9 1026.1,373.0 1031.1,349.8 1051.3,337.6 1074.9,338.1 1094.8,325.9 1118.1,324.5M810.0,431.2 807.5,433.8 804.8,436.3 801.8,438.2 798.6,439.9 800.5,443.3 799.7,447.2 800.9,451.3 797.7,454.2 794.4,453.3 791.1,452.1 787.9,449.9 784.2,451.3 781.1,453.7 779.3,457.2 775.5,456.4 771.7,457.0M1160.3,311.4 1157.0,310.5 1153.6,310.4 1151.6,307.0 1147.6,307.2 1144.2,306.5 1141.4,304.4 1138.1,303.6 1134.7,303.4 1132.6,306.3 1130.3,309.0 1127.7,312.0 1123.7,311.8 1123.5,316.1 1119.6,317.6 1118.8,321.0 1118.1,324.5M1160.3,311.4 1169.5,308.5 1178.7,306.1 1185.8,299.5 1194.6,295.4 1202.8,290.5 1209.6,283.8 1217.2,277.4 1226.9,275.9 1236.7,279.8 1246.9,282.1 1257.7,282.9 1267.5,278.4 1277.3,273.3 1281.1,263.0 1292.4,261.7 1298.5,252.0M601.1,410.8 600.6,407.2 601.9,403.8M601.1,410.8 603.6,414.4 604.3,418.6 606.4,422.4 610.0,424.9M601.9,403.8 604.7,401.5 606.8,398.5 610.3,397.7 613.9,397.2 615.4,394.0 617.0,390.8 619.2,387.8 622.7,386.7M610.0,424.9 611.1,422.2 612.7,419.8 614.7,417.7 617.4,416.5 619.6,418.4 622.0,419.7 624.9,420.2 627.0,422.3 629.8,418.3 634.6,417.3 637.1,413.3 637.5,408.7M637.5,408.7 635.9,406.3 634.8,403.7 634.9,400.7 633.6,398.1 632.6,395.1 633.9,392.1 632.2,389.6 630.1,387.4M630.1,387.4 626.6,385.3 622.7,386.7M580.0,413.9 582.8,413.2 585.8,413.1 588.1,411.4 590.0,409.2 592.4,411.1 595.4,411.3 598.1,409.5 601.1,410.8M589.9,389.0 593.4,392.6 594.8,397.4 598.3,400.6 601.9,403.8M604.7,370.6 606.8,372.9 609.7,374.0 611.4,376.6 614.2,378.1 617.5,378.6 619.7,381.2 622.3,383.3 622.7,386.7M641.3,411.0 637.5,408.7M641.3,411.0 644.6,410.3 648.0,410.4 651.4,410.0 654.7,410.2M641.1,375.4 640.6,379.9 637.5,383.2 633.4,384.6 630.1,387.4M572.0,468.1 573.9,465.3 573.4,462.1 576.0,460.1 577.0,457.0 579.2,454.7 581.3,452.4 581.8,449.3 582.8,446.3M572.0,468.1 576.1,467.6 579.4,470.1 582.1,472.9 584.1,476.2 585.2,480.1 585.0,484.1 587.2,487.6 591.1,489.1M591.1,489.1 594.3,488.0 597.0,485.9 601.1,485.9 602.6,482.1 603.3,478.4 605.1,475.1 608.3,473.2 612.0,472.4M590.7,445.9 586.7,445.3 582.8,446.3M558.4,434.5 556.7,437.5 554.2,439.8 550.8,440.8 548.6,443.6 545.1,443.7 542.1,445.7 538.7,445.8 535.3,445.2M535.3,445.2 534.5,449.3 535.4,453.5M575.2,438.5 577.4,440.1 579.5,441.9 581.0,444.3 582.8,446.3M582.5,511.5 585.6,510.1 588.8,508.9M550.1,497.9 554.9,497.6 558.7,500.8 561.7,504.2 565.3,507.0 570.0,506.5 573.9,509.2 577.5,513.2 582.5,511.5M588.8,508.9 587.9,503.9 589.3,498.9 591.0,494.2 591.1,489.1M609.5,430.8 607.1,427.6 610.0,424.9M609.5,430.8 608.8,434.3 605.9,436.4 602.8,437.9 599.3,437.4 598.2,440.5 595.1,441.7 592.4,443.3 590.7,445.9M975.9,969.5 976.5,972.5 974.4,975.0 976.9,976.5 979.0,978.4 983.6,979.7 987.7,982.1M975.9,969.5 973.8,971.5 971.0,972.3 968.8,974.0 966.1,974.9 963.3,975.7 960.4,975.6 958.1,977.3 955.6,978.7M955.6,978.7 953.3,982.3 951.4,986.2 952.1,990.8 949.3,994.5M977.3,957.6 978.0,960.6 978.4,963.7 978.1,967.0 975.9,969.5M1008.8,966.8 1007.3,970.0 1005.8,973.2 1003.0,975.6 1001.5,978.9 997.9,979.9 994.3,979.2 990.6,979.8 987.7,982.1M943.3,949.4 940.2,951.3 938.7,954.6 935.3,955.4 932.4,957.5 930.0,959.9 927.4,962.0 923.8,963.0 922.4,966.5M943.3,949.4 946.6,952.2 947.2,956.4 950.4,959.2 951.3,963.2 954.2,966.5 956.5,970.1 957.3,974.5 955.6,978.7M921.9,968.9 922.4,966.5M921.9,968.9 925.2,971.2 924.0,974.9 927.4,975.5 929.4,978.3 929.6,981.5 930.5,984.6 929.3,987.5 927.7,990.2 930.8,990.6 933.7,991.6 935.3,994.3 937.7,996.3 940.8,996.8 943.9,997.7 947.6,997.8 949.3,994.5M915.5,975.6 918.3,971.8 921.9,968.9M929.9,916.1 930.2,919.1 928.9,921.8 927.9,925.1 930.5,927.3 932.2,929.7 932.8,932.6 933.9,935.4 933.2,938.3M929.9,916.1 933.0,915.9 936.0,916.6 939.0,915.7 941.6,914.1 944.3,912.6 945.8,909.8 949.1,909.4 950.7,906.4M950.7,906.4 950.4,909.3 950.5,912.3 950.4,915.2 950.8,918.1 953.1,920.2 956.0,921.0 957.8,923.6 960.9,924.2M960.9,924.2 959.8,927.8 958.4,931.2 957.4,934.9 954.9,937.8 952.2,940.8 951.0,944.6 948.0,947.4 943.9,947.8M933.2,938.3 936.3,940.1 939.1,942.5 941.3,945.3 943.8,947.9M943.8,947.9 943.9,947.8M950.9,905.1 950.7,906.4M973.7,925.9 970.1,925.3 967.6,922.6 964.6,924.8 960.9,924.2M975.7,955.3 972.8,953.6 972.5,950.2 970.4,947.5 971.8,944.3 968.8,944.7 966.1,945.9 963.8,948.1 960.7,948.1 956.3,948.9 952.2,950.8 948.7,947.5 943.9,947.8M922.4,966.5 920.9,963.5 918.8,960.8 917.5,957.6 917.5,954.1 914.2,953.4 910.7,953.6 908.4,950.9 905.0,949.7M943.3,949.4 943.8,947.9M905.0,949.7 906.1,946.3 909.0,944.1 910.2,940.9 911.8,937.9M911.8,937.9 913.9,940.1 916.4,941.8 919.4,941.3 922.4,941.1 925.0,940.2 927.7,939.3 930.1,937.0 933.2,938.3M915.3,720.2 913.7,716.3 916.0,712.8 915.6,709.0 914.1,705.6M915.3,720.2 917.0,722.9 918.9,725.4 922.1,726.3 924.5,728.5 927.6,727.8 930.7,727.5 934.0,727.5 936.9,728.8M914.1,705.6 915.8,700.3 915.7,694.8 917.3,689.6 918.9,684.4 918.8,678.5 920.0,672.8 922.3,666.5 928.9,665.2 933.8,662.1 938.7,659.0 942.0,654.3 944.7,649.2 950.2,648.1 955.6,646.3 960.8,642.9 966.7,644.8M936.9,728.8 938.0,722.2 943.8,718.7 949.1,715.8 954.3,712.6 958.7,708.4 961.4,702.9 963.1,697.1 965.3,691.5 966.3,685.6 968.9,680.2 972.7,674.4 969.4,668.3 968.7,662.3 966.4,656.7 964.9,650.7 966.7,644.8M895.2,735.3 898.4,734.9 901.5,734.4M901.5,734.4 903.9,729.9 906.8,725.7 910.7,722.4 915.3,720.2M884.7,701.1 888.3,698.4 891.5,695.1 896.2,694.7 900.4,697.0 900.3,699.8 900.0,702.5 902.4,703.8 904.8,705.2 909.4,706.4 914.1,705.6M940.4,737.7 937.9,733.5 936.9,728.8M926.4,753.7 923.0,750.6 922.9,746.0 918.7,745.0 915.2,742.4 910.4,741.9 905.6,743.1 903.0,739.0 901.5,734.4M1004.0,583.9 1001.0,587.9 998.5,592.3 993.6,593.7 988.7,594.7 986.5,599.1 986.5,603.9 985.4,608.8 981.8,612.1 977.7,615.3 972.9,617.1 969.9,621.3 966.1,624.7 965.1,630.0 967.7,634.7 965.4,639.6 966.7,644.8M719.4,798.0 717.0,801.2 718.8,804.7 716.4,807.2 714.7,810.1 711.1,809.6 708.0,811.3 705.4,813.5 702.8,815.6M719.4,798.0 723.7,798.9 728.2,798.2 732.1,800.3 736.3,801.7M736.3,801.7 737.2,807.1 741.3,810.7 742.5,815.9 740.9,821.0M702.8,815.6 704.5,817.8 706.8,819.5 708.0,822.1 710.5,823.6 712.1,826.1 713.0,829.0 716.3,828.9 718.4,831.4M718.4,831.4 722.2,832.3 725.3,834.6 728.9,833.1 731.7,830.5M731.7,830.5 733.7,827.8 736.2,825.7 738.6,823.4 740.9,821.0M711.7,774.1 711.0,777.4 710.6,780.7 712.8,783.4 713.7,786.7 715.4,789.6 715.2,793.0 716.9,795.8 719.4,798.0M702.1,815.6 702.8,815.6M748.4,788.6 747.8,791.8 745.4,793.8 742.3,793.6 739.5,792.5 737.2,796.8 736.3,801.7M766.8,824.1 763.7,822.5 760.6,820.8 757.2,821.4 753.9,822.4 750.9,820.2 747.4,821.3 744.1,821.6 740.9,821.0M710.6,849.0 710.3,843.7 714.1,840.0 715.7,835.4 718.4,831.4M744.2,856.9 740.8,854.7 737.6,852.0 735.8,847.8 731.3,846.9 733.4,842.8 731.5,838.7 733.3,834.6 731.7,830.5M763.1,853.8 765.5,851.0 768.1,848.4M891.0,754.8 894.2,756.7 894.0,760.4 894.6,763.8 897.4,765.8 899.9,768.0 903.2,768.3 905.7,770.3 908.9,771.2M871.9,764.7 874.8,767.6 876.4,771.3 878.7,774.8 882.3,776.8 884.9,780.1 888.0,782.8 888.8,786.9 889.8,790.9M889.8,790.9 892.2,788.1 895.7,786.9 898.6,784.6 902.1,783.7 903.0,779.9 906.3,777.9 909.1,775.1 908.9,771.2M949.5,779.5 946.6,780.9 943.4,781.1 940.9,783.2 937.8,784.2 936.8,787.5 934.6,790.1 931.2,790.8 928.1,792.2M926.3,754.4 926.8,758.3 923.2,760.0 922.0,763.0 920.8,765.9 918.8,768.8 915.3,769.3 912.4,771.0 909.1,771.2M928.1,792.2 924.1,790.6 919.9,790.5 919.7,786.2 917.7,782.5 914.7,780.2 911.3,778.4 910.5,774.7 909.1,771.2M909.1,771.2 908.9,771.2M960.0,867.3 956.1,865.7 952.6,863.3 948.8,865.4 944.4,865.6 943.5,861.2 941.7,857.2 937.8,854.9 933.3,854.5M941.7,888.3 937.8,887.7 934.0,886.6 930.0,885.8 926.9,883.1M926.9,883.1 927.3,879.1 925.4,875.6 926.7,871.9 928.1,868.4 930.7,865.4 930.8,861.4 930.7,857.4 933.3,854.5M824.1,972.4 825.4,967.7 826.7,963.0 830.3,959.5 832.1,954.9M850.7,1022.0 852.0,1018.2 853.6,1014.5 852.4,1009.9 847.8,1008.8 844.8,1005.9 846.0,1001.9 846.9,998.5 848.2,995.2 849.8,990.8 851.0,986.3 855.5,984.9 859.6,982.6 860.0,977.9 858.0,973.6 854.9,970.1 850.6,968.3M850.6,968.3 847.5,964.1 842.7,961.9 838.8,958.6 835.3,955.0M832.1,954.9 835.3,955.0M850.6,968.3 851.8,965.1 855.1,964.5 858.1,963.1 858.9,959.9 862.0,960.4 865.0,961.0 868.5,960.7 870.5,958.0M835.3,955.0 838.4,954.4 841.4,955.4 843.2,952.7 846.4,951.9 849.6,950.6 850.3,947.3 849.7,944.2 850.9,941.2M850.9,941.2 855.4,942.9 859.7,944.9 864.6,945.2 869.3,944.1M869.3,944.1 868.5,947.7 869.7,951.1 869.7,954.6 870.5,958.0M896.2,975.6 895.7,972.2 894.7,968.9 894.6,965.2 892.0,962.6M876.4,1004.1 874.1,1002.1 871.8,1000.1 870.3,997.4 868.7,994.8 869.8,991.8 868.6,988.7 868.1,985.8 868.0,982.7 867.7,979.3 866.3,976.1 864.4,973.2 863.3,970.0 865.7,967.5 868.7,965.8 871.3,963.4 872.7,960.2M872.7,960.2 877.3,962.1 882.3,962.3 887.2,961.7 892.0,962.6M872.7,960.2 870.5,958.0M905.0,949.7 901.3,950.4M892.0,962.6 892.9,958.2 893.2,953.8 896.9,951.3 901.3,950.4M929.9,916.1 926.4,914.6 922.7,913.8 920.1,910.3 915.8,910.8M911.8,937.9 908.9,935.7 906.7,932.7 906.0,929.0 907.6,925.5M907.6,925.5 907.8,921.0 911.2,917.9 913.7,914.4 915.8,910.8M926.9,883.1 922.3,883.5 918.4,886.1M918.4,886.1 918.4,891.0 919.9,895.7 916.0,898.9 911.1,899.9M915.8,910.8 914.3,908.2 912.8,905.6 912.6,902.6 911.1,899.9M800.5,965.9 803.4,963.7 805.6,960.9 805.6,957.3 806.4,953.8 809.1,951.7 810.7,948.6 812.4,945.7 814.9,943.4M780.8,950.8 783.3,948.8 786.0,946.9 787.3,944.0 789.1,941.3 791.3,938.8 793.0,935.9 795.9,934.3 799.2,933.6M799.2,933.6 804.5,932.7 808.3,936.5 812.9,938.7 814.9,943.4M832.1,954.9 827.6,953.1 826.4,948.4 821.9,947.2 819.1,943.5M845.4,925.9 841.2,926.7 837.0,927.8 832.8,926.6 828.4,926.4M850.9,941.2 849.0,937.6 847.9,933.6 847.4,929.5 845.4,925.9M828.4,926.4 825.2,926.6 822.0,926.9 822.6,930.3 820.7,933.2 821.7,936.2 823.3,938.9 822.5,942.4 819.1,943.5M814.9,943.4 819.1,943.5M822.3,838.7 825.7,841.0 829.7,841.5 831.9,845.2 836.0,846.5 838.0,850.0 838.8,853.9 839.4,857.9 839.6,861.8M805.6,839.6 809.7,841.7 814.2,843.1 819.0,842.4 822.3,838.7M797.3,853.7 799.4,857.3 799.5,861.4 800.7,865.2 802.1,869.0M839.6,861.8 839.5,862.3M839.5,862.3 834.7,864.0 829.9,862.0 825.1,862.1 820.4,863.4 815.4,864.9 812.1,868.9 807.1,868.5 802.1,869.0M769.7,877.8 773.3,880.1 777.6,879.2 781.6,878.3 784.9,875.9 788.9,875.8 792.0,878.5 795.7,879.6 799.3,880.9M802.1,869.0 802.4,872.2 801.0,875.0 800.2,878.0 799.3,880.9M822.3,838.7 826.3,835.1 831.0,832.2 831.7,829.5 833.8,827.5 833.8,824.7 834.7,822.1M805.7,802.5 808.7,802.0 811.6,803.2 814.5,804.2 817.4,804.8 820.6,805.8 823.2,807.9 826.2,806.4 829.4,805.6M834.7,822.1 832.3,818.4 830.4,814.4 829.0,810.1 829.4,805.6M835.1,778.4 834.6,782.4 831.1,784.3 829.9,787.7 828.1,790.8 828.9,794.5 831.4,797.5 832.3,801.4 830.2,804.8M829.4,805.6 830.2,804.8M855.3,776.4 855.5,779.4 856.7,782.0 855.8,784.9 856.2,787.8 857.2,790.6 857.4,793.5 859.4,795.6 860.5,798.4M830.2,804.8 834.2,804.9 837.8,803.1 841.6,802.4 845.3,801.2 849.1,800.6 852.8,799.4 856.6,798.0 860.5,798.4M767.4,931.4 767.0,926.7 771.0,924.1 774.2,921.6 778.0,920.0M758.9,898.5 763.6,899.5 766.6,903.2 771.5,903.3 774.9,906.9M774.9,906.9 775.9,910.1 776.5,913.4 777.6,916.6 778.0,920.0M799.2,933.6 797.5,928.4M778.0,920.0 782.3,923.3 787.0,926.1 792.5,926.3 797.5,928.4M728.1,1018.5 724.8,1016.9 721.3,1016.1 719.4,1013.1 718.6,1009.6 717.9,1005.9 717.6,1002.3 714.8,999.5 711.0,998.9 710.0,995.6 709.4,992.2 708.4,988.8 708.0,985.3 710.2,982.3 713.5,980.5 715.3,977.1 715.0,973.3M728.1,1018.5 729.6,1015.4 729.1,1012.1 730.2,1009.0 732.3,1006.5 731.9,1003.3 732.1,1000.2 730.0,997.1 731.6,993.8 733.1,991.1 734.3,988.2 736.0,985.6 737.3,982.7 737.0,978.9 740.5,977.4 743.7,975.8 744.0,972.3M715.0,973.3 718.0,971.4 721.0,969.6 722.7,966.1 721.2,962.5M721.2,962.5 725.5,963.1 729.9,962.8 734.7,961.8 736.8,957.4M744.0,972.3 741.3,969.1 739.4,965.3 740.4,960.6 736.8,957.4M697.7,971.9 701.8,973.8 706.2,974.5 710.5,972.7 715.0,973.3M764.7,974.8 759.4,974.0 754.2,975.0 748.8,974.9 744.0,972.3M701.7,942.8 705.0,945.1 709.0,945.8 713.4,944.2 716.6,947.6 716.6,951.7 716.5,955.8 717.9,959.8 721.2,962.5M740.0,950.7 739.2,954.4 736.8,957.4M536.6,974.2 531.8,974.6 527.0,974.5 522.0,974.4 517.9,977.5M489.2,1061.3 494.1,1057.9 496.5,1052.4 500.9,1048.0 501.2,1041.9 501.6,1035.5 497.9,1030.2 503.6,1026.0 502.3,1019.0 498.6,1013.5 498.8,1006.9 504.7,1003.5 506.3,996.8 507.5,990.2 513.9,988.2 517.4,983.4 517.9,977.5M245.1,853.0 246.0,856.6 247.8,859.8 252.1,859.5 254.3,863.2 256.7,866.1 256.6,869.8 257.8,873.5 261.4,874.9M245.1,853.0 242.0,853.3 239.0,853.9 235.7,853.5 233.1,855.7 231.1,858.3 227.9,859.2 226.4,862.0 225.0,864.8M225.0,864.8 227.2,869.2 227.1,874.2 227.5,879.6 232.0,882.5M232.0,882.5 235.5,883.0 238.7,884.4 241.5,882.3 243.3,879.3 246.3,879.9 248.8,881.5 251.8,882.0 254.7,882.2M261.4,874.9 257.4,877.9 254.7,882.2M221.5,902.1 225.0,901.8 225.9,898.3 227.1,895.7 229.2,893.6 229.9,890.8 230.5,888.0 231.0,885.2 232.0,882.5M255.4,909.8 256.8,906.4 257.7,902.9 254.4,900.1 255.6,896.0 254.6,892.6 255.0,889.1 255.1,885.6 254.7,882.2M183.4,855.9 186.1,852.8 188.7,849.7 192.8,850.0 196.8,850.8 199.6,853.2 201.7,856.3 205.4,856.9 208.5,858.9M183.4,855.9 183.3,859.8 186.0,862.6 183.4,865.1 180.9,867.7 179.0,870.0 176.4,871.8 174.5,874.1 172.6,876.5M208.5,858.9 205.1,861.9 202.2,865.5 200.3,869.7 198.3,873.8 197.2,878.7 194.5,882.8 194.3,885.6 193.7,888.4 195.0,891.1 198.0,892.0M172.6,876.5 176.5,874.5 180.7,875.0 185.6,875.4 187.3,880.0 190.3,883.1 189.7,887.4 192.1,890.6 195.5,892.6M195.5,892.6 198.0,892.0M219.4,902.4 216.4,901.7 213.3,901.5 210.1,901.4 207.6,899.4 204.7,898.1 203.0,895.4 200.0,894.4 198.0,892.0M208.7,858.8 208.5,858.9M208.7,858.8 213.4,858.4 217.0,861.4 221.2,862.6 225.0,864.8M166.0,877.9 169.1,876.2 172.6,876.5M181.2,911.8 182.6,908.7 182.0,905.4 182.9,902.2 185.3,899.9 186.7,896.3 187.8,892.6 191.7,892.0 195.5,892.6M270.1,518.4 267.1,521.3 263.0,521.2 259.4,520.0 255.6,519.3 251.9,519.4 248.3,520.5 244.4,521.5 242.3,524.9M270.1,518.4 273.1,516.8 274.4,513.7 275.8,510.6 278.9,509.4 276.9,506.3 278.4,503.0 277.9,499.7 279.3,496.7 280.8,493.6 281.4,490.2 279.7,487.2 277.1,484.9 277.8,481.3 276.3,478.0 274.0,474.9 270.1,475.1M270.1,475.1 267.0,477.9 263.0,477.4 259.3,478.0 255.6,477.6 251.5,478.0 247.7,479.8 244.0,478.1 241.1,475.1M235.5,509.5 236.0,514.0 236.2,518.4 238.6,522.2 242.3,524.9M235.5,509.5 232.4,505.4 229.3,501.2 231.9,496.6 233.8,491.7 236.4,487.6 235.4,482.7 238.4,479.2 240.8,475.3M240.8,475.3 241.1,475.1M294.9,525.7 291.5,526.1 288.2,527.0 284.9,525.4 281.4,525.8 279.8,522.5 276.7,520.6 273.2,520.1 270.1,518.4M287.2,464.1 284.3,464.4 281.4,464.6 280.6,467.5 278.9,470.0 274.4,472.4 270.1,475.1M241.1,445.0 243.2,448.7 246.2,451.7 244.9,455.9 246.4,460.1 246.4,464.2 245.4,468.2 242.5,471.2 241.1,475.1M193.7,495.6 196.5,493.4 199.6,491.9 203.1,491.8 206.6,491.3 210.3,492.7 214.3,493.3 215.9,489.4 219.6,487.5 222.0,490.1 222.7,493.6 225.5,495.8 226.5,499.3 227.5,502.9 230.9,504.5 232.7,507.5 235.5,509.5M189.4,483.4 190.6,486.7 193.5,488.8 193.3,492.2 193.7,495.6M201.9,468.8 207.0,468.6 211.8,470.2 216.7,468.9 221.8,469.6 225.9,472.6 230.8,474.1 235.7,475.7 240.8,475.3M110.7,621.9 114.8,620.2 119.0,621.3 122.6,618.8 126.9,618.6M126.5,544.6 131.6,544.8 136.3,546.9 141.2,548.4 146.2,548.9M161.7,540.8 156.8,540.1 153.4,543.9 149.5,545.9 146.2,548.9M146.2,548.9 147.2,551.6 148.2,554.3 146.5,556.7 144.4,558.6 148.0,562.4 148.7,567.5 150.7,572.1 153.1,576.4 151.7,581.2 150.9,586.2M193.7,495.6 191.4,497.5 190.3,500.4 187.7,501.8 185.0,503.1 184.3,506.2 182.0,508.4 181.1,511.7 183.1,514.4 184.0,517.2 186.1,519.3 185.6,522.3 187.2,524.9 186.5,527.7 186.7,530.6 186.4,533.5 185.0,536.0M242.3,524.9 241.3,528.0 240.8,531.1 239.1,533.8 236.7,536.0M236.7,536.0 233.3,535.7 230.4,533.7 226.9,533.5 224.1,531.4 220.9,532.8 217.8,534.7 214.3,534.3 210.9,533.2 207.6,532.9 204.3,532.5 201.4,534.5 197.9,534.2 194.5,533.0 191.0,532.0 188.8,535.1 185.0,536.0M161.7,540.8 166.2,539.0 170.8,537.3 176.0,537.0 180.2,540.0M150.9,586.2 152.7,588.7 153.0,591.8 155.0,594.4 158.2,594.9 160.5,596.8 163.3,597.8 166.3,597.5 169.2,597.4M169.2,597.4 172.2,593.9 176.5,592.3 179.5,589.0 183.0,586.2 187.2,583.0 187.1,577.6 192.0,577.0 195.9,574.1M195.9,574.1 192.3,570.3 190.3,565.5 191.3,560.4 191.8,555.3 187.7,552.5 185.4,548.1 184.4,543.1 180.2,540.0M185.0,536.0 182.4,537.7 180.2,540.0M376.3,603.6 380.6,604.1 383.6,607.3 385.4,610.9 386.4,614.9 384.6,618.5 383.7,622.3 381.3,625.5 377.5,627.2M376.3,603.6 371.3,603.0 366.7,601.0 363.6,597.1 360.6,593.2 355.9,592.2 351.4,590.8 347.6,587.6 342.8,586.9M377.5,627.2 375.8,629.6 373.0,630.7 370.2,631.4 367.6,632.9 365.3,634.6 363.2,636.5 360.8,638.1 358.6,639.9 354.6,639.8 352.6,643.2 350.7,646.4 347.0,647.2 343.8,645.8 341.0,643.8 337.8,642.2 335.8,639.4M342.8,586.9 342.4,589.9 341.2,592.7 342.5,595.8 340.8,598.7 340.0,601.9 337.3,603.9 333.6,603.4 331.9,606.8 328.7,607.9 326.6,610.7 327.3,613.9 326.7,617.2 324.8,620.0 324.3,623.4 320.9,623.4 317.7,624.5M335.8,639.4 333.0,637.8 330.0,638.8 327.1,636.9 324.2,638.6 323.0,635.6 323.3,632.5 320.6,630.8 318.9,628.2M318.9,628.2 317.7,624.5M393.6,582.4 391.9,585.4 389.0,587.5 387.4,590.9 383.9,592.1 380.8,595.0 382.0,599.1 378.0,600.0 376.3,603.6M333.5,556.2 335.1,560.0 336.7,563.8 337.3,567.9 336.7,572.0 337.7,576.2 341.1,578.9 343.5,582.5 342.8,586.9M307.2,553.1 306.0,555.8 303.3,557.1 300.4,558.6 300.2,561.8 298.9,564.4 296.3,565.8 294.3,567.8 291.9,569.4M294.0,605.7 295.1,601.0 296.3,596.4 298.2,591.9 299.0,587.2 297.5,582.4 297.4,577.5 295.4,572.9 291.9,569.4M294.0,605.7 297.4,607.5 300.0,610.3 303.2,612.3 306.3,614.6 311.1,614.1 315.7,615.2 318.1,619.5 317.7,624.5M470.9,756.5 468.5,758.8 467.8,762.1 466.3,765.1 463.2,766.4 460.1,766.9 457.0,766.0 453.8,765.7 450.7,766.6M470.9,756.5 468.9,753.6 466.4,751.2 463.9,748.8 461.4,746.3 458.3,744.7 455.5,742.7 454.0,739.1 450.3,738.0 447.4,735.8 446.4,732.2 444.6,729.3 442.6,726.5 439.5,724.6 436.8,722.1 436.3,718.4 434.7,715.1M450.7,766.6 448.7,764.2 445.6,764.0 442.7,764.0 439.8,764.1 439.2,761.2 436.9,759.3 435.1,757.2 433.5,754.8 431.6,757.6 428.6,759.1 425.9,760.9 422.9,762.2 420.0,760.7 417.0,759.4 414.3,757.4 412.6,754.5M434.7,715.1 433.3,717.6 432.5,720.4 430.7,722.7 430.6,725.7 428.5,728.0 425.8,729.7 424.3,732.8 425.6,735.9 426.5,739.3 423.7,741.4 422.8,744.2 420.4,746.1 418.1,747.9 415.8,749.6 413.8,751.8 412.6,754.5M547.8,858.7 547.0,856.0 546.0,853.3 546.8,850.5 545.8,847.7M547.8,858.7 552.3,858.1 556.3,860.2 558.0,864.8 562.8,866.0 567.2,867.1 571.7,867.6 575.1,864.6 579.0,862.3M545.8,847.7 549.8,850.6 554.2,848.3 554.8,843.9 557.9,840.7 560.5,837.7 561.1,833.7 564.8,832.8 568.6,831.9M568.6,831.9 567.6,835.0 568.7,838.1 572.4,837.4 574.4,840.6 579.0,843.3 584.3,843.9M579.0,862.3 580.9,857.8 581.4,853.0 582.9,848.4 584.3,843.9M585.9,874.9 583.4,872.1 582.7,868.4 581.3,865.1 579.0,862.3M546.3,862.3 547.8,858.7M612.1,853.7 609.2,853.6 606.6,852.3 603.6,850.5 604.4,847.1 602.0,845.5 599.9,843.5 597.9,840.4 600.4,837.7M600.4,837.7 595.5,836.4 592.2,840.2 588.8,843.3 584.3,843.9M457.5,905.1 456.5,908.0 456.1,911.0 454.4,913.9 451.0,914.1 451.2,917.1 449.5,919.5 447.4,921.5 446.9,924.4M446.9,924.4 446.7,924.5M457.5,905.1 453.6,901.5 448.9,899.2 448.6,893.7 445.2,889.5 440.6,886.7 436.1,883.9 436.2,880.8 437.3,878.0 435.7,875.3 433.0,873.7M426.3,872.6 428.6,872.0M433.0,873.7 428.6,872.0M631.5,822.5 627.5,823.0 623.6,822.7 620.5,820.0 616.7,818.8M600.4,837.7 600.6,834.1 603.3,831.8 602.9,828.3 604.7,825.3M616.7,818.8 614.3,821.4 610.9,822.4 607.6,823.3 604.7,825.3M654.4,686.7 650.3,689.5 648.3,694.0 644.4,691.1 639.7,689.8 636.2,688.4 632.9,686.6 629.7,684.5 626.1,683.4M626.1,683.4 623.7,687.1 619.6,688.5M619.6,688.5 618.1,692.9 615.8,696.8M650.3,731.2 645.7,732.3 641.0,731.6 636.9,729.3 633.0,726.9M633.0,726.9 631.0,725.0 629.3,722.8 626.6,722.0 624.0,721.2 625.5,716.1 626.2,710.8 623.5,707.4 620.6,704.2 617.5,701.0 615.8,696.8M537.4,511.5 534.1,514.8 532.8,519.2 534.5,523.5 534.5,528.0 539.5,527.0 543.9,529.6 544.2,534.7 547.7,538.4M582.5,511.5 582.2,515.6 578.7,517.6 577.8,521.1 576.2,524.4 574.7,527.7 573.7,531.2 570.8,533.6 568.8,536.7M547.7,538.4 549.4,535.7 551.5,533.3 554.7,533.0 557.9,533.3 560.9,532.9 563.8,533.4 566.0,535.5 568.8,536.7M621.7,614.5 625.1,617.2 625.5,621.4 623.8,625.0 623.4,629.0 624.0,632.7 623.0,636.3 621.9,640.0 623.5,643.5M599.8,640.0 602.9,639.5 605.8,640.4 608.7,641.9 611.8,640.9 615.2,641.4 617.2,644.3 620.4,643.8 623.5,643.5M599.8,640.0 602.1,636.4 601.6,632.3 601.0,628.3 602.2,624.4 600.9,620.7 599.4,617.1 599.9,612.8 597.0,609.6M621.7,614.5 618.8,613.3 615.8,612.3 612.5,611.8 609.4,612.9 606.8,611.0 603.6,610.8 601.0,608.5 597.7,608.9M597.7,608.9 597.0,609.6M156.5,728.4 158.0,731.0 157.6,734.0 160.6,733.9 163.1,735.4M194.4,713.1 195.6,715.8 195.5,718.7 195.7,721.5 195.7,724.3 194.3,726.8 192.6,729.1 192.4,732.1 190.8,734.5M194.4,713.1 191.3,710.6 187.6,709.2 183.4,707.8 179.9,710.4 176.0,710.3 172.5,708.9 169.2,706.9 166.3,704.6M190.8,734.5 187.7,736.8 183.8,737.3 181.0,734.3 177.0,734.0 173.4,732.5 170.0,734.4 166.6,735.4 163.1,735.4M126.4,745.5 127.5,749.1M163.1,735.4 159.9,738.2 157.0,741.4 158.9,745.3 159.7,749.6 156.6,752.5 156.0,756.8 157.8,760.4 159.4,764.1M159.4,764.1 154.5,765.3 149.6,765.7M149.6,765.7 147.6,762.7 144.5,760.9 143.0,757.6 139.9,755.7 137.0,753.3 134.8,750.3 131.0,750.4 127.5,749.1M136.1,688.2 137.8,684.0 141.2,681.1 140.5,676.4 143.4,672.7M136.1,688.2 132.9,685.9 129.4,683.9 124.6,683.2 123.8,678.3 119.6,680.6 115.7,678.0 111.8,679.2 108.2,681.1M143.4,672.7 142.1,669.5 138.8,668.6 135.6,667.6 134.1,664.6 131.7,662.5 130.9,659.3 128.6,657.2 127.3,654.3M108.2,681.1 109.4,677.8 112.0,675.5 114.7,673.4 116.8,670.8 117.9,667.5 119.4,664.3 118.1,660.9 117.7,657.4M117.7,657.4 120.7,656.5 121.7,653.6 124.6,653.1 127.3,654.3M138.5,694.4 136.6,691.5 136.1,688.2M159.8,667.2 156.1,670.0 151.5,669.6 147.4,670.9 143.4,672.7M175.2,674.4 172.4,670.9 168.2,669.4 163.7,669.2 159.8,667.2M175.2,674.4 172.8,677.1 172.5,680.7 171.5,684.0 170.4,687.3 168.5,690.4 165.5,692.5 164.0,695.9 164.3,699.6M104.2,683.2 108.2,681.1M153.7,634.6 149.8,635.9 146.2,638.2 143.2,635.2 139.6,633.0M139.6,633.0 138.4,636.2 136.8,639.3 132.7,638.4 130.7,642.1 131.8,645.4 130.1,648.5 129.0,651.6 127.3,654.3M159.8,667.2 159.3,663.1 159.1,658.9 161.1,653.8 156.5,650.9 154.0,647.2 151.7,643.3 151.0,638.5 153.7,634.6M100.9,644.9 105.2,648.1 108.5,652.2 113.1,654.7 117.7,657.4M139.6,633.0 136.8,629.0 134.8,624.5 132.0,619.9 126.9,618.6M535.1,405.8 531.2,405.6 528.5,402.6M535.1,405.8 533.3,408.0 532.5,410.7 532.3,413.5 531.2,416.1 530.3,418.7 528.5,420.9 525.7,422.0 524.8,425.0 526.6,427.3 528.7,429.5 531.1,431.4 533.9,432.5 534.7,435.4 535.3,438.4 535.9,441.5 534.7,444.4M528.5,402.6 525.6,404.7 522.9,407.1 519.8,409.0 516.1,409.3 512.4,409.8 509.3,411.7 505.2,414.8 502.1,410.7M534.7,444.4 530.3,445.0 525.9,445.0 521.8,443.2 517.5,442.5 514.3,439.0 512.8,434.6 509.8,434.7 507.3,436.2 505.1,434.3 504.1,431.5M504.1,431.5 501.9,429.6 500.6,427.0 500.5,424.2 499.8,421.4 501.2,416.1 502.1,410.7M543.0,404.6 539.2,406.2 535.1,405.8M526.0,375.6 527.0,379.0 526.2,382.4 525.2,385.8 526.0,389.2 525.4,392.7 526.1,396.1 527.4,399.3 528.5,402.6M535.3,445.2 534.7,444.4M489.8,446.4 492.0,441.5 496.0,438.0 498.7,436.0 501.9,437.0 503.0,434.2 504.1,431.5M486.7,367.5 489.1,369.5 491.7,371.2 494.3,372.8 497.0,374.2M486.7,367.5 485.1,372.7 481.5,376.7 480.1,382.0 476.6,386.1 474.1,387.4 471.2,387.2 469.1,389.1 466.2,389.5 464.0,387.5 461.0,387.6 458.2,387.6 455.5,387.2M497.0,374.2 495.6,378.5 494.3,382.8 491.0,386.2 490.8,391.0 493.5,394.6 495.2,398.8 496.6,403.1 498.1,407.3M498.1,407.3 493.6,408.9 489.2,410.5 485.2,413.2 481.4,416.0 477.3,413.6 472.7,412.4 468.3,410.4 463.8,409.0M463.8,409.0 459.2,407.6 456.0,404.0 454.6,399.5 454.7,394.8M455.5,387.2 457.1,391.2 454.7,394.8M481.8,345.3 481.2,348.6 482.4,351.8 481.2,354.7 479.4,357.5 482.3,359.2 485.0,361.1 484.7,364.6 486.7,367.5M517.9,369.4 514.8,370.1 512.9,372.6 511.8,375.8 508.6,376.9 505.8,375.0 503.5,372.5 500.3,373.6 497.0,374.2M441.4,366.1 445.3,365.6 448.5,367.9 449.7,371.3 451.8,374.4 452.1,378.1 455.2,380.4 455.8,383.8 455.5,387.2M502.1,410.7 498.1,407.3M459.0,433.2 461.1,430.3 463.6,427.6 461.1,424.8 460.9,421.0 463.0,418.5 462.9,415.1 463.1,412.0 463.8,409.0M410.3,408.9 412.5,412.2 416.4,412.4 419.5,410.7 422.9,409.6 424.4,406.7 426.4,404.0 429.7,403.4 432.4,401.4 435.0,399.8 437.3,397.9 440.0,396.5 442.6,394.8 446.2,394.2 448.6,397.0 452.3,397.6 454.7,394.8M627.2,646.6 631.7,644.7 636.2,642.8 640.3,639.6 645.5,639.8M626.1,683.4 629.8,679.7 629.9,674.5 627.1,670.2 627.4,665.1 626.2,660.1 623.3,655.9 623.3,650.4 627.2,646.6M661.9,682.8 665.3,678.9 667.5,674.2 672.4,671.9 675.2,667.3 671.2,663.5 666.4,661.0 664.6,655.8 663.7,650.5M645.5,639.8 648.3,640.7 650.0,643.2 652.8,644.4 655.6,643.3 656.4,646.2 658.4,648.4 661.0,649.5 663.7,650.5M696.4,653.4 691.3,653.6 686.3,652.6 683.7,648.3 680.9,644.1M663.7,650.5 668.6,649.0 671.3,644.6 676.1,644.6 680.9,644.1M695.6,615.7 693.3,617.5 690.3,617.3 687.9,618.8 685.0,619.0 684.1,622.2 685.1,625.4 682.0,626.5 679.7,628.7M680.9,644.1 679.1,640.3 680.6,636.4 678.7,632.7 679.7,628.7M651.2,598.1 648.1,600.1 644.6,600.9 643.2,604.3 643.0,607.9M651.2,598.1 653.8,596.9 656.6,596.5 659.1,595.1 661.7,593.9 663.4,596.4 666.0,597.8 668.9,598.2 671.6,599.4M643.0,607.9 644.6,612.9 643.8,618.2 647.0,622.3 651.6,624.8M671.6,599.4 671.5,604.7 670.9,609.9 669.1,614.9 667.4,619.9M667.4,619.9 662.8,619.8 658.3,618.4 655.9,622.6 651.6,624.8M646.1,578.6 648.5,580.8 651.7,581.4 651.6,584.5 651.9,587.5 651.1,592.8 651.2,598.1M622.0,584.2 625.4,582.7 628.7,581.1 629.6,577.5 630.2,573.9M622.0,584.2 624.0,586.5 625.2,589.2 626.5,591.9 627.6,594.6 628.9,597.5 630.5,600.1 631.1,603.4 629.4,606.3M629.4,606.3 632.9,607.3 636.3,606.3 639.8,606.4 643.0,607.9M677.2,595.0 674.8,597.6 671.6,599.4M621.7,614.5 624.2,613.1 626.3,611.1 627.8,608.6 629.4,606.3M627.2,646.6 623.5,643.5M645.5,639.8 647.6,636.2 648.1,632.1 650.7,628.8 651.6,624.8M679.7,628.7 677.1,625.7 675.1,622.3 671.0,621.7 667.4,619.9M667.1,482.5 671.5,483.5 674.1,487.1 675.7,491.6 680.4,492.7M651.4,507.7 653.8,504.5 655.5,500.8 659.6,500.0 662.5,497.1 662.7,493.1 662.4,489.1 665.5,486.3 667.1,482.5M677.2,515.6 680.6,513.4M680.4,492.7 681.9,495.7 681.6,499.0 683.3,501.9 686.5,503.0 683.1,505.2 679.1,505.6 682.3,509.0 680.6,513.4M703.7,523.1 700.7,520.0 698.5,516.2M698.5,516.2 694.1,515.3 689.7,514.2 685.1,514.5 680.6,513.4M732.6,501.8 732.4,498.9M753.0,486.5 748.8,488.2 744.3,487.8 741.2,488.3 738.8,486.3 737.4,488.7 736.1,491.2M732.4,498.9 735.0,495.4 736.1,491.2M698.5,516.2 701.9,512.3 705.7,508.8 707.4,503.7 705.8,498.6M732.4,498.9 728.7,499.1 725.1,498.5 721.5,499.7 719.0,502.6 715.6,501.8 712.5,500.3 709.0,499.8 705.8,498.6M680.4,492.7 682.7,491.1 685.0,489.5 687.8,490.2 690.3,491.6 693.7,487.6 698.9,486.5M705.8,498.6 704.1,495.3 701.1,493.3 701.7,489.3 698.9,486.5M667.1,482.5 664.6,480.9 663.8,478.0 663.4,475.2 664.4,472.5M630.2,483.8 627.8,479.5 629.3,474.8M664.4,472.5 660.5,475.3 656.2,477.5 650.9,477.2 647.3,481.1 643.1,478.8 638.6,477.2 634.3,474.5 629.3,474.8M609.5,430.8 612.1,433.0 614.8,435.2 617.7,437.0 620.8,438.5 624.1,439.8 626.8,442.0 629.0,444.7 631.3,447.3M641.3,411.0 642.0,415.9 643.0,420.8 639.1,423.8 634.8,426.2 635.2,430.7 635.3,435.2 639.7,437.1 642.2,441.1M642.2,441.1 639.0,441.6 635.9,442.7 632.9,444.3 631.3,447.3M612.0,472.4 616.1,474.6 619.5,477.9 622.8,474.5 627.1,472.5M588.8,508.9 592.7,510.9 596.1,513.5 600.4,514.4 604.2,516.6M629.3,474.8 627.1,472.5M729.1,400.7 724.5,401.0 720.3,402.8 715.5,403.4 711.3,401.0M729.1,400.7 730.2,399.3M730.2,399.3 725.9,396.5 720.8,395.6 720.4,390.4 717.3,386.2 720.6,382.9 722.6,378.7 725.1,374.8 727.2,370.7M711.3,401.0 707.9,399.4 705.3,396.6 706.2,393.0 707.3,389.5 704.3,388.4 701.9,386.3 700.9,383.2 698.1,381.5M698.1,381.5 699.8,378.6 701.6,375.7M701.6,375.7 705.3,376.5 708.5,378.6 712.5,377.4 714.0,373.5 717.2,373.0 719.9,371.1 723.1,371.0 726.1,370.2M726.1,370.2 727.2,370.7M700.2,420.6 702.3,423.6 705.9,423.8 709.3,424.6 711.4,427.3 713.4,430.4 716.8,431.8 716.9,435.3 718.0,438.6M700.2,420.6 702.3,418.0 705.2,416.6 706.9,413.3 704.9,410.3 708.2,409.3 708.4,405.8 709.1,402.9 711.3,401.0M734.3,425.6 733.4,422.5 731.8,419.6 729.9,416.9 730.0,413.5 729.2,410.1 727.1,407.3 729.3,404.3 729.1,400.7M718.0,438.6 718.4,435.6 720.3,433.2 722.0,430.8 722.8,427.9 725.5,426.7 728.6,426.8 731.5,426.7 734.3,425.6M810.0,431.2 804.7,433.7 799.3,436.1 794.2,433.1 789.5,429.6 783.8,429.0 779.5,432.6 773.8,434.0 771.3,439.2 769.0,434.0 766.3,428.9 760.7,427.6 755.1,426.2 750.1,428.8 744.6,429.5 739.0,428.6 734.3,425.6M1118.1,324.5 1099.4,343.1 1081.1,362.1 1067.9,393.0 1034.8,387.2 1008.2,370.5 978.6,381.2 958.4,401.1 934.8,416.7 908.3,415.1 884.9,402.6 860.0,392.9 833.5,395.9 807.5,387.6 781.9,396.9 756.0,397.5 730.2,399.3M1298.5,252.0 1260.7,234.9 1220.7,245.7 1183.4,267.6 1143.0,252.3 1132.4,298.8 1085.0,304.4 1046.3,316.7 1020.5,348.0 983.6,372.2 957.2,407.5 921.1,379.3 875.3,378.5 838.5,373.8 801.4,371.4 764.2,388.2 727.2,370.7M696.0,382.3 698.1,381.5M688.6,419.5 691.6,418.2 694.7,417.4 697.9,418.2 700.2,420.6M692.2,347.2 692.1,351.2 692.1,355.2 691.4,359.2 691.7,363.2 695.1,365.7 698.6,367.9 700.6,371.6 701.6,375.7M718.3,340.6 720.9,344.2 722.1,348.5 726.4,350.0 729.3,353.5 727.7,357.5 727.3,361.8 726.4,366.0 726.1,370.2M967.0,837.4 962.6,836.5 958.1,836.9 954.1,834.9 949.7,833.9M933.3,854.5 932.6,853.0M932.6,853.0 934.5,849.9 935.6,846.5 939.3,846.6 942.6,844.8 945.6,842.6 949.2,841.4 948.4,837.6 949.7,833.9M961.7,801.6 959.9,804.6 958.4,807.8 955.4,809.7 952.9,812.1 951.0,815.4 947.4,816.4 944.2,818.0 940.6,818.3M940.6,818.3 943.8,818.0 946.0,820.2 948.7,821.2 951.3,822.6 950.4,825.5 948.7,828.0 948.7,831.1 949.7,833.9M911.1,899.9 907.2,896.9 902.3,896.6 898.5,900.1 893.4,899.8M893.4,899.8 892.4,894.6 887.5,892.5 886.4,887.4 882.0,884.7M918.4,886.1 915.3,884.5 912.5,882.6 909.9,879.9 906.2,879.8 905.0,876.6 903.0,873.7 904.1,869.9 901.2,867.0M901.2,867.0 898.7,869.7 897.2,873.1 897.1,876.8 895.6,880.2 892.7,883.2 890.1,886.4 886.0,886.2 882.0,884.7M872.0,940.7 875.8,940.3 877.0,936.6 880.3,936.2 883.5,936.9M872.0,940.7 870.3,936.7 871.9,932.7 872.7,928.8 872.3,924.8 871.5,920.6 868.3,917.8 864.2,916.2 862.8,912.0M883.5,936.9 884.9,932.7 889.3,932.6 890.8,929.1 890.0,925.4M890.0,925.4 890.1,921.4 886.8,919.0 885.9,915.5 885.0,912.1M862.8,912.0 865.6,913.4 868.7,913.8 870.8,911.4 873.9,910.6 876.6,911.6 879.5,911.3 882.2,911.9 885.0,912.1M869.3,944.1 872.0,940.7M901.3,950.4 899.1,948.8 896.6,947.5 893.1,947.4 892.1,944.1 890.0,942.3 887.6,940.7 885.6,938.7 883.5,936.9M907.6,925.5 903.1,927.3 898.8,929.2 894.5,927.0 890.0,925.4M893.4,899.8 891.8,903.2 889.4,906.1 886.0,908.2 885.0,912.1M869.3,882.1 872.5,882.8 875.8,882.9 878.9,883.8 882.0,884.7M862.8,912.0 860.9,909.2 857.7,908.5M869.3,882.1 867.4,882.9M867.4,882.9 866.6,886.7 864.8,890.0 860.7,890.7 858.5,894.2 859.9,897.8 860.9,901.5 859.6,905.2 857.7,908.5M845.4,925.9 847.5,921.0 849.2,916.0 849.3,912.8 851.0,910.2 853.8,909.0 856.9,908.7M857.7,908.5 856.9,908.7M823.7,913.2 820.2,909.7 815.3,910.3 810.9,909.1 806.4,909.7M823.7,913.2 826.2,909.4 829.5,906.3 831.8,902.3 835.6,899.7M835.6,899.7 834.2,894.6 832.1,889.8M832.1,889.8 828.6,887.2 824.4,888.2 820.8,885.7 816.6,886.8 811.8,887.1 808.4,890.5 804.8,887.9 800.8,885.8M806.4,909.7 806.2,904.3 807.9,899.1 805.0,898.2 802.1,897.8 800.9,895.1 799.4,892.5M800.8,885.8 799.0,888.9 799.4,892.5M797.5,928.4 800.2,927.3 802.5,925.6 802.9,922.7 804.4,920.2 805.5,917.6 806.9,915.3 807.5,912.4 806.4,909.7M828.4,926.4 829.3,922.7 828.9,918.8 826.1,916.2 823.7,913.2M856.9,908.7 853.6,908.2 850.4,907.0 848.8,904.1 847.7,900.9 844.7,901.6 841.6,901.1 839.0,898.9 835.6,899.7M842.1,870.0 840.6,872.5 839.9,875.3 840.4,878.3 839.4,881.1 838.5,883.9 836.4,885.9 834.8,888.4 832.1,889.8M842.1,870.0 844.0,873.6 847.0,876.2 850.8,879.0 854.8,876.4 857.8,878.2 861.0,879.9 863.9,882.0 867.4,882.9M839.5,862.3 842.5,865.6 842.1,870.0M799.3,880.9 800.8,885.8M774.9,906.9 778.5,905.9 781.2,903.5 784.7,902.6 788.1,901.3 788.9,897.3 791.6,894.3 795.6,893.7 799.4,892.5M487.7,1070.0 484.1,1063.6 483.5,1056.2 477.3,1052.1 473.6,1045.7 470.0,1038.6 462.3,1036.2 458.7,1029.7 458.1,1022.2 453.5,1015.3 456.9,1007.8 453.7,1001.1 454.0,993.6 455.5,985.5 452.0,978.0 455.7,970.7 462.4,966.1M442.1,981.2 444.5,978.9 447.9,978.8 449.5,975.9 452.3,974.2 454.3,971.8 455.1,968.7 457.8,966.9 459.3,964.1M462.4,966.1 459.3,964.1M457.5,905.1 460.3,906.3 463.3,905.9 466.4,907.0 469.3,905.4 471.5,903.1 474.6,902.8 477.8,903.8 480.5,901.8M446.9,924.4 450.5,925.0 451.4,928.6 454.2,930.2 457.3,930.5 458.0,934.1 461.6,934.6 464.7,935.5 466.5,938.1M480.5,901.8 483.3,902.9 485.8,904.7 488.2,906.9 488.3,910.2M488.3,910.2 487.8,913.8 485.5,916.5 484.1,919.7 482.0,922.5 481.0,925.8 480.2,929.2 480.2,932.8 478.2,935.8M466.5,938.1 469.5,939.7 472.8,938.9 475.0,936.6 478.2,935.8M438.2,952.5 441.5,954.4 442.5,958.2 444.0,961.4 444.9,964.9 448.7,964.6 451.7,962.3 455.3,962.3 458.9,963.3M466.5,938.1 465.9,941.8 467.7,945.0 467.1,948.5 464.9,951.4 462.3,953.9 462.2,957.5 458.6,959.2 458.9,963.3M458.9,963.3 459.3,964.1M494.9,911.4 497.2,914.0 499.7,916.4 502.3,918.7 505.2,920.6 506.6,924.0 505.6,927.5 503.0,931.4 506.8,934.3M516.0,904.4 513.8,906.3 510.9,906.9 508.7,908.7 506.2,910.1 503.4,908.5 500.5,910.0 498.0,911.8 494.9,911.4M528.8,924.9 530.1,929.7 526.2,932.8M506.8,934.3 511.6,936.0 516.7,936.0 521.7,935.1 526.2,932.8M539.9,952.2 535.9,950.8 532.4,948.2M526.2,932.8 527.4,936.8 528.9,940.7 531.1,944.2 532.4,948.2M149.1,823.5 152.1,822.3 154.2,819.8 157.3,820.0 160.4,819.7 163.5,820.2 166.0,821.9 168.8,823.1 171.6,824.2M149.1,823.5 147.4,826.5 145.6,829.5 144.9,832.8 142.9,835.7 139.2,836.9 137.5,840.4 135.5,843.6 135.7,847.3M147.4,855.3 151.9,856.0 156.2,854.4 160.5,855.5 164.7,856.9 165.6,852.5 167.9,848.7 170.6,845.1 174.3,842.5M147.4,855.3 143.4,855.2 139.6,854.2 137.6,850.8 135.7,847.3M174.3,842.5 175.6,839.5 177.7,836.9 176.8,833.8 175.6,830.7M175.6,830.7 172.0,828.5 171.6,824.2M151.9,870.0 149.1,867.1 148.4,863.0 146.9,859.3 147.4,855.3M183.4,855.9 181.6,852.1 178.2,849.6 174.9,846.8 174.3,842.5M128.3,847.4 132.0,846.7 135.7,847.3M212.5,834.2 209.7,830.9 207.7,827.0M207.7,827.0 203.1,826.1 198.5,825.3 196.0,829.4 192.0,832.0 187.8,830.7 184.1,828.1 179.2,827.2 175.6,830.7M208.7,858.8 209.9,855.7 210.6,852.6 208.6,849.7 209.0,846.3 210.4,843.4 210.7,840.2 211.9,837.3 212.5,834.2M294.0,605.7 290.5,608.0 287.1,610.6 283.8,613.3 281.0,616.4 276.8,614.2 272.4,616.2 268.7,618.7 264.2,618.6M264.2,618.6 261.3,615.8 260.4,611.9 259.5,608.1 258.8,604.3 255.9,601.6 252.5,599.8 248.9,598.0 247.2,594.2M291.9,569.4 289.9,566.7 286.8,565.7 283.7,565.6 280.5,565.4 279.0,562.7 276.8,560.5 273.8,559.7 271.2,557.8 268.5,559.0 266.2,560.9 264.4,564.1 260.8,563.4 257.9,564.4 254.9,564.9 253.9,568.3 250.6,569.4M250.6,569.4 248.5,572.0 246.9,574.9 247.4,578.2 247.3,581.6 247.8,585.1 249.9,587.9 248.6,591.1 247.2,594.2M236.7,536.0 239.3,538.9 240.8,542.4 237.5,544.8 236.9,548.8 235.9,552.3 236.7,555.8 240.0,557.4 241.7,560.7M250.6,569.4 250.0,566.0 247.4,563.8 243.4,564.4 241.7,560.7M195.9,574.1 198.8,574.8 201.8,574.5 202.9,577.7 206.2,578.5M241.7,560.7 238.4,564.7 234.2,567.7 231.2,568.0 228.5,566.5 225.1,567.1 224.4,570.5 220.3,573.5 215.3,574.6 211.5,578.2 206.2,578.5M357.0,745.2 361.1,744.1 364.6,741.7 368.7,740.2 373.0,740.4M357.0,745.2 352.4,747.0 349.8,751.1 349.1,755.8 348.1,760.3 350.1,764.4 351.9,768.7 355.7,771.1 359.6,773.5 355.3,774.5 351.3,776.1 347.6,778.8 346.1,783.1 347.5,787.0 348.1,791.2 347.7,795.3 347.9,799.5M373.0,740.4 375.9,742.2 379.3,741.2 381.5,738.9 383.5,736.4 385.7,738.2 387.7,740.3 390.8,740.0 393.1,742.1 395.0,744.3 397.6,745.5 400.2,746.6 403.0,747.2 403.8,750.0 403.1,752.9 404.2,755.6 406.0,757.8M367.4,808.4 370.1,807.2 373.1,807.7 375.3,805.9 377.6,804.2 379.2,802.0 380.4,799.4 381.6,796.4 384.8,796.0 387.5,797.1 390.5,796.9 393.2,795.7 396.1,795.1 399.2,794.3 400.0,791.1 401.6,788.5 404.3,787.4M367.4,808.4 365.7,806.2 364.6,803.7 361.8,803.9 359.1,802.8 354.1,802.8 349.1,802.1M404.3,787.4 407.1,782.8 404.1,778.5 401.9,774.4 397.8,772.2 399.6,768.0 399.2,763.5 403.4,761.6 406.0,757.8M349.1,802.1 347.9,799.5M335.3,733.3 332.0,734.3 329.2,732.3 325.9,731.6 323.0,733.1 320.4,734.8 317.9,736.6 314.9,737.6 312.2,739.1M303.0,770.7 302.2,766.1 300.4,761.9 301.8,757.3 300.2,752.7 298.1,750.0 296.7,746.7 299.5,744.6 301.5,741.8 304.5,741.7 307.4,742.6 309.8,740.9 312.2,739.1M335.3,733.3 337.4,736.2 339.3,739.2 340.3,742.8 342.7,745.5 346.2,744.4 349.8,745.1 353.4,746.7 357.0,745.2M306.1,781.6 308.0,783.9 310.1,786.1 313.2,786.5 315.9,787.8 317.4,790.5 319.8,792.3 321.8,794.9 325.1,795.0 327.7,796.4 330.4,797.5 333.5,797.3 336.3,798.4 339.2,798.8 342.1,798.5 345.2,798.3 347.9,799.5M306.1,781.6 305.6,778.7 305.2,775.9 303.4,773.6 303.0,770.7M387.7,844.5 386.1,842.2 384.2,840.1 384.2,837.3 384.6,834.5 381.3,834.4 379.6,831.6 378.1,829.0 378.4,826.0 374.1,822.8 371.4,818.2 368.3,817.2 367.6,814.1 367.0,811.3 367.4,808.4M433.7,810.0 429.1,808.8 424.8,806.6 421.0,803.9 417.2,801.1 414.1,797.4 410.1,794.8 407.1,791.2 404.3,787.4M345.7,854.6 344.4,850.4 340.9,847.6 340.4,843.4 339.4,839.3 339.1,835.1 337.2,831.3 335.2,827.5 332.3,824.5M332.3,824.5 335.0,821.8 335.3,818.0 338.7,816.2 339.6,812.4 341.8,809.6 343.4,806.4 346.3,804.2 349.1,802.1M388.4,858.7 390.0,855.3 389.4,851.5 389.3,847.8 387.7,844.5M412.6,754.5 409.4,756.3 406.0,757.8M433.7,810.0 438.1,810.8M438.1,810.8 439.0,808.0 439.1,805.0 439.1,802.1 439.2,799.2 439.2,795.9 439.4,792.6 442.5,791.3 444.7,788.8 448.8,788.9 450.6,785.2 452.2,781.6 450.0,778.3 451.0,774.6 448.0,772.3 449.5,769.5 450.7,766.6M306.1,781.6 303.4,784.4 301.3,787.6 302.6,791.7 300.4,795.3 298.0,799.1 295.7,802.9 291.2,802.8 286.9,801.6M327.3,826.6 322.6,825.8 317.9,825.1 313.3,826.5 309.2,829.1M291.1,826.6 295.7,824.8 300.6,824.8 305.3,826.0 309.2,829.1M332.3,824.5 327.3,826.6M286.9,801.6 286.8,804.9 285.7,808.0 287.1,811.1 287.1,814.4 289.9,816.7 292.2,819.5 291.7,823.1 291.1,826.6M294.3,728.7 296.3,731.6 299.5,732.9 302.4,731.3 305.5,730.1 305.1,733.3 307.3,735.7 310.1,737.0 312.2,739.1M335.3,686.5 337.4,689.5 340.8,690.5 341.8,693.8 342.4,697.2 343.7,700.3 343.0,703.6 343.7,706.7 344.1,709.9 342.1,712.8 341.7,716.2 339.3,718.7 336.3,720.3 333.9,723.1 333.8,726.7 334.6,730.0 335.3,733.3M335.3,686.5 330.1,687.6 324.7,687.1 319.5,686.0 314.2,685.1M294.3,728.7 294.1,724.0 295.1,719.4 300.0,718.4 303.1,714.5 299.5,712.1 295.5,710.4 293.0,706.9 290.7,703.3M314.2,685.1 311.3,689.5 310.5,694.6 306.0,691.8 300.7,692.0 298.5,695.0 295.8,697.7 291.4,698.8 290.7,703.3M318.9,628.2 317.7,630.7 317.3,633.5 315.0,635.3 312.2,635.6 312.3,638.5 311.2,641.2 308.4,641.8 305.9,643.4 302.9,647.7 297.9,649.4 294.9,653.4 290.8,656.4M341.0,681.1 338.2,683.8 335.3,686.5M341.0,681.1 340.6,675.9 340.2,670.6 339.0,665.4 337.3,660.4 335.2,655.4 334.8,650.0 335.3,644.7 335.8,639.4M314.2,685.1 311.9,680.9 309.5,676.8 308.6,672.0 306.2,667.8 307.2,664.7 305.6,661.9 303.5,659.7 302.2,657.0 299.5,658.6 296.4,658.7 293.3,658.3 290.8,656.4M599.8,640.0 597.2,637.4 594.3,635.2 590.2,634.5 587.5,637.6 586.0,640.5 585.3,643.6 583.0,645.7 581.4,648.6M619.6,688.5 616.3,687.7 612.9,687.9 609.4,687.8 606.5,685.9 603.1,686.1 599.8,685.7 596.4,686.2 593.1,686.4 590.7,683.4 587.5,681.4 588.4,677.7 588.3,673.9 588.4,670.1 587.6,666.4 583.4,666.2 581.0,662.8M581.0,662.8 581.2,658.5 578.1,655.6 579.7,652.0 581.4,648.6M597.0,609.6 594.7,611.5 591.7,611.2 589.0,611.7 586.2,611.2 584.2,613.5 581.2,613.7 578.4,614.5 575.6,613.7M575.6,613.7 576.6,617.6 578.4,621.2 578.4,625.2 578.6,629.2 579.3,633.1 579.5,637.2 579.8,641.4 577.3,644.9M581.4,648.6 579.3,646.8 577.3,644.9M494.9,911.4 491.7,910.2 488.3,910.2M480.5,901.8 481.5,898.5 480.7,895.1 481.5,891.8 482.2,888.5 483.6,885.4 484.4,882.1 484.1,878.7 484.4,875.3M520.1,877.9 518.9,875.0 516.2,873.5 515.1,870.8 514.3,868.0 510.5,866.8 509.2,863.1 506.3,865.3 502.9,866.4M502.9,866.4 500.2,865.2 497.1,865.1 495.0,867.2 492.9,869.3 487.7,870.9 484.4,875.3M433.0,873.7 434.9,876.2 437.9,876.7 440.2,878.5 442.8,879.7 445.8,880.1 448.2,881.8 451.1,882.4 454.0,882.6 456.1,880.2 458.1,877.7 459.3,874.6 458.9,871.3 460.3,868.0 463.6,866.5 466.9,867.7 470.3,866.7M484.4,875.3 481.8,871.0 480.3,866.1 475.3,866.6 470.3,866.7M633.0,726.9 631.9,730.7 629.4,733.9 627.8,737.4 625.9,740.8 624.9,745.1 621.6,747.9 617.7,749.4 613.8,750.8M615.8,696.8 613.3,698.8 610.7,700.5 608.8,703.6 605.2,703.6 602.0,704.6 599.9,707.0 597.5,709.2 594.5,710.3M594.5,710.3 595.4,713.0 597.1,715.3 595.6,717.9 596.6,720.8 593.8,725.4 591.9,730.5 593.7,735.3 596.8,739.4 597.9,744.6 601.7,748.2M601.7,748.2 604.9,747.3 608.0,748.4 611.2,748.9 613.8,750.8M653.1,762.1 650.7,764.3 648.3,766.5 646.9,769.6 644.2,771.7 641.0,770.9 637.6,770.4 634.5,771.5 631.2,772.2M613.8,750.8 616.1,753.9 620.0,754.4 623.0,756.5 624.3,760.1 626.2,763.5 625.5,767.4 628.6,769.5 631.2,772.2M616.7,818.8 617.5,813.7 612.7,811.9 611.4,807.6 614.2,804.0 614.4,800.3 613.6,796.6 613.4,792.8 613.9,789.1M644.9,799.4 645.6,795.4 642.9,792.4 641.1,788.4 636.8,788.5 637.1,784.7 635.3,781.5 632.2,779.5 629.8,776.8M613.9,789.1 619.1,787.9 622.8,784.1 625.3,779.4 629.8,776.8M629.8,776.8 631.2,772.2M601.7,748.2 598.2,748.5 596.2,751.5 593.5,753.3 590.6,754.7M613.9,789.1 612.6,785.4 609.0,783.9 606.2,781.4 602.4,781.4 599.7,783.7 596.5,785.2 593.2,786.6 589.7,786.9M589.7,786.9 587.1,783.2 588.2,778.8 587.7,774.6 586.2,770.7 587.2,766.6 587.5,762.4 589.1,758.6 590.6,754.7M591.8,558.2 589.0,558.4 586.5,557.0 583.5,558.2 581.0,556.0M591.8,558.2 592.2,562.3 595.3,565.1 595.9,568.9 596.0,572.7 598.4,576.2 601.2,579.3 601.6,583.7 599.4,587.5M581.0,556.0 578.1,558.6 575.0,560.9 570.8,561.8 567.6,558.9 567.8,562.3 567.1,565.7 566.6,569.2 565.4,572.4M599.4,587.5 599.3,587.6M599.3,587.6 596.0,584.6 591.7,586.0 588.2,587.8 585.7,591.0 582.5,589.5 579.1,588.6 575.5,588.9 572.0,588.3M565.4,572.4 564.7,577.1 565.6,581.6 568.5,581.4 571.2,582.6 570.8,585.5 572.0,588.3M601.3,552.6 598.6,553.4 595.8,554.1 595.1,557.4 591.8,558.2M568.8,536.7 568.9,539.7 570.7,542.2 573.8,543.3 574.7,546.5 578.0,547.2 580.2,549.8 580.9,552.9 581.0,556.0M622.0,584.2 619.1,583.6 616.2,582.7 613.2,581.8 610.2,582.5 607.1,583.5 603.9,583.1 601.2,584.8 599.4,587.5M597.7,608.9 601.1,607.6 603.3,604.8 604.0,601.1 607.0,598.9 605.5,595.7 604.5,592.3 602.4,589.4 599.3,587.6M564.0,606.1 565.0,601.3 566.7,596.6 570.6,593.3 572.0,588.3M575.6,613.7 573.1,611.2 570.0,609.6 567.9,606.4 564.0,606.1M547.7,538.4 542.8,540.7 541.6,546.0M565.4,572.4 560.8,570.7 555.9,569.8 551.0,570.2 546.1,570.6M546.1,570.6 544.4,567.2 546.4,564.1 547.6,560.9 547.3,557.6 545.7,554.7 543.4,552.3 542.8,549.0 541.6,546.0M503.1,518.2 503.4,522.1 506.5,524.7 503.8,528.2 506.0,532.0 506.1,535.6 506.7,539.1 505.5,542.5 505.8,546.1M541.6,546.0 538.7,546.2 535.9,547.1 533.4,545.6 530.6,544.8 528.9,547.0 527.7,549.6 525.5,551.4 523.7,553.5 518.5,554.5 514.1,551.5 510.8,547.5 505.8,546.1M470.8,552.5 475.5,550.7 477.8,546.4 482.2,544.9 486.9,544.7 491.4,545.9 496.0,545.1 500.8,545.4 504.2,548.9M504.2,548.9 505.8,546.1M426.9,588.6 428.4,591.2 429.1,594.1M464.5,569.2 465.8,573.4 465.2,577.7 466.4,581.8 467.4,585.9 471.7,586.8 475.5,588.8 477.9,592.8 482.2,594.1M429.1,594.1 433.1,595.6 437.3,596.5 441.7,597.2 445.2,599.9 450.7,600.4 456.1,599.4 454.5,602.5 453.4,605.9 456.1,608.1 459.2,609.8M459.2,609.8 462.4,608.1 464.9,605.4 468.4,604.6 471.9,603.7 473.4,600.3 476.1,597.9 478.9,595.5 482.2,594.1M506.9,568.7 507.3,563.7 507.1,558.6 506.5,553.5 504.2,548.9M506.9,568.7 503.6,572.5 503.7,577.5 502.0,581.9 498.7,585.4 496.2,583.8 493.2,584.3 490.4,583.3 487.6,584.4 486.7,587.0 485.5,589.5 483.6,591.6 482.3,594.1M482.2,594.1 482.3,594.1M551.2,617.6 552.8,614.2 552.9,610.5 556.4,609.4 559.2,607.1M551.2,617.6 548.2,618.1 545.2,617.8 542.2,617.7 539.3,618.7 535.7,618.9 533.5,621.9 530.4,620.8 527.5,619.2M559.2,607.1 558.8,602.2 554.5,599.9 550.1,598.3 548.3,593.9 545.2,590.2 543.6,585.6 538.9,585.2 534.2,584.0M527.5,619.2 526.8,615.6 524.2,613.1 522.6,609.7 519.1,608.4M519.1,608.4 520.5,605.2 521.2,601.8 524.1,600.0 526.3,597.3 527.8,593.7 526.1,590.1 527.0,586.0 531.0,584.9M534.2,584.0 531.0,584.9M564.0,606.1 559.2,607.1M555.1,640.5 558.1,640.1 560.7,641.4 563.6,641.2 566.4,641.7 569.3,641.0 572.2,642.1 574.9,643.1 577.3,644.9M555.1,640.5 553.7,637.9 553.2,634.9 552.1,632.0 553.2,629.0 553.5,626.1 553.0,623.1 553.1,620.0 551.2,617.6M529.3,657.1 532.3,654.1 536.6,653.8 539.9,650.2 544.4,652.1 547.6,649.7 550.1,646.6 552.7,643.6 555.1,640.5M524.4,653.0 526.1,655.9 529.3,657.1M524.4,653.0 524.1,648.6 525.0,644.2 526.7,640.1 529.1,636.4 531.0,632.1 529.9,627.6 526.9,623.9 527.5,619.2M546.1,570.6 543.7,574.5 541.8,578.7 538.2,581.7 534.2,584.0M498.3,610.3 495.7,614.8 496.8,619.9 494.6,624.2 492.8,628.7 488.9,627.6 486.3,630.7 485.4,634.0 485.0,637.3 485.9,640.2 486.2,643.2 489.7,644.1 490.2,647.7M524.4,653.0 520.2,655.0 515.7,653.9 511.3,653.5 507.0,652.5 505.4,650.1 505.0,647.3 502.3,646.2 500.3,644.2 497.6,645.8 496.1,648.5 493.1,648.5 490.2,647.7M498.3,610.3 503.6,609.9 508.8,610.7 514.1,610.1 519.1,608.4M498.3,610.3 496.3,608.1 493.8,606.5 493.0,603.6 491.6,601.0 488.4,600.8 486.3,598.5 486.3,594.5 482.3,594.1M506.9,568.7 510.9,568.2 514.8,569.4 518.9,569.7 522.5,571.6 525.6,575.0 530.0,576.1 530.6,580.5 531.0,584.9M175.2,674.4 180.5,673.0M194.4,713.1 198.8,710.5 201.5,706.0M201.5,706.0 201.7,702.0 202.5,698.1 200.7,694.5 200.3,690.5 199.0,686.7 197.5,683.1 194.0,680.7 193.3,676.5M180.5,673.0 184.0,673.7 187.4,672.7 190.4,674.5 193.3,676.5M165.5,768.2 169.4,766.2 170.2,761.9 173.9,760.7 177.1,758.4 179.4,762.1 183.6,762.6 187.5,763.1 191.2,764.3M165.5,768.2 164.9,771.6 164.9,775.1 166.1,778.4 166.2,781.9 164.7,785.4 165.9,788.9 168.7,791.7 168.1,795.5M191.2,764.3 193.3,767.5 196.2,770.1 198.2,773.6 198.2,777.7 199.7,781.4 198.8,785.2 201.6,788.5 200.4,792.7M168.1,795.5 168.6,798.8 169.0,802.1 172.2,801.5 175.5,801.9M175.5,801.9 178.8,803.9 182.1,805.7 186.9,806.0 188.4,801.5 191.6,800.2 193.6,797.4 196.5,795.9 199.7,795.1M199.7,795.1 200.4,792.7M190.8,734.5 193.8,738.8 193.0,743.9 197.0,746.5 201.1,749.1M201.1,749.1 197.7,752.2 194.9,755.9 194.1,760.6 191.2,764.3M159.4,764.1 163.4,764.7 165.5,768.2M171.6,824.2 169.9,821.6 170.3,818.5 170.4,815.5 171.6,812.7 171.3,809.7 171.4,806.6 173.8,804.5 175.5,801.9M209.2,809.6 205.3,813.1 207.0,818.2 206.6,822.7 207.7,827.0M209.2,809.6 207.2,805.8 204.6,802.3 203.2,797.9 199.7,795.1M227.1,777.6 224.8,782.6 226.1,787.9 220.8,786.6 215.9,788.9 211.7,790.1 208.8,793.4 204.4,794.6 200.4,792.7M209.2,809.6 212.2,808.4 214.2,805.9 217.3,806.2 220.4,806.9 223.2,806.2 226.1,806.1 228.9,805.0 231.8,805.8M227.1,777.6 230.8,779.9 234.5,782.3 238.1,785.5 238.0,790.3M238.0,790.3 235.5,794.1 236.3,798.6 231.6,800.6 231.8,805.8M303.0,770.7 301.0,768.4 298.6,766.8 297.5,764.1 295.7,761.7 292.7,762.0 290.2,763.7 287.2,763.7 284.3,763.2 278.9,763.9 274.2,766.6 271.4,767.7 268.5,767.0 267.6,763.7 264.1,763.3M286.9,801.6 284.1,799.9 281.1,798.8 279.0,796.4 276.7,794.1 273.6,793.2 270.6,791.8 267.4,792.4 264.2,792.9M264.1,763.3 264.4,767.0 261.6,769.4 260.6,772.8 261.7,776.1 260.8,779.4 262.3,782.6 262.6,785.9 261.5,789.1M264.2,792.9 261.5,789.1M213.3,749.2 214.9,752.0 214.1,755.2 216.7,756.8 219.5,757.9 223.5,761.6 228.3,764.2M228.3,764.2 232.3,763.0 236.4,762.4 239.9,760.1 243.9,758.9 247.5,756.4 251.8,756.2 255.9,754.8 260.1,755.6M230.8,726.7 234.0,727.5 236.7,725.7 239.6,724.2 242.7,725.0 246.0,725.4 247.9,728.2 250.9,728.6 253.8,729.7M253.8,729.7 256.2,732.1 258.1,734.9 261.0,736.7 262.9,739.6M262.9,739.6 260.4,741.2 257.5,741.4 258.5,744.1 257.8,747.0 260.0,751.0 260.1,755.6M201.1,749.1 204.1,748.3 207.2,748.9 210.2,749.5 213.3,749.2M227.1,777.6 226.9,774.2 227.6,770.9 227.6,767.5 228.3,764.2M220.7,707.5 220.1,710.7 219.3,713.7 220.9,716.8 224.0,718.0 226.8,719.2 227.6,722.2 229.5,724.2 230.8,726.7M238.0,790.3 240.6,788.0 244.0,788.0 247.4,787.2 249.4,784.4 251.6,787.1 255.1,787.5 258.2,788.6 261.5,789.1M264.1,763.3 261.3,759.9 260.1,755.6M294.3,728.7 291.9,733.6 286.5,733.9 282.8,737.1 281.2,741.6 278.6,740.1 275.7,740.3 274.2,742.8 271.6,744.2 268.8,744.7 266.1,744.1 265.6,741.0 262.9,739.6M137.3,783.1 136.5,779.1 132.5,778.3 129.3,777.2 126.2,775.9 123.0,774.6 119.6,775.6 116.3,774.8 113.0,775.6M137.3,783.1 138.6,787.1 138.9,791.3 137.7,795.9 140.7,799.5M140.7,799.5 140.2,803.0 137.5,805.3M137.5,805.3 134.0,804.9 131.0,803.1 127.6,802.6 124.3,802.4 121.8,804.8 119.1,806.8 116.0,808.6 114.8,812.1M114.8,812.1 114.6,808.0 112.1,804.8 111.9,800.9 112.0,797.0 107.7,796.5 105.5,792.8 101.3,791.2 100.6,786.8M100.6,786.8 103.3,782.5 106.3,778.4M106.3,778.4 109.2,775.9 113.0,775.6M149.6,765.7 147.6,770.8 143.7,774.6 141.1,779.3 137.3,783.1M127.5,749.1 124.2,751.3 121.6,754.3 122.3,758.7 119.0,761.7 117.2,765.1 116.1,768.7 114.3,772.1 113.0,775.6M168.1,795.5 164.1,796.8 160.0,798.0 158.1,793.8 153.7,792.5 149.9,793.2 147.1,795.9 145.0,799.5 140.7,799.5M149.1,823.5 148.4,820.7 147.6,817.8 145.5,815.6 142.5,814.9 142.2,812.1 141.0,809.5 139.4,807.3 137.5,805.3M113.0,816.5 114.8,812.1M-15.6,799.5 -8.6,795.9 -1.7,792.1 5.4,796.3 13.6,795.4 19.6,787.8 29.2,787.3 35.7,793.2 43.1,798.1 50.8,793.6 58.9,797.5 66.8,794.4 70.7,786.9 78.6,785.6 85.7,789.0 93.5,790.3 100.6,786.8M95.2,754.6 94.1,758.1 94.4,761.7 96.4,764.6 97.4,768.1 99.1,771.2 101.9,773.2 105.1,774.9 106.3,778.4M736.1,491.2 735.4,487.9 732.7,485.8 730.6,483.2 730.1,480.0 727.9,477.5 725.1,475.8 726.0,471.8 722.3,469.9M698.9,486.5 697.8,482.8 700.7,480.2M700.7,480.2 704.5,479.5 706.6,476.3 705.8,472.3 709.0,469.7 712.3,470.3 715.6,470.6 719.0,470.1 722.3,469.9M771.7,457.0 768.6,458.5 765.7,456.5 762.7,456.5 759.8,455.4 756.9,455.9 753.9,455.6 750.9,456.0 747.9,456.0 744.7,456.5 741.6,457.3 738.8,458.8 736.1,460.6 732.9,460.2 730.3,458.1 727.1,457.8 724.1,457.0M722.3,469.9 722.0,466.6 722.8,463.4 724.3,460.4 724.1,457.0M718.0,438.6 716.3,441.4 717.3,444.4M717.3,444.4 720.0,447.0 722.4,449.8 723.1,453.4 724.1,457.0M665.2,471.1 663.1,468.2 662.7,464.6 662.0,460.7 664.6,457.8 664.6,454.4 663.7,451.2 664.9,447.9 663.7,444.5M665.2,471.1 669.0,471.6 672.0,474.2 675.4,472.4 677.5,469.2 679.9,466.7 683.3,466.2 686.5,466.1 689.7,466.5M695.0,452.8 691.7,455.6 688.1,458.0 688.1,462.4 689.7,466.5M695.0,452.8 691.1,454.5 686.8,454.3 683.1,452.0 681.0,448.2 677.5,445.3 672.9,445.2 671.5,441.0 672.0,436.6M672.0,436.6 669.3,438.1 668.3,441.0 666.6,443.5 663.7,444.5M664.4,472.5 665.2,471.1M642.2,441.1 645.0,439.4 648.1,438.7 651.5,438.2 654.0,436.0 656.9,440.0 655.0,444.6 659.3,446.5 663.7,444.5M700.7,480.2 698.7,476.2 695.4,473.2 692.6,469.8 689.7,466.5M717.3,444.4 714.2,441.0 711.6,437.2 707.5,439.1 703.1,440.4 700.9,443.4 698.9,446.5 695.4,448.7 695.0,452.8M673.4,431.7 672.0,436.6M928.1,792.2 928.4,795.2 926.2,797.4M940.6,818.3 938.6,817.7M926.2,797.4 928.5,799.6 931.1,801.4 934.1,802.8 936.1,805.3 937.1,808.5 939.2,811.1 936.8,814.2 938.6,817.7M485.5,943.7 483.9,948.9 480.6,953.3 480.9,958.7 482.5,963.9M485.5,943.7 489.7,944.4 493.5,946.2 498.0,947.1 501.5,944.0M501.5,944.0 504.8,947.2 507.8,950.8 508.3,955.4 509.7,959.9M490.3,969.7 495.7,970.2 500.3,967.6 504.5,964.6 508.9,962.1M490.3,969.7 486.7,966.5 482.5,963.9M508.9,962.1 509.7,959.9M462.4,966.1 464.6,964.2 466.4,961.9 469.2,960.6 472.1,961.9 477.3,963.1 482.5,963.9M478.2,935.8 481.2,937.1 484.5,937.3 484.0,940.7 485.5,943.7M506.8,934.3 506.9,937.3 505.0,939.6 502.5,941.2 501.5,944.0M532.4,948.2 528.8,948.1 525.3,949.2 521.8,948.3 518.2,948.6 518.4,952.6 515.8,955.6 512.6,957.6 509.7,959.9M517.9,977.5 517.7,974.7 518.1,972.0 515.5,971.1 512.9,970.1 513.1,965.0 508.9,962.1M489.2,1061.3 491.2,1054.8 491.0,1047.9 496.3,1043.7 502.2,1040.3 501.2,1034.1 500.8,1027.8 502.2,1021.7 504.3,1015.7 505.4,1009.2 507.8,1003.1 506.1,996.8 505.4,990.3 502.3,984.5 499.8,978.6 495.3,973.9 490.3,969.7M336.8,862.0 333.2,863.3 329.5,864.1 326.3,861.5 322.3,862.0M332.0,891.4 329.4,887.5 324.7,887.6 323.1,883.8 322.3,879.7M322.3,862.0 325.3,866.0 326.4,870.9 324.3,875.2 322.3,879.7M327.3,826.6 322.8,829.2 321.3,834.2 323.0,838.7 323.6,843.5 324.1,847.9 323.5,852.3 321.6,856.3 320.5,860.6M322.3,862.0 320.5,860.6M233.4,832.9 235.2,829.1 237.2,825.5 238.9,821.6 241.8,818.5M233.4,832.9 236.5,837.0 239.6,841.2 243.7,844.5 245.9,849.3M245.9,849.3 249.5,848.0 253.3,847.1 255.0,843.7 256.5,840.2 258.6,836.8 262.7,836.7 266.2,836.4 269.5,835.0M269.5,835.0 266.9,832.5 265.2,829.2 264.0,825.5 265.7,822.0 264.1,818.0 260.9,815.2 256.8,815.9 252.9,817.6M252.9,817.6 250.1,816.8 247.3,817.8 244.4,817.2 241.8,818.5M231.8,805.8 236.1,808.0 235.9,812.8 240.2,814.3 241.8,818.5M212.5,834.2 214.6,836.5 217.6,836.5 220.2,835.4 223.1,835.3 224.0,831.9 227.6,831.5 230.6,831.7 233.4,832.9M245.1,853.0 245.9,849.3M264.2,792.9 267.0,796.1 267.0,800.4 264.9,803.8 264.3,807.9 262.4,811.2 259.1,813.3 256.7,816.4 252.9,817.6M291.1,826.6 291.3,830.8 288.6,834.1 284.9,835.4 281.1,836.5M281.1,836.5 277.9,837.5 274.9,839.0 272.6,836.5 269.5,835.0M388.1,700.1 392.9,701.3 397.7,702.8 401.0,698.7 406.1,697.3M388.1,700.1 385.8,697.3 382.3,696.9 380.2,694.1 380.3,690.6 378.1,688.2 375.1,687.2 373.5,684.4 370.7,682.8M406.1,697.3 408.1,694.5 408.9,691.1 409.3,687.6 408.0,684.3 410.0,681.6 411.7,678.7 409.4,675.1 412.3,671.9 414.3,669.2 415.9,666.3 415.4,662.8 416.4,659.5 417.7,656.1 416.3,652.8 419.1,650.5 419.8,646.9M370.7,682.8 368.8,679.9 368.3,676.4 369.6,673.2 369.7,669.8 366.2,667.0 368.1,662.9 369.3,659.6 371.3,656.8 375.0,655.4 378.8,656.3 381.6,653.6 383.5,650.4 385.7,647.4 385.6,643.8 387.4,640.8 389.4,638.0M389.4,638.0 392.4,636.9 395.6,637.5 398.9,637.4 401.4,639.6 404.2,640.8 407.2,641.6 410.2,641.2 413.3,641.3M413.3,641.3 416.2,644.5 419.8,646.9M434.7,715.1 434.7,711.6M434.7,711.6 430.7,710.6 426.7,709.9 422.7,708.9 419.4,706.4 415.6,704.7 411.7,703.4 410.1,699.3 406.1,697.3M373.0,740.4 375.0,738.2 377.1,736.1 377.8,733.2 378.4,730.3 381.2,728.5 384.5,728.5 384.8,725.2 386.8,722.6 386.3,719.7 385.8,716.7 384.5,714.0 383.5,711.2 385.3,708.6 387.3,706.3 389.1,703.4 388.1,700.1M341.0,681.1 345.3,682.2 349.3,680.4 354.4,680.2 356.2,675.6 359.2,678.4 362.9,680.3 367.0,680.9 370.7,682.8M446.3,702.5 445.1,698.6 443.5,694.9 442.7,690.6 445.3,687.0 442.6,683.6 443.1,679.4 441.9,675.6 439.5,672.5 434.9,671.7 433.5,667.4 433.5,663.0 430.1,660.3 426.7,658.1 425.0,654.4 422.3,651.3 421.7,647.3M446.3,702.5 443.3,704.8 439.8,706.2 437.6,709.2 434.7,711.6M421.7,647.3 419.8,646.9M377.5,627.2 379.8,630.6 382.3,633.8 386.6,634.7 389.4,638.0M429.1,594.1 426.9,597.1 425.4,600.4 421.3,599.8 418.6,602.9 415.8,605.1 413.8,607.9 413.2,611.5 411.2,614.4 413.1,617.8 413.6,621.6 411.5,624.8 409.6,628.1 407.9,631.8 410.5,635.0 414.1,637.2 413.3,641.3M264.2,618.6 261.9,623.1 260.6,628.0M260.6,628.0 264.2,631.8 264.7,637.1 264.1,642.2 266.2,646.9M290.8,656.4 287.3,656.1 284.0,657.3M266.2,646.9 270.5,650.0 274.0,653.9 279.0,655.7 284.0,657.3M290.7,703.3 287.6,702.8 285.3,700.6 283.1,698.4 282.0,695.6 279.7,693.6 277.3,691.8 274.2,692.6 271.2,691.5M284.0,657.3 280.0,660.2 278.4,665.0 278.6,669.8 277.8,674.5 272.8,676.7 269.8,681.2 270.8,686.3 271.2,691.5M253.8,729.7 254.0,724.3 252.9,719.1 252.1,716.4 251.2,713.8 249.8,711.1 246.8,710.4 247.9,707.7 250.2,706.0 250.5,703.2 250.6,700.4 253.8,701.6 256.8,699.8 259.3,697.4 259.1,694.0M220.7,707.5 223.6,704.6 227.6,703.5 226.7,700.8 227.6,698.0 230.3,698.2 233.1,697.6 234.7,693.9 235.3,689.9 238.6,687.3 239.5,683.2M239.5,683.2 242.4,686.1 241.0,689.9 244.2,691.6 247.7,691.5 252.2,690.3 253.0,694.8 256.3,696.2 259.1,694.0M259.1,694.0 262.6,692.6 264.5,689.4 267.7,691.0 271.2,691.5M590.3,710.1 587.3,709.1 584.3,710.0 581.8,711.8 578.6,711.7 576.1,713.6 574.8,716.4 571.8,717.1 569.6,719.3 567.3,721.4 565.2,723.5 562.2,724.5 560.0,726.6 556.9,727.0 553.9,728.2 551.2,726.3 548.0,726.4M548.0,726.4 547.3,726.1M547.3,726.1 548.4,723.4 549.8,720.7 550.4,717.7 552.6,715.5 550.1,713.0 548.3,710.1 549.7,707.0 550.7,703.7 549.6,701.1 549.1,698.2 548.5,695.2 546.0,693.4 544.4,690.4 546.0,687.4 545.6,683.8 542.2,682.7M567.6,676.1 565.0,678.4 561.9,680.0 558.5,679.3 555.0,679.9 551.7,679.7 548.3,679.9 545.4,681.6 542.2,682.7M581.0,662.8 577.8,667.2 572.3,667.4 568.8,671.1 567.6,676.1M594.5,710.3 590.3,710.1M564.8,749.2 568.4,748.3 572.0,748.6 574.9,750.9 577.3,753.7 580.7,755.2 584.0,753.5 587.4,753.9 590.6,754.7M564.8,749.2 565.1,745.1 563.2,741.6 562.5,737.7 561.6,733.9 559.3,730.5 555.7,728.5 551.9,727.3 548.0,726.4M522.9,736.5 526.1,735.4 529.1,734.1 532.4,733.5 535.2,731.7 538.4,729.7 540.1,726.4 543.7,726.4 547.3,726.1M535.1,676.6 538.7,679.6 542.2,682.7M529.3,657.1 530.4,662.0 531.5,667.0 534.4,671.4 535.1,676.6M511.3,825.4 509.7,822.3 506.9,820.2 508.7,817.3 510.5,814.4 510.2,811.0 507.0,809.5 508.0,806.7 508.3,803.6 505.9,802.1 503.3,800.8 503.8,797.4 501.0,795.5 499.2,793.3 498.0,790.8 496.3,788.7 494.7,786.4M511.3,825.4 509.9,828.7 506.8,830.6M506.8,830.6 502.1,828.9 497.5,827.0 492.6,828.1 487.8,829.3 483.9,832.6 480.0,835.9 475.0,833.7 469.7,835.0M469.7,835.0 466.2,833.5 462.5,834.5 459.3,832.8 455.7,832.4 454.4,828.6 453.8,824.7 450.4,822.8 446.8,821.1M444.9,816.3 446.8,821.1M522.2,825.7 516.7,825.2 511.3,825.4M545.8,847.7 547.3,845.3 547.9,842.5 545.8,840.6 543.3,839.4 539.9,836.7 536.5,834.0 533.1,831.6 529.4,829.8 525.4,828.3 522.2,825.7M502.9,866.4 504.7,861.9 507.9,858.2 507.9,853.4 506.8,848.7 506.4,843.9 504.0,839.6 503.3,834.5 506.8,830.6M470.3,866.7 469.3,862.8 469.0,858.9 466.5,855.0 468.5,850.9 465.9,846.8 468.9,842.9 468.0,838.8 469.7,835.0M438.1,810.8 441.8,813.3 444.9,816.3M497.4,766.4 498.5,771.7 495.6,776.3 496.4,781.4 494.7,786.4M477.5,756.9 480.8,756.4 483.6,754.4 486.8,755.4 489.4,757.5 491.5,759.6 493.4,761.9 495.3,764.2 497.4,766.4M477.5,756.9 474.1,757.4 470.9,756.5M428.6,872.0 430.3,867.8 433.7,864.9 431.7,861.0 431.2,856.5 429.2,852.6 430.2,848.4 427.3,845.5 425.0,842.1 427.1,838.0 428.6,833.7 428.9,829.2 429.3,824.7 434.5,825.7 437.7,821.4 442.3,821.8 446.8,821.1M584.2,809.0 582.3,806.2 583.4,803.0 585.6,800.8 586.8,798.0 589.4,795.6 592.4,793.6 592.1,789.8 589.6,787.0M584.2,809.0 580.8,811.8 576.5,812.8 572.7,814.8 568.7,816.3M589.6,787.0 585.6,785.1 581.1,784.9 576.8,785.6 572.6,786.9 568.6,785.2 564.4,784.6 560.4,783.1 556.8,780.8M568.7,816.3 565.8,815.3 562.8,814.8 560.0,813.4 557.9,811.1 555.5,809.1 552.6,808.2 550.3,806.2 548.2,804.0M548.2,804.0 548.6,799.6 549.0,795.1 547.9,790.7 549.1,786.3M549.1,786.3 553.0,783.5 556.8,780.8M604.7,825.3 600.7,824.8 599.8,820.9 596.9,819.3 594.7,816.8 590.9,817.2 587.4,815.7 585.6,812.4 584.2,809.0M589.7,786.9 589.6,787.0M568.6,831.9 570.8,828.3 570.2,824.1 567.4,820.6 568.7,816.3M564.8,749.2 566.7,753.5 568.1,758.1 566.1,760.3 566.3,763.3 567.8,765.6 570.1,767.3 567.1,771.5 565.9,776.6 561.8,779.6 556.8,780.8M522.2,825.7 524.7,821.6 529.5,821.3 532.6,818.3 536.2,816.0 539.5,813.3 541.8,809.6 544.4,806.1 548.2,804.0M505.8,762.0 501.7,764.3 497.4,766.4M505.8,762.0 509.0,763.3 511.4,765.8 512.4,769.1 514.9,771.6 517.1,774.2 518.5,777.2 520.2,780.2 522.9,782.2 525.8,785.1 529.9,784.3 533.2,782.9 536.5,781.3 539.8,782.4 542.5,784.5 545.6,786.1 549.1,786.3M505.8,762.0 509.5,759.6 513.9,759.0 517.8,756.9 520.5,753.4 522.2,749.3 523.7,745.2 521.9,741.0 522.9,736.5M486.2,649.7 483.8,646.7 480.1,645.7 476.1,646.2 473.4,643.2 470.6,646.7 466.3,645.5 462.6,644.9 459.0,644.0M486.2,649.7 487.2,652.7 487.7,655.9 488.9,658.9 488.7,662.1 491.4,664.1 492.7,667.1 493.3,670.3 495.1,673.1 494.1,676.1 491.9,678.5 490.0,681.1 488.9,684.0 485.4,685.9 485.5,689.8 485.6,693.1 486.2,696.4M454.2,699.0 453.9,694.8 450.2,692.8 450.4,689.2 450.9,685.6 452.5,682.4 454.5,679.5 455.9,676.3 456.0,672.7 459.0,670.1 461.7,667.1 462.0,663.0 462.8,659.1 460.6,655.8 459.8,651.9 457.4,648.8 454.2,646.4M454.2,699.0 457.1,699.6 460.0,699.8 462.9,700.2 465.8,700.9 469.7,700.2 471.4,696.7 474.4,698.5 477.5,700.3M454.2,646.4 459.0,644.0M477.5,700.3 481.8,698.3 486.2,696.4M459.2,609.8 461.2,614.0 461.1,618.6 464.7,622.0 464.8,626.9 465.5,632.0 461.5,635.3 461.3,639.9 459.0,644.0M490.2,647.7 486.2,649.7M446.3,702.5 450.0,700.2 454.2,699.0M421.7,647.3 426.1,648.8 429.3,652.2 433.8,652.1 438.2,653.5 442.5,652.5 446.3,650.1 450.5,648.9 454.2,646.4M153.7,634.6 158.4,635.2 160.7,631.1M180.5,673.0 182.9,670.0 184.4,666.5 183.4,662.9 182.3,659.3 184.1,656.0 184.3,652.3 185.5,648.2 182.2,645.4M182.2,645.4 179.7,642.7 176.5,640.7 174.7,637.4 174.5,633.6 171.5,631.4 168.0,630.3 164.3,630.4 160.7,631.1M169.2,597.4 170.2,600.7 170.1,604.1 171.6,607.1 173.4,609.9M160.7,631.1 162.8,628.8 164.9,626.5 167.9,624.9 168.9,621.7 168.6,618.3 170.8,615.7 172.5,613.0 173.4,609.9M247.2,594.2 244.2,595.4 242.1,597.7 239.0,597.6 236.1,598.6 233.3,600.3 231.9,603.1 228.5,602.7 225.9,604.9M260.6,628.0 257.3,629.6 254.0,631.1 250.6,629.8 246.9,629.4 243.7,631.1 240.2,632.0 237.0,629.9 233.2,630.4M233.2,630.4 234.5,626.3 230.8,624.0 229.9,620.5 226.9,618.4 226.9,614.4 229.4,611.4 227.9,608.0 225.9,604.9M173.4,609.9 175.7,612.7 178.1,615.4 181.5,616.5 185.1,616.6 188.6,616.7 191.9,615.2 194.9,617.1 198.5,617.2M182.2,645.4 186.0,644.6 188.2,641.5 191.4,643.3 195.0,644.0 198.3,642.8 200.0,639.9 201.8,637.1 204.1,634.8M204.1,634.8 201.7,630.7 201.5,626.0 198.2,622.2 198.5,617.2M206.2,578.5 206.9,582.0 210.0,583.8 210.0,587.2 208.7,590.2 208.9,593.3 209.9,596.2 211.8,598.7 212.3,601.7M198.5,617.2 200.5,615.3 202.8,613.7 204.3,611.3 204.2,608.4 207.9,604.7 212.3,601.7M225.9,604.9 222.3,606.0 218.8,604.7 215.0,604.5 212.3,601.7M932.6,853.0 928.1,851.0 923.6,849.0M901.2,867.0 901.0,863.1M901.0,863.1 903.6,860.6 905.5,857.6 907.3,854.5 909.7,851.8 913.3,854.1 917.5,854.8 920.9,852.3 923.6,849.0M938.6,817.7 935.4,819.8 933.4,823.2 930.6,826.2 930.6,830.3 926.8,829.2 923.1,828.0 920.0,830.9 915.7,831.0M923.6,849.0 920.6,844.7 916.7,841.3 917.5,836.0 915.7,831.0M302.0,879.4 297.1,880.2 292.3,879.0 287.7,877.2 282.8,877.0M302.0,879.4 305.3,879.4 307.4,876.7M307.4,876.7 309.1,872.9 309.5,868.7 312.0,865.0 311.4,860.6M283.7,859.1 285.9,862.2 289.2,863.9 292.9,863.9 296.4,862.8 299.9,865.0 304.0,865.0 305.7,861.3 309.2,859.1M283.7,859.1 282.7,863.2 278.8,865.0 275.7,869.0 279.5,872.5M309.2,859.1 311.4,860.6M282.8,877.0 280.8,875.0 279.5,872.5M311.3,898.2 308.3,893.8 304.9,889.7 304.0,886.9 302.0,885.0 301.0,882.2 302.0,879.4M284.9,902.6 286.7,899.5 288.4,896.3 287.6,892.8 286.1,889.6 284.9,886.5 283.6,883.5 283.0,880.3 282.8,877.0M322.3,879.7 318.4,879.5 314.6,879.1 311.4,876.6 307.4,876.7M320.5,860.6 316.0,863.4 311.4,860.6M281.1,836.5 281.6,839.4 282.0,842.4 284.2,844.5 285.2,847.5 285.1,850.9 287.2,853.7 285.4,856.4 283.7,859.1M309.2,829.1 311.7,832.4 313.7,836.1 313.2,840.3 311.3,844.1 312.0,848.0 312.4,851.9 310.2,855.2 309.2,859.1M261.4,874.9 265.8,872.9 270.0,870.7 275.0,870.6 279.5,872.5M225.2,637.8 223.3,639.7 220.9,641.2 219.1,639.1 217.1,637.2 212.6,635.4 209.0,638.6M225.2,637.8 226.3,642.4 229.1,646.4 232.6,650.0 237.6,650.3 240.5,654.0 240.7,658.7 239.7,663.2 240.4,667.7M209.0,638.6 210.7,642.7 209.6,647.1 207.1,650.5 204.2,653.6 202.5,657.5 203.0,661.7 205.2,665.2 205.9,669.3M205.9,669.3 208.6,672.9 212.7,674.6 217.1,675.2 221.3,674.0 225.8,672.2 230.2,670.0 232.3,674.8 237.2,676.7M237.2,676.7 239.2,672.3 240.4,667.7M233.2,630.4 231.1,632.2 228.4,633.2 225.5,634.6 225.2,637.8M204.1,634.8 205.5,638.0 209.0,638.6M266.2,646.9 263.2,650.2 259.4,652.8 254.9,652.3 250.5,653.8 246.9,656.4 244.1,659.8 241.2,663.2 240.4,667.7M193.3,676.5 195.8,673.7 198.6,671.1 202.2,670.0 205.9,669.3M869.3,882.1 869.7,878.2 869.1,874.3 873.4,872.8 874.2,868.3 873.9,863.7 870.5,860.6 872.6,856.9 875.4,853.7M901.0,863.1 900.8,858.8 897.9,855.6 893.9,854.5 890.3,852.5M875.4,853.7 879.2,852.8 882.9,853.9 886.6,853.1 890.3,852.5M839.6,861.8 843.1,859.7 846.9,858.5 847.1,854.4 848.7,850.7 852.3,848.4 856.4,848.8 856.0,844.1 860.2,841.9M875.4,853.7 874.8,850.8 872.9,848.6 871.9,846.0 871.3,843.2 868.5,843.1 865.8,842.4 863.0,841.9 860.2,841.9M834.7,822.1 838.7,822.1 840.5,825.7 843.9,826.5 846.7,828.7 850.1,829.4 853.5,829.7 857.0,830.4 859.8,832.5M860.2,841.9 862.9,840.3 862.8,837.1 861.0,835.0 859.8,832.5M907.9,827.0 904.7,827.3 901.7,828.5 899.7,831.2 896.6,832.5M907.9,827.0 906.3,822.0 904.5,817.1 906.0,812.1 906.0,806.8M896.6,832.5 894.4,828.9 890.1,829.0 886.6,827.8 883.1,826.9 881.5,823.0 878.5,820.0 874.4,819.7 870.3,819.5M906.0,806.8 902.3,803.3 897.8,800.8 893.3,798.4 889.2,795.2M889.2,795.2 885.1,798.5 880.0,800.0 877.1,800.3 874.5,801.4 874.0,804.4 871.8,806.4M871.8,806.4 869.7,809.3 869.4,812.8 868.1,816.4 870.3,819.5M915.7,831.0 910.5,831.6 907.9,827.0M890.3,852.5 891.8,850.0 892.2,847.2 894.0,844.9 896.5,843.5 896.9,838.0 896.6,832.5M926.2,797.4 923.8,798.9 920.9,799.3 918.7,801.0 916.3,802.5 913.9,804.0 911.6,805.5 908.7,805.9 906.0,806.8M859.8,832.5 861.7,828.7 864.0,825.1 865.7,820.7 870.3,819.5M889.8,790.9 889.2,795.2M860.5,798.4 864.3,798.8 866.5,801.9 869.0,804.3 871.8,806.4" fill="none" stroke="#767676" stroke-width="0.7" stroke-linejoin="round"/></g>
<path d="M555.0,358.3 L558.5,360.7 L561.7,359.1 L564.9,360.4 L569.7,358.8 L572.9,356.7 L577.6,355.6 L579.2,361.5 L585.6,363.9 L589.6,368.7 L591.2,374.3 L595.2,378.2 L599.2,383.0 L603.9,385.4 L607.1,383.0 L611.1,387.8 L615.9,393.4 L619.1,395.8 L625.5,393.4 L630.2,396.6 L635.8,401.4 L639.0,403.7 L645.4,402.2 L654.1,398.6 L656.5,402.9 L658.1,404.5 L649.4,406.9 L643.0,408.8 L633.4,410.1 L625.5,410.9 L622.3,411.7 L624.7,416.5 L627.1,422.9 L631.0,429.2 L625.5,433.2 L617.5,437.2 L609.5,440.1 L603.9,437.2 L601.6,432.4 L596.8,434.8 L592.0,436.9 L585.6,438.0 L579.2,438.8 L574.5,441.2 L568.1,439.6 L564.1,434.8 L560.9,431.6 L556.9,433.2 L555.3,442.0 L550.6,448.4 L545.0,453.1 L542.6,457.9 L540.2,453.9 L533.0,457.1 L528.2,461.1 L524.3,460.3 L522.7,455.5 L520.3,450.0 L523.5,445.2 L522.7,440.4 L521.1,434.0 L520.3,426.9 L524.3,422.9 L528.2,425.3 L533.8,424.5 L538.6,425.3 L537.8,419.7 L535.4,414.9 L534.6,410.9 L538.6,409.3 L542.6,406.1 L549.0,407.7 L553.7,405.3 L558.5,402.9 L560.1,397.4 L559.3,392.6 L553.7,387.8 L549.0,383.0 L545.0,379.8 L547.4,373.5 L549.0,368.7 L552.2,363.1ZM501.2,434.8 L505.1,433.2 L509.1,434.0 L508.8,438.8 L505.9,440.7 L502.7,438.8Z" fill="#c6c6fd"/>
<path d="M680.7,460.7 L687.1,459.9 L696.6,457.5 L703.0,453.5 L709.4,459.1 L714.1,462.3 L709.4,471.9 L712.5,481.4 L709.4,486.2 L712.5,494.2 L718.1,505.3 L712.5,506.9 L700.6,507.7 L693.4,502.2 L685.5,498.2 L679.1,498.2 L674.3,499.8 L673.5,496.6 L675.1,489.4 L672.7,485.4 L664.7,483.0 L663.9,476.7 L664.7,470.3 L672.7,467.9 L675.9,465.5ZM616.1,505.3 L620.9,504.5 L628.1,506.9 L639.2,504.5 L648.8,502.9 L658.4,499.8 L661.6,501.4 L665.5,498.2 L669.5,499.8 L674.3,499.8 L679.1,498.2 L685.5,498.2 L693.4,502.2 L700.6,507.7 L693.4,511.7 L685.5,514.9 L679.1,518.1 L675.9,522.9 L683.1,526.9 L683.9,535.6 L681.5,548.4 L685.5,554.7 L688.6,561.1 L682.3,565.9 L674.3,569.1 L667.9,567.5 L661.6,565.1 L652.0,563.5 L645.6,567.5 L642.4,572.3 L641.6,577.1 L634.5,576.3 L628.1,575.5 L622.5,570.7 L613.7,565.9 L605.0,563.5 L599.4,566.7 L591.4,568.3 L581.1,569.1 L581.9,557.9 L585.9,553.9 L597.8,552.4 L609.8,551.6 L611.4,546.8 L616.9,543.6 L624.9,538.8 L626.5,535.6 L622.5,532.4 L616.9,533.2 L612.9,529.2 L609.0,522.9 L605.0,519.7 L605.8,514.9 L600.7,513.0 L595.4,510.1 L594.6,508.5 L597.8,506.9 L601.8,506.1 L603.4,510.9 L609.8,510.9 L615.3,510.1Z" fill="#c6c6fd"/>
<path d="M592.2,491.0 L597.8,486.2 L605.0,482.2 L613.7,479.0 L620.1,480.6 L627.3,478.2 L629.7,473.5 L639.2,467.9 L648.8,460.7 L656.0,459.1 L661.6,456.7 L662.4,453.5 L667.1,451.2 L672.7,455.9 L675.9,460.7 L680.7,460.7 L675.9,465.5 L672.7,467.9 L664.7,470.3 L663.9,476.7 L664.7,483.0 L672.7,485.4 L675.1,489.4 L673.5,496.6 L669.5,499.8 L665.5,498.2 L661.6,501.4 L658.4,499.8 L648.8,502.9 L639.2,504.5 L628.1,506.9 L620.9,504.5 L616.1,505.3 L615.3,510.1 L609.8,510.9 L603.4,510.9 L601.8,506.1 L597.8,506.9 L594.6,508.5 L591.8,500.6 L591.8,494.2Z" fill="#0000ff"/>
<path d="M572.2,573.4 L581.0,570.2 L590.6,569.1 L600.1,567.8 L605.7,562.7 L609.7,565.4 L616.9,568.6 L622.4,572.6 L627.2,575.8 L633.6,579.8 L641.6,578.2 L644.7,576.6 L643.9,583.7 L640.0,591.7 L635.2,596.5 L630.4,598.9 L625.6,595.7 L624.0,591.7 L624.8,586.9 L619.2,588.5 L612.9,594.1 L608.1,598.1 L606.5,602.1 L600.9,604.5 L596.9,601.3 L593.7,596.5 L591.4,598.1 L589.0,606.1 L588.2,615.6 L586.6,620.4 L583.4,614.8 L581.0,606.1 L578.6,598.1 L577.0,594.1 L575.4,586.9 L573.0,580.6Z" fill="#0000ff"/>
<path d="M596.8,434.8 L597.1,428.0 L601.4,420.6 L613.2,416.2 L622.3,417.8 L622.3,411.7M700.6,507.7 L693.4,502.2 L685.5,498.2 L679.1,498.2 L674.3,499.8" fill="none" stroke="#a9a9e4" stroke-width="0.8"/>
<path d="M630.0,35.7 L633.0,46.3 L646.0,77.0 L660.0,108.5 L677.8,150.7 L679.8,160.0 L687.8,185.5 L695.8,207.8 L703.7,226.9 L710.1,241.3 L711.2,252.4 L712.5,265.2 L718.1,285.9 L722.6,308.4 L727.1,330.3 L734.3,354.2 L743.0,371.7 L747.3,379.7 L748.6,389.2 L751.0,411.6 L755.8,432.3 L761.4,448.2 L765.5,455.9 L772.7,471.9 L776.7,483.8 L781.4,495.8 L786.2,506.9 L794.2,521.3 L804.5,536.4 L811.7,551.6 L821.3,567.5 L828.8,580.0 L837.5,592.7 L848.7,607.1 L859.8,619.0 L866.2,629.4 L876.6,642.2 L886.9,653.3 L898.1,662.9 L909.2,675.6 L923.6,688.4 L937.9,699.5 L947.5,707.5 L960.2,714.5 L971.5,721.0 L982.9,728.7 L988.2,736.5 L995.4,751.6 L1002.1,763.1 L1015.5,776.5 L1030.8,789.9 L1032.7,799.4 L1040.3,809.0 L1051.8,815.7 L1063.3,824.3 L1073.1,830.5 L1086.4,838.3 L1104.7,846.6 L1119.6,853.2 L1134.3,858.0 L1137.9,854.9 L1138.7,871.5 L1139.6,896.4 L1141.2,903.0 L1146.0,912.0 L1152.8,919.7 L1161.1,923.8 L1172.4,926.5" fill="none" stroke="#2a2a2a" stroke-width="1.3" stroke-linejoin="round"/>
<path d="M776.7,483.8 L769.5,491.3M804.5,536.4 L800.2,540.4M859.8,619.0 L852.7,620.6M861.8,622.2 L856.3,627.0M898.1,662.9 L894.1,664.5M677.8,150.7 L675.0,152.0M660.0,109.5 L657.5,110.8M747.3,379.7 L749.5,380.3M1051.2,816.3 L1047.5,823.0M1032.3,789.5 L1032.8,793.5" fill="none" stroke="#111" stroke-width="1.9"/>
<path d="M294.5,35.7 V987.5M540.5,35.7 V987.5M786.0,35.7 V987.5M1031.5,35.7 V987.5M83.2,308.7 H1172.4M83.2,642.4 H1172.4M83.2,972.8 H1172.4" fill="none" stroke="#303030" stroke-width="1"/>
</g>
<path d="M589.7,501.1 L593.9,514.2 L607.7,514.2 L596.6,522.2 L600.8,535.3 L589.7,527.2 L578.6,535.3 L582.8,522.2 L571.7,514.2 L585.5,514.2Z" fill="#fff" stroke="#000" stroke-width="4" stroke-linejoin="miter"/>
<rect x="73.5" y="26.3" width="1108.5" height="970.8" fill="none" stroke="#000" stroke-width="1.3"/>
<rect x="83.2" y="35.7" width="1089.2" height="951.8" fill="none" stroke="#000" stroke-width="1.3"/>
<path d="M83.2,26.3 V997.1 M1172.4,26.3 V997.1 M73.5,35.7 H1182.0 M73.5,987.5 H1182.0" fill="none" stroke="#000" stroke-width="1.2"/>
<rect x="294.5" y="26.3" width="246.0" height="9.4" fill="#000"/>
<rect x="294.5" y="987.5" width="246.0" height="9.6" fill="#000"/>
<rect x="786.0" y="26.3" width="245.5" height="9.4" fill="#000"/>
<rect x="786.0" y="987.5" width="245.5" height="9.6" fill="#000"/>
<rect x="73.5" y="35.7" width="9.7" height="273.0" fill="#000"/>
<rect x="1172.4" y="35.7" width="9.6" height="273.0" fill="#000"/>
<rect x="73.5" y="642.4" width="9.7" height="330.4" fill="#000"/>
<rect x="1172.4" y="642.4" width="9.6" height="330.4" fill="#000"/>
<text class="ax" x="294.5" y="16.5" text-anchor="middle">13°00'</text>
<text class="ax" x="294.5" y="1023.9" text-anchor="middle">13°00'</text>
<text class="ax" x="540.5" y="16.5" text-anchor="middle">13°30'</text>
<text class="ax" x="540.5" y="1023.9" text-anchor="middle">13°30'</text>
<text class="ax" x="786.0" y="16.5" text-anchor="middle">14°00'</text>
<text class="ax" x="786.0" y="1023.9" text-anchor="middle">14°00'</text>
<text class="ax" x="1031.5" y="16.5" text-anchor="middle">14°30'</text>
<text class="ax" x="1031.5" y="1023.9" text-anchor="middle">14°30'</text>
<text class="ax" x="63.1" y="317.2" text-anchor="end">43°00'</text>
<text class="ax" x="1191.3" y="317.2" text-anchor="start">43°00'</text>
<text class="ax" x="63.1" y="650.9" text-anchor="end">42°30'</text>
<text class="ax" x="1191.3" y="650.9" text-anchor="start">42°30'</text>
<text class="ax" x="63.1" y="981.3" text-anchor="end">42°00'</text>
<text class="ax" x="1191.3" y="981.3" text-anchor="start">42°00'</text>
<g>
<rect x="543.6" y="46.5" width="611" height="61.6" fill="#fff" stroke="#000" stroke-width="1.1"/>
<text class="hd" style="font-size:12.2px" x="548.4" y="59.8">Terremoto del 17-12-2011 04:04:16 (ora locale) ML=3.4 Prof=19 km</text>
<text class="hd" style="font-size:12.2px" x="548.4" y="74.7">Vibrazione delle porcellane</text>
<text class="hd" style="font-size:12.2px" x="548.4" y="89.7">Dati non verificati estratti da 66 questionari compilati tramite Internet, relativi a comuni con almeno 3 questionari.</text>
<text class="hd" style="font-size:12.2px" x="548.4" y="104.6">Aggiornato il: 09-01-2026 03:34 (ora locale)</text>
</g>
<g>
<rect x="1050.8" y="170" width="104.5" height="338.6" fill="#fff"/>
<rect x="1052.3" y="171.4" width="101.5" height="335.7" fill="#fff" stroke="#000" stroke-width="1.1"/>
<text class="lg" style="font-size:12.7px" x="1103.2" y="192">Percentuale</text>
<text class="lg" style="font-size:12.7px" x="1103.2" y="207.6">di vibrazione</text>
<text class="lg" style="font-size:12.7px" x="1103.2" y="224.1">delle</text>
<text class="lg" style="font-size:12.7px" x="1103.2" y="239.8">porcellane</text>
<rect x="1062.8" y="254.9" width="80" height="36.9" fill="#e6e6ff"/>
<rect x="1062.8" y="298.8" width="80" height="37" fill="#c6c6fd"/>
<rect x="1062.8" y="344.1" width="80" height="36.5" fill="#8484fb"/>
<rect x="1062.8" y="386.2" width="80" height="37.4" fill="#0000ff"/>
<text class="lg" style="font-size:12.7px" x="1103" y="278.2">0 - 24%</text>
<text class="lg" style="font-size:12.7px" x="1103" y="322.2">25 - 49%</text>
<text class="lg" style="font-size:12.7px" x="1103" y="367">50 - 74%</text>
<text class="lg" style="font-size:12.7px;fill:#fff" x="1103" y="408.4">75 - 100%</text>
<path d="M1052.3,436.3 H1153.8" stroke="#000" stroke-width="1" stroke-dasharray="2,2" fill="none"/>
<text class="lg" style="font-size:12.7px" x="1103" y="452.7">Epicentro</text>
<text class="lg" style="font-size:12.7px" x="1103" y="468.9">strumentale</text>
<path d="M1100.6,482.7 L1102.5,488.4 L1108.5,488.4 L1103.6,492.0 L1105.5,497.7 L1100.6,494.2 L1095.7,497.7 L1097.6,492.0 L1092.7,488.4 L1098.7,488.4Z" fill="#fff" stroke="#000" stroke-width="1.1" stroke-linejoin="miter"/>
</g>
<g>
<rect x="186.3" y="931.2" width="119.8" height="5" fill="#fff" stroke="#000" stroke-width="1"/>
<rect x="186.3" y="931.2" width="30.3" height="5" fill="#000"/>
<rect x="246.3" y="931.2" width="30" height="5" fill="#000"/>
<path d="M186.3,931.2 V940.3 M246.3,931.2 V940.3 M306.1,931.2 V940.3 M216.6,936 V938.4 M276.3,936 V938.4" stroke="#000" stroke-width="1" fill="none"/>
<text class="ax" style="font-size:31.5px" x="246.5" y="916.3" text-anchor="middle">km</text>
<text class="ax" x="186.3" y="964.7" text-anchor="middle">0</text>
<text class="ax" x="246.5" y="964.7" text-anchor="middle">10</text>
<text class="ax" x="305.9" y="964.7" text-anchor="middle">20</text>
</g>
<g>
<defs>
<radialGradient id="gb" cx="0.38" cy="0.25" r="0.85"><stop offset="0" stop-color="#2fa6c9"/><stop offset="0.45" stop-color="#1b82ab"/><stop offset="1" stop-color="#0a5c84"/></radialGradient>
<radialGradient id="gs" cx="0.45" cy="0.35" r="0.7"><stop offset="0.6" stop-color="#000" stop-opacity="0"/><stop offset="1" stop-color="#000" stop-opacity="0.28"/></radialGradient>
<clipPath id="gc"><circle cx="512" cy="512" r="452"/></clipPath>
</defs>
<g transform="translate(98,44) scale(0.0664)">
<circle cx="512" cy="512" r="452" fill="url(#gb)"/>
<g clip-path="url(#gc)">
<path d="M560,255 L660,60 L1000,60 L1000,1000 L505,1000 Q545,600 560,255Z" fill="#c9b9d0"/>
<path d="M565,250 L655,90 L725,120 L785,175 Q680,190 565,250Z" fill="#2e9e3c"/>
<path d="M770,140 L815,185 L790,190Z" fill="#f5e51c"/>
<path d="M570,262 Q680,195 785,188 Q810,250 800,312 Q700,265 570,262Z" fill="#e5182b"/>
<path d="M585,278 Q700,280 797,340 Q760,385 715,418 Q670,330 585,278Z" fill="#2e9e3c"/>
<path d="M562,282 Q650,330 702,432 Q640,460 558,452Z" fill="#f5e51c"/>
<path d="M722,428 Q770,390 802,345 Q870,390 918,455 Q880,540 802,602 Q775,510 722,428Z" fill="#f5e51c"/>
<path d="M555,465 Q640,475 706,440 Q755,510 787,612 Q680,680 545,690Z" fill="#e5182b"/>
<path d="M545,705 Q690,690 796,625 Q825,700 838,795 Q700,900 518,897Z" fill="#1f9a3c"/>
<path d="M518,910 Q700,905 835,808 L860,900 L700,1000 L505,1000Z" fill="#158a3c"/>
<path d="M843,790 Q880,765 905,730 L885,775 L850,805Z" fill="#e5182b"/>
<path d="M933,430 L958,420 L968,485 L940,472Z" fill="#2e9e3c"/>
<g fill="none" stroke="#fff" stroke-width="9" stroke-opacity="0.92">
<path d="M560,258 Q545,600 505,965"/>
<path d="M560,258 L440,85"/>
<path d="M560,258 Q430,190 330,200 Q230,180 150,170"/>
<path d="M560,258 Q300,290 60,510"/>
<path d="M560,258 Q400,400 300,610 Q240,760 205,860"/>
<path d="M560,258 L660,80"/>
<path d="M560,258 Q680,190 790,182"/>
<path d="M560,258 Q700,270 800,340 Q880,390 925,450"/>
<path d="M560,258 Q670,340 715,430 Q770,520 800,610 Q830,700 845,800"/>
<path d="M558,455 Q400,440 335,310 Q300,200 440,95"/>
<path d="M545,698 Q290,640 170,420 Q130,300 210,170"/>
<path d="M520,903 Q220,830 70,540"/>
<path d="M520,903 Q700,900 840,800"/>
<path d="M545,698 Q690,690 798,618 Q880,550 925,460"/>
<path d="M558,455 Q650,460 715,430 Q770,390 800,340 Q810,260 790,182"/>
<path d="M80,600 Q130,720 215,800" stroke-width="7"/>
</g>
<circle cx="512" cy="512" r="452" fill="url(#gs)"/>
</g>
</g>
<text x="170" y="74.5" textLength="88.9" lengthAdjust="spacingAndGlyphs" style="font-family:'DejaVu Sans Condensed','Liberation Sans',sans-serif;font-weight:bold;font-size:11.8px;fill:#4a4a4a">ISTITUTO NAZIONALE</text>
<text x="170" y="88.7" textLength="135" lengthAdjust="spacingAndGlyphs" style="font-family:'DejaVu Sans Condensed','Liberation Sans',sans-serif;font-weight:bold;font-size:11.8px;fill:#4a4a4a">DI GEOFISICA E VULCANOLOGIA</text>
</g>
<g>
<defs><path id="hp1" d="M1103.57,956.77 A41.30,41.30 0 1,1 1089.23,875.43 A41.30,41.30 0 1,1 1103.57,956.77"/><path id="hp2" d="M1138.06,923.45 A42.30,42.30 0 1,1 1054.74,908.75 A42.30,42.30 0 1,1 1138.06,923.45"/>
<linearGradient id="cone" x1="0" y1="0" x2="1" y2="0"><stop offset="0" stop-color="#1763b4"/><stop offset="0.6" stop-color="#0f88d6"/><stop offset="1" stop-color="#11a0e6"/></linearGradient></defs>
<circle cx="1095.6" cy="916.3" r="33.4" fill="#1d1d1b"/>
<circle cx="1095.6" cy="916.3" r="18.95" fill="none" stroke="#e2001a" stroke-width="6.5"/>
<circle cx="1095.9" cy="916.5" r="8.2" fill="#e2001a"/>
<path d="M1101.2,910.1 L1127.6,900.9 Q1131.1,900 1131.1,903.6 L1131.1,931 Q1131.1,934.6 1127.6,933.4 L1100.6,924.2 Q1096,917 1101.2,910.1Z" fill="url(#cone)"/>
<path d="M1100.6,924.2 L1127.6,933.4 Q1131.1,934.6 1131.1,931 L1131.1,928 Q1130.5,930.5 1127.5,929.5 L1102.5,921.5Z" fill="#0f5ea8" fill-opacity="0.75"/>
<circle cx="1144.6" cy="916.5" r="10" fill="#e2001a"/>
<text transform="translate(1139.2,916.5) rotate(90)" text-anchor="middle" style="font-family:'Liberation Sans',sans-serif;font-weight:bold;font-size:14px;fill:#fff">?</text>
<text style="font-family:'Liberation Sans',sans-serif;font-weight:400;font-style:normal;font-size:21px;fill:#1a1a1a"><textPath href="#hp1" startOffset="5.0" textLength="19.5" lengthAdjust="spacingAndGlyphs">hai</textPath></text>
<text style="font-family:'Liberation Sans',sans-serif;font-weight:700;font-style:normal;font-size:22px;fill:#1a1a1a"><textPath href="#hp1" startOffset="26.7" textLength="59.1" lengthAdjust="spacingAndGlyphs">sentito</textPath></text>
<text style="font-family:'Liberation Sans',sans-serif;font-weight:400;font-style:normal;font-size:22px;fill:#1a1a1a"><textPath href="#hp1" startOffset="87.6" textLength="6.1" lengthAdjust="spacingAndGlyphs">il</textPath></text>
<text style="font-family:'Liberation Sans',sans-serif;font-weight:700;font-style:normal;font-size:22px;fill:#1a1a1a"><textPath href="#hp1" startOffset="95.1" textLength="73.2" lengthAdjust="spacingAndGlyphs">terremoto</textPath></text>
<text style="font-family:'Liberation Sans',sans-serif;font-weight:400;font-style:italic;font-size:22px;fill:#e2001a"><textPath href="#hp1" startOffset="170.1" textLength="15.9" lengthAdjust="spacingAndGlyphs">.it</textPath></text>
<text style="font-family:'Liberation Sans',sans-serif;font-weight:700;font-size:20px;fill:#e2001a"><textPath href="#hp2" startOffset="13.3" textLength="41.3" lengthAdjust="spacingAndGlyphs">www.</textPath></text>
</g>
</svg>
</body></html>
